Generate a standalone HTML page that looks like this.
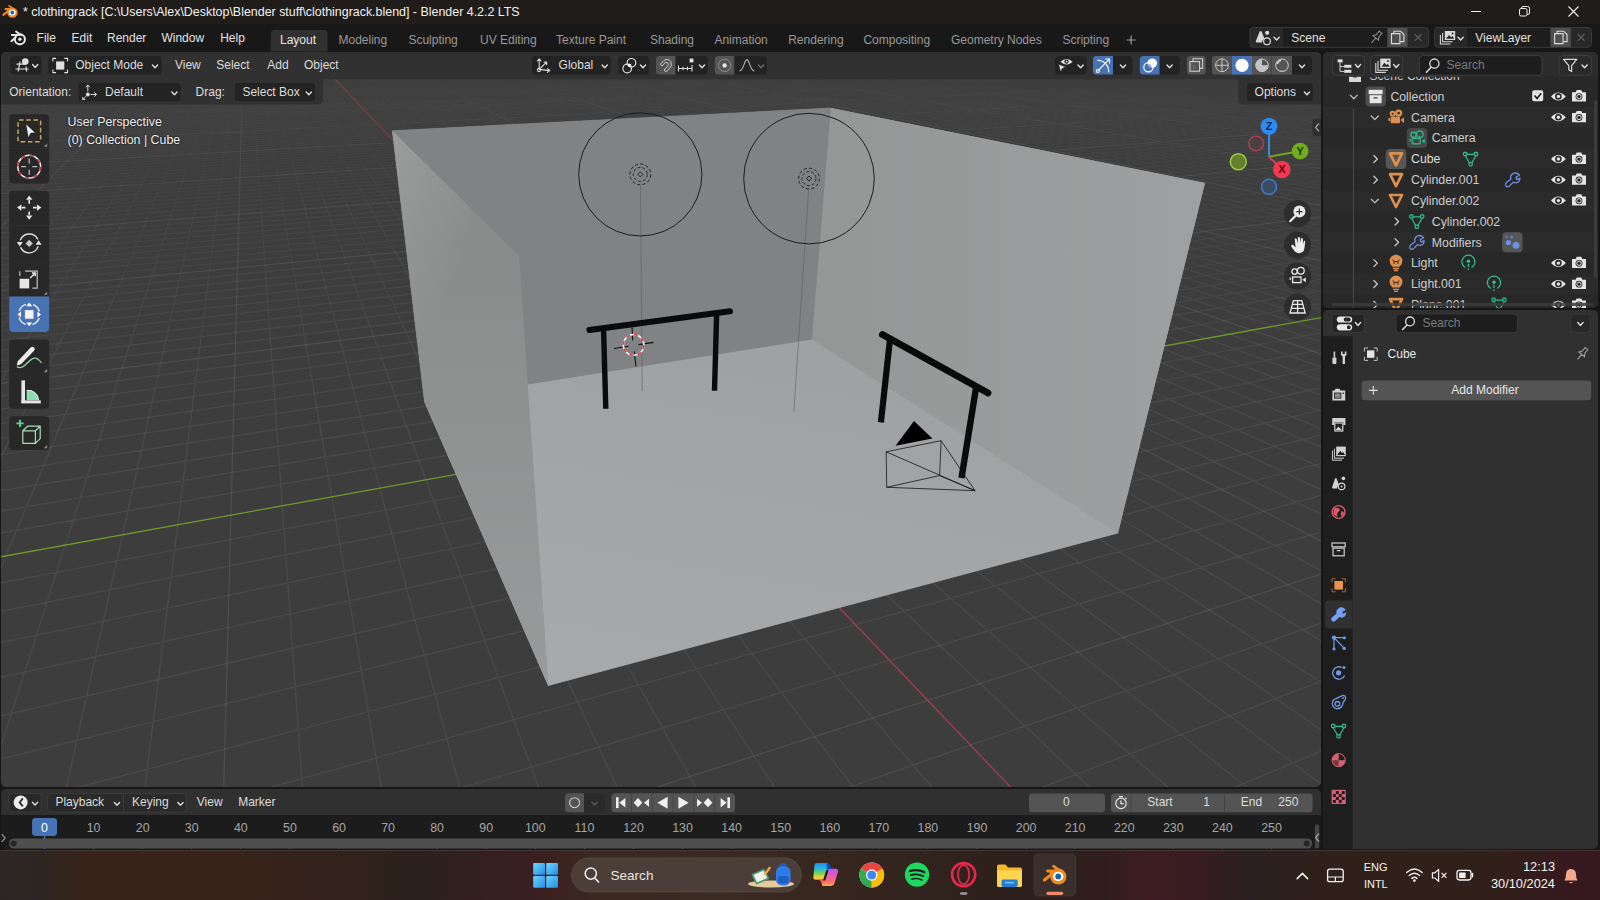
<!DOCTYPE html>
<html><head><meta charset="utf-8"><title>Blender</title>
<style>
html,body{margin:0;padding:0}
body{width:1600px;height:900px;position:relative;overflow:hidden;background:#161616;font-family:'Liberation Sans', sans-serif;}
.reg{position:absolute;overflow:hidden}
svg{position:absolute;left:0;top:0;display:block}
svg text{font-family:'Liberation Sans', sans-serif;white-space:pre}
</style></head><body>
<div class="reg" id="viewport" style="left:1px;top:52px;width:1320px;height:734.6px;border-radius:5px;background:#3d3d3d">
<svg width="1320" height="734.6" viewBox="1 52 1320 734.6">
<defs><linearGradient id="gfade" x1="0" y1="0" x2="0" y2="1" gradientUnits="userSpaceOnUse"><stop offset="0" stop-color="#fff" stop-opacity="0.15"/><stop offset="0.12" stop-color="#fff" stop-opacity="0.35"/><stop offset="0.45" stop-color="#fff" stop-opacity="1"/></linearGradient><mask id="mfade" maskUnits="userSpaceOnUse" x="0" y="0" width="1600" height="900"><rect x="0" y="0" width="1600" height="900" fill="url(#gfade)"/></mask><linearGradient id="lwall" x1="398" y1="0" x2="545" y2="60" gradientUnits="userSpaceOnUse"><stop offset="0" stop-color="#a2a4a4"/><stop offset="1" stop-color="#8a8c8c"/></linearGradient><linearGradient id="lwall2" x1="0" y1="250" x2="0" y2="690" gradientUnits="userSpaceOnUse"><stop offset="0" stop-color="#a3a5a6" stop-opacity="0"/><stop offset="1" stop-color="#a3a5a6" stop-opacity="0.6"/></linearGradient><linearGradient id="rwall" x1="830" y1="0" x2="1200" y2="0" gradientUnits="userSpaceOnUse"><stop offset="0" stop-color="#959797"/><stop offset="1" stop-color="#9ea0a1"/></linearGradient><linearGradient id="floor" x1="700" y1="340" x2="640" y2="690" gradientUnits="userSpaceOnUse"><stop offset="0" stop-color="#a0a1a3"/><stop offset="1" stop-color="#a8a9ab"/></linearGradient></defs>
<path d="M173.1,79.8L229.5,78.0M229.5,78.0L283.8,76.3M283.8,76.3L336.1,74.6M113.4,82.5L172.5,80.6M172.5,80.6L229.4,78.7M229.4,78.7L284.1,77.0M284.1,77.0L336.8,75.3M336.8,75.3L387.6,73.7M50.3,85.3L112.4,83.2M112.4,83.2L172.0,81.3M172.0,81.3L229.3,79.5M229.3,79.5L284.4,77.7M284.4,77.7L337.5,76.0M337.5,76.0L388.7,74.3M388.7,74.3L438.0,72.7M-2.0,87.7L48.7,86.1M48.7,86.1L111.3,84.1M111.3,84.1L171.4,82.1M171.4,82.1L229.1,80.2M229.1,80.2L284.7,78.4M284.7,78.4L338.2,76.7M338.2,76.7L389.7,75.0M389.7,75.0L439.4,73.4M439.4,73.4L487.4,71.8M-2.0,88.5L47.1,86.9M47.1,86.9L110.2,84.9M110.2,84.9L170.8,82.9M170.8,82.9L229.0,81.0M229.0,81.0L285.0,79.1M285.0,79.1L338.9,77.4M338.9,77.4L390.8,75.7M390.8,75.7L440.9,74.0M440.9,74.0L489.1,72.4M489.1,72.4L535.7,70.9M-2.0,89.4L45.4,87.8M45.4,87.8L109.1,85.7M109.1,85.7L170.2,83.7M170.2,83.7L228.9,81.7M228.9,81.7L285.3,79.9M285.3,79.9L339.6,78.1M339.6,78.1L391.9,76.4M391.9,76.4L442.3,74.7M442.3,74.7L490.9,73.1M490.9,73.1L537.8,71.5M537.8,71.5L583.0,70.0M-2.0,90.2L43.7,88.7M43.7,88.7L107.9,86.5M107.9,86.5L169.6,84.5M169.6,84.5L228.7,82.5M228.7,82.5L285.6,80.6M285.6,80.6L340.4,78.8M340.4,78.8L393.0,77.0M393.0,77.0L443.8,75.4M443.8,75.4L492.7,73.7M492.7,73.7L539.9,72.2M539.9,72.2L585.4,70.6M-2.0,91.1L41.9,89.6M41.9,89.6L106.8,87.4M106.8,87.4L168.9,85.3M168.9,85.3L228.6,83.3M228.6,83.3L286.0,81.4M286.0,81.4L341.1,79.5M341.1,79.5L394.2,77.8M394.2,77.8L445.3,76.0M445.3,76.0L494.5,74.4M494.5,74.4L542.0,72.8M542.0,72.8L587.9,71.2M587.9,71.2L632.1,69.8M-2.0,92.8L38.4,91.4M38.4,91.4L104.4,89.2M104.4,89.2L167.6,87.0M167.6,87.0L228.3,84.9M228.3,84.9L286.6,82.9M286.6,82.9L342.6,81.0M342.6,81.0L396.5,79.2M396.5,79.2L448.3,77.4M448.3,77.4L498.3,75.7M498.3,75.7L546.4,74.1M546.4,74.1L592.8,72.5M592.8,72.5L637.6,71.0M-2.0,93.7L36.5,92.4M36.5,92.4L103.2,90.1M103.2,90.1L167.0,87.9M167.0,87.9L228.2,85.8M228.2,85.8L287.0,83.7M287.0,83.7L343.4,81.8M343.4,81.8L397.7,79.9M397.7,79.9L449.9,78.1M449.9,78.1L500.2,76.4M500.2,76.4L548.6,74.7M548.6,74.7L595.3,73.1M595.3,73.1L640.4,71.6M640.4,71.6L683.9,70.1M-2.0,94.6L34.7,93.3M34.7,93.3L101.9,91.0M101.9,91.0L166.3,88.7M166.3,88.7L228.1,86.6M228.1,86.6L287.3,84.6M287.3,84.6L344.2,82.6M344.2,82.6L398.9,80.7M398.9,80.7L451.5,78.9M451.5,78.9L502.1,77.1M502.1,77.1L550.9,75.4M550.9,75.4L597.9,73.8M597.9,73.8L643.2,72.2M643.2,72.2L687.0,70.7M-2.0,95.5L32.8,94.3M32.8,94.3L100.7,91.9M100.7,91.9L165.6,89.6M165.6,89.6L227.9,87.5M227.9,87.5L287.7,85.4M287.7,85.4L345.0,83.4M345.0,83.4L400.1,81.4M400.1,81.4L453.1,79.6M453.1,79.6L504.1,77.8M504.1,77.8L553.2,76.1M553.2,76.1L600.5,74.4M600.5,74.4L646.1,72.8M646.1,72.8L690.2,71.3M690.2,71.3L732.7,69.8M-2.0,96.4L30.9,95.3M30.9,95.3L99.4,92.9M99.4,92.9L165.0,90.6M165.0,90.6L227.8,88.3M227.8,88.3L288.0,86.2M288.0,86.2L345.8,84.2M345.8,84.2L401.4,82.2M401.4,82.2L454.7,80.3M454.7,80.3L506.1,78.5M506.1,78.5L555.5,76.8M555.5,76.8L603.1,75.1M603.1,75.1L649.1,73.5M649.1,73.5L693.4,71.9M693.4,71.9L736.1,70.4M-2.0,97.4L28.9,96.3M28.9,96.3L98.1,93.8M98.1,93.8L164.2,91.5M164.2,91.5L227.6,89.2M227.6,89.2L288.4,87.1M288.4,87.1L346.7,85.0M346.7,85.0L402.6,83.0M402.6,83.0L456.4,81.1M456.4,81.1L508.1,79.2M508.1,79.2L557.9,77.5M557.9,77.5L605.8,75.8M605.8,75.8L652.0,74.1M652.0,74.1L696.6,72.5M696.6,72.5L739.6,71.0M-2.0,98.4L26.9,97.3M26.9,97.3L96.7,94.8M96.7,94.8L163.5,92.4M163.5,92.4L227.5,90.1M227.5,90.1L288.7,87.9M288.7,87.9L347.5,85.8M347.5,85.8L403.9,83.8M403.9,83.8L458.1,81.9M458.1,81.9L510.2,80.0M510.2,80.0L560.3,78.2M560.3,78.2L608.6,76.5M608.6,76.5L655.0,74.8M655.0,74.8L699.9,73.2M699.9,73.2L743.1,71.6M743.1,71.6L784.9,70.1M-2.0,99.4L24.8,98.4M24.8,98.4L95.4,95.8M95.4,95.8L162.8,93.4M348.4,86.7L405.2,84.6M405.2,84.6L459.8,82.6M459.8,82.6L512.3,80.7M512.3,80.7L562.7,78.9M562.7,78.9L611.3,77.2M611.3,77.2L658.1,75.5M658.1,75.5L703.2,73.8M703.2,73.8L746.7,72.3M746.7,72.3L788.7,70.7M-2.0,100.4L22.8,99.5M22.8,99.5L94.0,96.9M461.6,83.4L514.4,81.5M514.4,81.5L565.2,79.6M565.2,79.6L614.1,77.9M614.1,77.9L661.2,76.1M661.2,76.1L706.6,74.5M706.6,74.5L750.4,72.9M750.4,72.9L792.6,71.3M518.8,83.1L570.3,81.1M570.3,81.1L619.9,79.3M619.9,79.3L667.6,77.5M667.6,77.5L713.5,75.8M713.5,75.8L757.8,74.2M757.8,74.2L800.5,72.6M800.5,72.6L841.7,71.1M572.9,81.9L622.8,80.0M622.8,80.0L670.8,78.2M670.8,78.2L717.1,76.5M717.1,76.5L761.6,74.8M761.6,74.8L804.5,73.2M804.5,73.2L846.0,71.7M575.5,82.7L625.8,80.8M625.8,80.8L674.1,79.0M674.1,79.0L720.6,77.2M720.6,77.2L765.4,75.5M765.4,75.5L808.6,73.9M808.6,73.9L850.3,72.3M628.8,81.6L677.5,79.7M677.5,79.7L724.3,77.9M724.3,77.9L769.4,76.2M769.4,76.2L812.8,74.5M812.8,74.5L854.7,72.9M631.9,82.3L680.9,80.4M680.9,80.4L728.0,78.6M728.0,78.6L773.3,76.9M773.3,76.9L817.0,75.2M817.0,75.2L859.1,73.6M859.1,73.6L899.8,72.0M684.3,81.2L731.8,79.4M731.8,79.4L777.4,77.6M777.4,77.6L821.3,75.9M821.3,75.9L863.7,74.2M863.7,74.2L904.5,72.6M687.9,82.0L735.6,80.1M735.6,80.1L781.5,78.3M781.5,78.3L825.7,76.6M825.7,76.6L868.3,74.9M868.3,74.9L909.3,73.3M691.4,82.8L739.5,80.9M739.5,80.9L785.6,79.0M785.6,79.0L830.1,77.3M830.1,77.3L872.9,75.6M872.9,75.6L914.2,73.9M743.4,81.6L789.9,79.8M789.9,79.8L834.6,78.0M834.6,78.0L877.6,76.2M877.6,76.2L919.1,74.6M919.1,74.6L959.1,73.0M751.5,83.2L798.5,81.3M798.5,81.3L843.8,79.4M843.8,79.4L887.3,77.6M887.3,77.6L929.2,75.9M929.2,75.9L969.7,74.3M803.0,82.0L848.5,80.2M848.5,80.2L892.3,78.4M892.3,78.4L934.4,76.6M934.4,76.6L975.0,74.9M807.5,82.8L853.2,80.9M853.2,80.9L897.3,79.1M897.3,79.1L939.7,77.3M939.7,77.3L980.5,75.6M812.0,83.6L858.1,81.7M858.1,81.7L902.4,79.8M902.4,79.8L945.0,78.0M945.0,78.0L986.0,76.3M986.0,76.3L1025.6,74.6M816.7,84.4L863.0,82.5M863.0,82.5L907.6,80.6M907.6,80.6L950.4,78.7M950.4,78.7L991.7,77.0M991.7,77.0L1031.4,75.3M868.0,83.2L912.8,81.3M912.8,81.3L955.9,79.5M955.9,79.5L997.4,77.7M997.4,77.7L1037.3,76.0M873.1,84.0L918.2,82.1M918.2,82.1L961.5,80.2M961.5,80.2L1003.2,78.4M1003.2,78.4L1043.3,76.7M878.3,84.9L923.6,82.9M923.6,82.9L967.2,81.0M967.2,81.0L1009.1,79.1M1009.1,79.1L1049.4,77.4M883.6,85.7L929.1,83.7M929.1,83.7L972.9,81.7M972.9,81.7L1015.0,79.9M1015.0,79.9L1055.5,78.1M940.5,85.3L984.7,83.3M984.7,83.3L1027.3,81.4M1027.3,81.4L1068.2,79.5M1068.2,79.5L1107.6,77.7M946.3,86.1L990.8,84.1M990.8,84.1L1033.6,82.1M1033.6,82.1L1074.7,80.3M1074.7,80.3L1114.2,78.5M952.2,87.0L996.9,84.9M996.9,84.9L1039.9,82.9M1039.9,82.9L1081.2,81.0M1081.2,81.0L1121.0,79.2M1003.2,85.8L1046.4,83.7M1046.4,83.7L1087.9,81.8M1087.9,81.8L1127.8,79.9M1009.5,86.6L1053.0,84.5M1053.0,84.5L1094.7,82.6M1094.7,82.6L1134.8,80.7M1016.0,87.5L1059.7,85.4M1059.7,85.4L1101.6,83.4M1101.6,83.4L1141.9,81.4M1141.9,81.4L1180.6,79.6M1022.6,88.3L1066.5,86.2M1066.5,86.2L1108.6,84.2M1108.6,84.2L1149.1,82.2M1149.1,82.2L1188.0,80.3M1029.3,89.2L1073.4,87.1M1073.4,87.1L1115.7,85.0M1115.7,85.0L1156.4,83.0M1156.4,83.0L1195.4,81.1M1036.1,90.1L1080.4,87.9M1080.4,87.9L1123.0,85.8M1123.0,85.8L1163.8,83.8M1163.8,83.8L1203.0,81.8M1094.9,89.7L1137.8,87.5M1137.8,87.5L1179.0,85.4M1179.0,85.4L1218.6,83.4M1102.3,90.6L1145.4,88.4M1145.4,88.4L1186.8,86.3M1186.8,86.3L1226.6,84.2M1109.8,91.5L1153.2,89.3M1153.2,89.3L1194.8,87.1M1194.8,87.1L1234.7,85.0M1117.5,92.5L1161.1,90.2M1161.1,90.2L1202.8,88.0M1202.8,88.0L1242.9,85.9M1242.9,85.9L1281.3,83.9M1125.3,93.4L1169.1,91.1M1169.1,91.1L1211.1,88.9M1211.1,88.9L1251.3,86.7M1251.3,86.7L1289.9,84.7M1177.3,92.0L1219.4,89.8M1219.4,89.8L1259.8,87.6M1259.8,87.6L1298.5,85.5M1185.6,93.0L1227.9,90.7M1227.9,90.7L1268.5,88.5M1268.5,88.5L1307.3,86.3M1194.0,94.0L1236.5,91.6M1236.5,91.6L1277.3,89.4M1277.3,89.4L1316.3,87.2M1202.6,95.0L1245.3,92.6M1245.3,92.6L1286.2,90.3M1286.2,90.3L1324.0,88.1M1220.3,97.0L1263.4,94.5M1263.4,94.5L1304.6,92.1M1304.6,92.1L1324.0,91.0M1229.4,98.0L1272.7,95.5M1272.7,95.5L1314.1,93.1M1314.1,93.1L1324.0,92.5M1238.7,99.1L1282.2,96.5M1282.2,96.5L1323.7,94.0M1323.7,94.0L1324.0,94.0M1291.8,97.6L1324.0,95.6M1301.6,98.6L1324.0,97.2M1311.6,99.7L1324.0,98.9M1321.8,100.8L1324.0,100.6M7.4,89.1L-2.0,93.2M29.3,83.7L18.0,88.9M18.0,88.9L5.6,94.6M5.6,94.6L-2.0,98.1M39.3,83.6L28.6,88.7M28.6,88.7L16.7,94.4M16.7,94.4L3.5,100.8M59.4,83.2L49.7,88.3M49.7,88.3L39.0,94.0M39.0,94.0L27.0,100.3M69.4,83.0L60.2,88.1M60.2,88.1L50.0,93.8M50.0,93.8L38.7,100.1M79.3,82.8L70.6,87.9M70.6,87.9L61.1,93.6M61.1,93.6L50.4,99.9M89.2,82.6L81.0,87.7M81.0,87.7L72.0,93.4M72.0,93.4L62.0,99.7M99.0,82.5L91.4,87.5M91.4,87.5L83.0,93.2M83.0,93.2L73.5,99.5M108.8,82.3L101.7,87.3M101.7,87.3L93.9,93.0M93.9,93.0L85.1,99.2M121.2,80.1L115.0,84.8M115.0,84.8L108.3,90.0M108.3,90.0L100.8,95.8M130.7,79.9L125.1,84.6M125.1,84.6L118.8,89.8M118.8,89.8L111.9,95.6M140.2,79.8L135.0,84.5M135.0,84.5L129.3,89.6M129.3,89.6L122.9,95.4M159.3,79.3L155.0,83.9M155.0,83.9L150.4,89.0M150.4,89.0L145.2,94.7M168.8,79.0L165.0,83.6M165.0,83.6L160.9,88.7M160.9,88.7L156.3,94.3M178.2,78.7L174.9,83.3M174.9,83.3L171.3,88.3M171.3,88.3L167.3,93.9M187.6,78.4L184.8,82.9M184.8,82.9L181.7,88.0M181.7,88.0L178.2,93.5M196.9,78.1L194.5,82.6M194.5,82.6L191.9,87.6M191.9,87.6L189.1,93.1M206.1,77.8L204.2,82.3M204.2,82.3L202.2,87.3M202.2,87.3L199.9,92.7M215.3,77.5L213.9,82.0M213.9,82.0L212.3,86.9M212.3,86.9L210.6,92.4M224.5,77.2L223.5,81.7M223.5,81.7L222.4,86.6M222.4,86.6L221.2,92.0M233.5,76.9L233.0,81.3M233.0,81.3L232.4,86.2M232.4,86.2L231.7,91.6M251.5,76.4L251.9,80.7M251.9,80.7L252.2,85.5M252.2,85.5L252.6,90.8M260.5,76.1L261.2,80.4M261.2,80.4L262.0,85.2M262.0,85.2L262.9,90.5M269.3,75.8L270.5,80.1M270.5,80.1L271.7,84.8M271.7,84.8L273.1,90.1M278.1,75.5L279.7,79.8M279.7,79.8L281.4,84.5M281.4,84.5L283.3,89.7M286.9,75.3L288.8,79.5M288.8,79.5L291.0,84.2M291.0,84.2L293.4,89.3M295.6,75.0L297.9,79.2M297.9,79.2L300.6,83.9M300.6,83.9L303.4,89.0M304.2,74.7L307.0,78.9M307.0,78.9L310.0,83.5M310.0,83.5L313.4,88.6M312.8,74.4L316.0,78.6M316.0,78.6L319.5,83.2M319.5,83.2L323.3,88.3M321.4,74.2L324.9,78.3M324.9,78.3L328.8,82.9M328.8,82.9L333.1,87.9M338.3,73.6L342.6,77.7M342.6,77.7L347.3,82.2M347.3,82.2L352.6,87.2M346.7,73.4L351.4,77.4M351.4,77.4L356.5,81.9M356.5,81.9L362.2,86.8M355.0,73.1L360.1,77.2M360.1,77.2L365.6,81.6M365.6,81.6L371.7,86.5M363.3,72.9L368.7,76.9M368.7,76.9L374.7,81.3M374.7,81.3L381.2,86.1M371.6,72.6L377.3,76.6M377.3,76.6L383.7,81.0M383.7,81.0L390.6,85.8M379.8,72.3L385.9,76.3M385.9,76.3L392.6,80.7M392.6,80.7L400.0,85.5M387.9,72.1L394.4,76.0M394.4,76.0L401.5,80.4M401.5,80.4L409.3,85.1M396.0,71.8L402.8,75.8M402.8,75.8L410.3,80.1M410.3,80.1L418.5,84.8M404.1,71.6L411.2,75.5M411.2,75.5L419.1,79.7M419.1,79.7L427.7,84.4M420.0,71.1L427.9,74.9M427.9,74.9L436.4,79.1M436.4,79.1L445.9,83.8M427.9,70.8L436.1,74.7M436.1,74.7L445.1,78.9M445.1,78.9L454.9,83.5M435.8,70.6L444.3,74.4M444.3,74.4L453.6,78.6M453.6,78.6L463.8,83.1M452.4,74.1L462.1,78.3M462.1,78.3L472.7,82.8M460.5,73.9L470.5,78.0M470.5,78.0L481.5,82.5M468.6,73.6L478.9,77.7M478.9,77.7L490.2,82.2M476.6,73.3L487.3,77.4M487.3,77.4L498.9,81.9M484.5,73.1L495.5,77.1M495.5,77.1L507.6,81.5M492.4,72.8L503.8,76.8M503.8,76.8L516.2,81.2M508.1,72.3L520.1,76.3M520.1,76.3L533.2,80.6M515.9,72.0L528.2,76.0M528.2,76.0L541.6,80.3M523.6,71.8L536.2,75.7M536.2,75.7L550.0,80.0M550.0,80.0L565.1,84.7M531.3,71.5L544.2,75.4M544.2,75.4L558.3,79.7M558.3,79.7L573.8,84.4M538.9,71.3L552.1,75.1M552.1,75.1L566.6,79.4M566.6,79.4L582.4,84.0M546.5,71.0L560.0,74.9M560.0,74.9L574.8,79.1M574.8,79.1L591.0,83.7M554.0,70.8L567.8,74.6M567.8,74.6L582.9,78.8M582.9,78.8L599.5,83.4M561.5,70.5L575.6,74.3M575.6,74.3L591.0,78.5M591.0,78.5L608.0,83.1M569.0,70.3L583.4,74.1M583.4,74.1L599.1,78.2M599.1,78.2L616.4,82.7M583.8,69.8L598.7,73.5M598.7,73.5L615.1,77.6M615.1,77.6L633.0,82.1M591.1,69.5L606.3,73.3M606.3,73.3L623.0,77.3M623.0,77.3L641.2,81.8M598.4,69.3L613.9,73.0M613.9,73.0L630.8,77.0M630.8,77.0L649.4,81.5M605.6,69.1L621.4,72.7M621.4,72.7L638.6,76.8M638.6,76.8L657.5,81.2M612.8,68.8L628.9,72.5M628.9,72.5L646.4,76.5M646.4,76.5L665.6,80.9M636.3,72.2L654.1,76.2M654.1,76.2L673.6,80.5M643.7,72.0L661.8,75.9M661.8,75.9L681.6,80.2M651.0,71.7L669.4,75.6M669.4,75.6L689.5,79.9M658.3,71.5L677.0,75.4M677.0,75.4L697.3,79.6M697.3,79.6L719.7,84.3M672.8,71.0L692.0,74.8M692.0,74.8L712.9,79.0M712.9,79.0L735.9,83.7M680.0,70.7L699.4,74.5M699.4,74.5L720.6,78.7M720.6,78.7L744.0,83.3M687.1,70.5L706.8,74.3M706.8,74.3L728.3,78.4M728.3,78.4L751.9,83.0M694.2,70.2L714.1,74.0M714.1,74.0L735.9,78.1M735.9,78.1L759.8,82.7M701.3,70.0L721.4,73.7M721.4,73.7L743.5,77.9M743.5,77.9L767.7,82.4M708.3,69.7L728.7,73.5M728.7,73.5L751.0,77.6M751.0,77.6L775.5,82.0M715.2,69.5L735.9,73.2M735.9,73.2L758.5,77.3M758.5,77.3L783.3,81.7M722.2,69.3L743.1,73.0M743.1,73.0L765.9,77.0M765.9,77.0L791.0,81.4M729.1,69.0L750.2,72.7M750.2,72.7L773.3,76.7M773.3,76.7L798.6,81.1M764.4,72.2L788.0,76.1M788.0,76.1L813.8,80.5M813.8,80.5L842.2,85.3M771.4,71.9L795.2,75.9M795.2,75.9L821.3,80.2M821.3,80.2L850.0,84.9M778.3,71.7L802.4,75.6M802.4,75.6L828.8,79.9M828.8,79.9L857.8,84.6M785.3,71.4L809.6,75.3M809.6,75.3L836.2,79.6M836.2,79.6L865.5,84.2M792.1,71.2L816.7,75.0M816.7,75.0L843.6,79.3M843.6,79.3L873.1,83.9M799.0,70.9L823.8,74.8M823.8,74.8L850.9,79.0M850.9,79.0L880.7,83.6M805.8,70.7L830.8,74.5M830.8,74.5L858.2,78.7M858.2,78.7L888.2,83.3M812.6,70.4L837.8,74.2M837.8,74.2L865.4,78.4M865.4,78.4L895.7,82.9M819.3,70.2L844.8,74.0M844.8,74.0L872.6,78.1M872.6,78.1L903.1,82.6M903.1,82.6L936.8,87.6M858.5,73.4L886.8,77.5M886.8,77.5L917.9,82.0M917.9,82.0L952.0,86.9M865.4,73.2L893.9,77.2M893.9,77.2L925.1,81.7M925.1,81.7L959.6,86.6M872.1,72.9L900.9,76.9M900.9,76.9L932.4,81.3M932.4,81.3L967.1,86.2M878.9,72.6L907.9,76.6M907.9,76.6L939.6,81.0M939.6,81.0L974.5,85.9M885.6,72.4L914.8,76.4M914.8,76.4L946.7,80.7M946.7,80.7L981.9,85.5M892.3,72.1L921.7,76.1M921.7,76.1L953.8,80.4M953.8,80.4L989.2,85.2M898.9,71.9L928.5,75.8M928.5,75.8L960.9,80.1M960.9,80.1L996.5,84.8M996.5,84.8L1035.9,90.1M905.5,71.6L935.3,75.5M935.3,75.5L967.9,79.8M967.9,79.8L1003.8,84.5M1003.8,84.5L1043.4,89.7M942.0,75.3L974.9,79.5M974.9,79.5L1011.0,84.2M1011.0,84.2L1050.8,89.3M955.4,74.7L988.7,78.9M988.7,78.9L1025.2,83.5M1025.2,83.5L1065.5,88.6M962.1,74.4L995.5,78.6M995.5,78.6L1032.3,83.2M1032.3,83.2L1072.8,88.3M968.7,74.2L1002.3,78.3M1002.3,78.3L1039.3,82.9M1039.3,82.9L1080.0,87.9M1080.0,87.9L1125.2,93.5M975.2,73.9L1009.1,78.0M1009.1,78.0L1046.2,82.6M1046.2,82.6L1087.2,87.5M1087.2,87.5L1132.6,93.1M981.7,73.6L1015.8,77.7M1015.8,77.7L1053.2,82.2M1053.2,82.2L1094.3,87.2M1094.3,87.2L1139.9,92.7M988.2,73.4L1022.5,77.4M1022.5,77.4L1060.0,81.9M1060.0,81.9L1101.4,86.8M1101.4,86.8L1147.2,92.3M1029.1,77.2L1066.8,81.6M1066.8,81.6L1108.4,86.5M1108.4,86.5L1154.4,91.9M1035.7,76.9L1073.6,81.3M1073.6,81.3L1115.4,86.1M1115.4,86.1L1161.6,91.5M1161.6,91.5L1213.0,97.5M1042.2,76.6L1080.4,81.0M1080.4,81.0L1122.3,85.8M1122.3,85.8L1168.8,91.1M1168.8,91.1L1220.4,97.1M1055.2,76.0L1093.7,80.4M1093.7,80.4L1136.1,85.1M1136.1,85.1L1182.9,90.4M1182.9,90.4L1234.9,96.2M1061.6,75.8L1100.3,80.1M1100.3,80.1L1142.9,84.8M1142.9,84.8L1189.9,90.0M1189.9,90.0L1242.0,95.8M1106.9,79.7L1149.6,84.4M1149.6,84.4L1196.8,89.6M1196.8,89.6L1249.2,95.4M1249.2,95.4L1307.6,101.8M1113.4,79.4L1156.3,84.1M1156.3,84.1L1203.7,89.3M1203.7,89.3L1256.2,95.0M1256.2,95.0L1314.9,101.4M1119.9,79.1L1163.0,83.8M1163.0,83.8L1210.5,88.9M1210.5,88.9L1263.3,94.6M1263.3,94.6L1322.1,100.9M1126.3,78.9L1169.6,83.5M1169.6,83.5L1217.3,88.5M1217.3,88.5L1270.2,94.2M1270.2,94.2L1324.0,99.9M1132.7,78.6L1176.1,83.1M1176.1,83.1L1224.0,88.2M1224.0,88.2L1277.1,93.8M1277.1,93.8L1324.0,98.7M1139.1,78.3L1182.7,82.8M1182.7,82.8L1230.7,87.8M1230.7,87.8L1284.0,93.4M1284.0,93.4L1324.0,97.5M1189.2,82.5L1237.4,87.5M1237.4,87.5L1290.8,93.0M1290.8,93.0L1324.0,96.4M1202.0,81.9L1250.5,86.8M1250.5,86.8L1304.3,92.2M1304.3,92.2L1324.0,94.2M1208.4,81.5L1257.1,86.4M1257.1,86.4L1311.0,91.8M1311.0,91.8L1324.0,93.1M1214.7,81.2L1263.5,86.1M1263.5,86.1L1317.6,91.4M1317.6,91.4L1324.0,92.1M1270.0,85.7L1324.0,91.0M1276.3,85.4L1324.0,90.0M1282.7,85.0L1324.0,89.0M1289.0,84.7L1324.0,88.1" stroke="#fff" stroke-opacity="0.009" stroke-width="1.25" fill="none"/>
<path d="M162.8,93.4L227.3,91.1M227.3,91.1L289.1,88.8M289.1,88.8L348.4,86.7M94.0,96.9L162.1,94.4M162.1,94.4L227.2,92.0M227.2,92.0L289.5,89.7M289.5,89.7L349.2,87.5M349.2,87.5L406.5,85.4M406.5,85.4L461.6,83.4M-2.0,102.4L18.5,101.7M18.5,101.7L91.2,99.0M91.2,99.0L160.5,96.4M160.5,96.4L226.8,93.9M226.8,93.9L290.3,91.6M290.3,91.6L351.0,89.3M351.0,89.3L409.3,87.1M409.3,87.1L465.1,85.1M465.1,85.1L518.8,83.1M-2.0,103.5L16.3,102.8M16.3,102.8L89.7,100.0M89.7,100.0L159.8,97.4M159.8,97.4L226.7,94.9M226.7,94.9L290.7,92.5M290.7,92.5L352.0,90.2M352.0,90.2L410.7,88.0M410.7,88.0L467.0,85.9M467.0,85.9L521.0,83.9M521.0,83.9L572.9,81.9M-2.0,104.6L14.0,103.9M14.0,103.9L88.2,101.1M88.2,101.1L159.0,98.5M159.0,98.5L226.5,95.9M226.5,95.9L291.1,93.5M291.1,93.5L352.9,91.1M352.9,91.1L412.1,88.9M412.1,88.9L468.8,86.7M468.8,86.7L523.3,84.7M523.3,84.7L575.5,82.7M-2.0,105.6L11.8,105.1M11.8,105.1L86.7,102.3M86.7,102.3L158.1,99.5M158.1,99.5L226.3,96.9M226.3,96.9L291.5,94.4M291.5,94.4L353.8,92.1M353.8,92.1L413.5,89.8M413.5,89.8L470.7,87.6M470.7,87.6L525.6,85.5M525.6,85.5L578.2,83.5M578.2,83.5L628.8,81.6M-2.0,106.8L9.4,106.3M9.4,106.3L85.1,103.4M85.1,103.4L157.3,100.6M157.3,100.6L226.2,98.0M226.2,98.0L291.9,95.4M291.9,95.4L354.8,93.0M354.8,93.0L415.0,90.7M415.0,90.7L472.6,88.5M472.6,88.5L527.9,86.3M527.9,86.3L581.0,84.3M581.0,84.3L631.9,82.3M-2.0,107.9L7.0,107.6M7.0,107.6L83.6,104.6M83.6,104.6L156.5,101.7M156.5,101.7L226.0,99.0M226.0,99.0L292.4,96.5M292.4,96.5L355.8,94.0M355.8,94.0L416.5,91.6M416.5,91.6L474.6,89.4M474.6,89.4L530.3,87.2M530.3,87.2L583.7,85.1M583.7,85.1L635.0,83.1M635.0,83.1L684.3,81.2M-2.0,109.1L4.6,108.8M4.6,108.8L82.0,105.8M82.0,105.8L155.6,102.9M155.6,102.9L225.8,100.1M225.8,100.1L292.8,97.5M292.8,97.5L356.8,95.0M356.8,95.0L418.0,92.6M418.0,92.6L476.6,90.3M476.6,90.3L532.7,88.1M532.7,88.1L586.6,86.0M586.6,86.0L638.2,83.9M638.2,83.9L687.9,82.0M-2.0,110.2L2.1,110.1M2.1,110.1L80.3,107.0M80.3,107.0L154.7,104.0M154.7,104.0L225.6,101.2M225.6,101.2L293.3,98.5M293.3,98.5L357.8,96.0M357.8,96.0L419.6,93.5M419.6,93.5L478.6,91.2M478.6,91.2L535.2,88.9M535.2,88.9L589.4,86.8M589.4,86.8L641.5,84.7M641.5,84.7L691.4,82.8M-2.0,111.5L-0.4,111.4M-0.4,111.4L78.6,108.2M78.6,108.2L153.8,105.2M153.8,105.2L225.4,102.3M225.4,102.3L293.7,99.6M293.7,99.6L358.9,97.0M358.9,97.0L421.1,94.5M421.1,94.5L480.7,92.1M480.7,92.1L537.7,89.8M537.7,89.8L592.3,87.7M592.3,87.7L644.8,85.6M644.8,85.6L695.1,83.6M695.1,83.6L743.4,81.6M-2.0,113.9L75.2,110.8M75.2,110.8L152.0,107.6M152.0,107.6L225.1,104.7M225.1,104.7L294.7,101.8M294.7,101.8L361.0,99.1M361.0,99.1L424.4,96.5M424.4,96.5L484.9,94.1M484.9,94.1L542.9,91.7M542.9,91.7L598.3,89.4M598.3,89.4L651.5,87.3M651.5,87.3L702.5,85.2M702.5,85.2L751.5,83.2M-2.0,115.2L73.4,112.1M73.4,112.1L151.0,108.9M151.0,108.9L224.9,105.9M224.9,105.9L295.1,103.0M295.1,103.0L362.1,100.2M362.1,100.2L426.0,97.6M426.0,97.6L487.1,95.0M487.1,95.0L545.5,92.6M545.5,92.6L601.4,90.3M601.4,90.3L655.0,88.1M655.0,88.1L706.3,86.0M706.3,86.0L755.6,84.0M755.6,84.0L803.0,82.0M-2.0,116.5L71.6,113.4M71.6,113.4L150.1,110.2M150.1,110.2L224.7,107.1M224.7,107.1L295.6,104.1M295.6,104.1L363.2,101.3M363.2,101.3L427.7,98.6M427.7,98.6L489.3,96.1M489.3,96.1L548.2,93.6M548.2,93.6L604.5,91.3M604.5,91.3L658.5,89.0M658.5,89.0L710.2,86.9M710.2,86.9L759.8,84.8M759.8,84.8L807.5,82.8M-2.0,117.8L69.7,114.8M69.7,114.8L149.1,111.5M429.5,99.7L491.6,97.1M491.6,97.1L550.9,94.6M550.9,94.6L607.7,92.2M607.7,92.2L662.1,89.9M662.1,89.9L714.1,87.7M714.1,87.7L764.1,85.6M764.1,85.6L812.0,83.6M-2.0,119.2L67.8,116.2M493.9,98.1L553.7,95.6M553.7,95.6L610.9,93.2M610.9,93.2L665.7,90.8M665.7,90.8L718.1,88.6M718.1,88.6L768.4,86.5M768.4,86.5L816.7,84.4M496.2,99.2L556.6,96.6M556.6,96.6L614.2,94.1M614.2,94.1L669.4,91.8M669.4,91.8L722.2,89.5M722.2,89.5L772.8,87.3M772.8,87.3L821.4,85.2M821.4,85.2L868.0,83.2M559.5,97.6L617.6,95.1M617.6,95.1L673.2,92.7M673.2,92.7L726.4,90.4M726.4,90.4L777.3,88.2M777.3,88.2L826.2,86.1M826.2,86.1L873.1,84.0M621.0,96.1L677.0,93.7M677.0,93.7L730.6,91.3M730.6,91.3L781.9,89.1M781.9,89.1L831.1,86.9M831.1,86.9L878.3,84.9M624.5,97.2L680.9,94.7M680.9,94.7L734.9,92.3M734.9,92.3L786.6,90.0M786.6,90.0L836.1,87.8M836.1,87.8L883.6,85.7M689.0,96.7L743.7,94.2M743.7,94.2L796.1,91.8M796.1,91.8L846.3,89.6M846.3,89.6L894.4,87.4M894.4,87.4L940.5,85.3M693.1,97.7L748.3,95.2M748.3,95.2L801.0,92.8M801.0,92.8L851.5,90.5M851.5,90.5L899.9,88.3M899.9,88.3L946.3,86.1M752.9,96.2L806.0,93.8M806.0,93.8L856.8,91.4M856.8,91.4L905.5,89.2M905.5,89.2L952.2,87.0M757.6,97.2L811.1,94.7M811.1,94.7L862.3,92.3M862.3,92.3L911.2,90.1M911.2,90.1L958.2,87.9M958.2,87.9L1003.2,85.8M762.4,98.3L816.3,95.7M816.3,95.7L867.8,93.3M867.8,93.3L917.1,91.0M917.1,91.0L964.3,88.7M964.3,88.7L1009.5,86.6M767.3,99.4L821.5,96.8M821.5,96.8L873.4,94.3M873.4,94.3L923.0,91.9M923.0,91.9L970.5,89.6M970.5,89.6L1016.0,87.5M826.9,97.8L879.1,95.3M879.1,95.3L929.0,92.9M929.0,92.9L976.8,90.5M976.8,90.5L1022.6,88.3M832.4,98.9L884.9,96.3M884.9,96.3L935.2,93.8M935.2,93.8L983.2,91.5M983.2,91.5L1029.3,89.2M837.9,99.9L890.9,97.3M890.9,97.3L941.4,94.8M941.4,94.8L989.8,92.4M989.8,92.4L1036.1,90.1M903.1,99.4L954.3,96.8M954.3,96.8L1003.2,94.4M1003.2,94.4L1050.0,92.0M1050.0,92.0L1094.9,89.7M909.3,100.5L960.9,97.9M960.9,97.9L1010.1,95.4M1010.1,95.4L1057.2,92.9M1057.2,92.9L1102.3,90.6M915.7,101.6L967.6,98.9M967.6,98.9L1017.2,96.4M1017.2,96.4L1064.5,93.9M1064.5,93.9L1109.8,91.5M922.2,102.8L974.5,100.0M974.5,100.0L1024.3,97.4M1024.3,97.4L1071.9,94.9M1071.9,94.9L1117.5,92.5M981.5,101.1L1031.6,98.4M1031.6,98.4L1079.5,95.9M1079.5,95.9L1125.3,93.4M988.6,102.2L1039.0,99.5M1039.0,99.5L1087.2,96.9M1087.2,96.9L1133.2,94.4M1133.2,94.4L1177.3,92.0M995.8,103.4L1046.6,100.6M1046.6,100.6L1095.1,98.0M1095.1,98.0L1141.3,95.4M1141.3,95.4L1185.6,93.0M1003.3,104.6L1054.3,101.7M1054.3,101.7L1103.1,99.0M1103.1,99.0L1149.6,96.4M1149.6,96.4L1194.0,94.0M1010.8,105.8L1062.2,102.9M1062.2,102.9L1111.2,100.1M1111.2,100.1L1158.0,97.5M1158.0,97.5L1202.6,95.0M1078.4,105.2L1128.0,102.3M1128.0,102.3L1175.2,99.6M1175.2,99.6L1220.3,97.0M1086.8,106.4L1136.6,103.5M1136.6,103.5L1184.1,100.7M1184.1,100.7L1229.4,98.0M1095.3,107.6L1145.4,104.7M1145.4,104.7L1193.2,101.8M1193.2,101.8L1238.7,99.1M1104.0,108.9L1154.4,105.8M1154.4,105.8L1202.4,102.9M1202.4,102.9L1248.1,100.2M1248.1,100.2L1291.8,97.6M1112.9,110.2L1163.6,107.1M1163.6,107.1L1211.8,104.1M1211.8,104.1L1257.8,101.3M1257.8,101.3L1301.6,98.6M1172.9,108.3L1221.4,105.3M1221.4,105.3L1267.6,102.4M1267.6,102.4L1311.6,99.7M1182.4,109.6L1231.2,106.5M1231.2,106.5L1277.6,103.6M1277.6,103.6L1321.8,100.8M1192.2,110.9L1241.2,107.7M1241.2,107.7L1287.8,104.7M1287.8,104.7L1324.0,102.4M1202.1,112.2L1251.4,109.0M1251.4,109.0L1298.2,105.9M1298.2,105.9L1324.0,104.3M1222.6,114.9L1272.4,111.6M1272.4,111.6L1319.6,108.4M1319.6,108.4L1324.0,108.1M1233.2,116.3L1283.2,112.9M1283.2,112.9L1324.0,110.1M1244.0,117.8L1294.3,114.3M1294.3,114.3L1324.0,112.2M1305.6,115.7L1324.0,114.4M1317.2,117.1L1324.0,116.6M3.5,100.8L-2.0,103.4M27.0,100.3L13.5,107.4M13.5,107.4L-1.7,115.5M-1.7,115.5L-2.0,115.7M38.7,100.1L26.0,107.2M26.0,107.2L11.6,115.3M50.4,99.9L38.3,107.0M38.3,107.0L24.7,115.0M62.0,99.7L50.7,106.8M50.7,106.8L37.9,114.8M73.5,99.5L63.0,106.5M63.0,106.5L51.0,114.5M85.1,99.2L75.2,106.3M75.2,106.3L64.0,114.3M100.8,95.8L92.4,102.2M92.4,102.2L82.9,109.5M82.9,109.5L72.3,117.7M111.9,95.6L104.1,102.0M104.1,102.0L95.4,109.3M95.4,109.3L85.6,117.4M122.9,95.4L115.9,101.8M115.9,101.8L107.9,109.0M107.9,109.0L98.9,117.2M145.2,94.7L139.4,101.1M139.4,101.1L132.9,108.2M156.3,94.3L151.2,100.6M151.2,100.6L145.4,107.7M167.3,93.9L162.8,100.2M162.8,100.2L157.8,107.2M178.2,93.5L174.4,99.7M174.4,99.7L170.1,106.7M189.1,93.1L185.9,99.3M185.9,99.3L182.3,106.2M199.9,92.7L197.3,98.9M197.3,98.9L194.4,105.7M210.6,92.4L208.6,98.4M208.6,98.4L206.4,105.2M221.2,92.0L219.8,98.0M219.8,98.0L218.3,104.7M231.7,91.6L231.0,97.6M231.0,97.6L230.1,104.3M252.6,90.8L253.0,96.7M253.0,96.7L253.5,103.3M262.9,90.5L263.9,96.3M263.9,96.3L265.0,102.8M273.1,90.1L274.7,95.9M274.7,95.9L276.4,102.4M283.3,89.7L285.4,95.5M285.4,95.5L287.8,101.9M293.4,89.3L296.1,95.1M296.1,95.1L299.0,101.5M303.4,89.0L306.6,94.7M306.6,94.7L310.2,101.0M313.4,88.6L317.1,94.3M317.1,94.3L321.3,100.5M323.3,88.3L327.5,93.9M327.5,93.9L332.3,100.1M333.1,87.9L337.9,93.5M337.9,93.5L343.2,99.7M352.6,87.2L358.3,92.7M358.3,92.7L364.8,98.8M362.2,86.8L368.4,92.3M368.4,92.3L375.4,98.3M371.7,86.5L378.5,91.9M378.5,91.9L386.0,97.9M381.2,86.1L388.5,91.5M388.5,91.5L396.5,97.5M396.5,97.5L405.5,104.2M390.6,85.8L398.3,91.1M398.3,91.1L406.9,97.1M406.9,97.1L416.5,103.7M400.0,85.5L408.2,90.8M408.2,90.8L417.3,96.6M417.3,96.6L427.4,103.2M409.3,85.1L417.9,90.4M417.9,90.4L427.5,96.2M427.5,96.2L438.2,102.7M418.5,84.8L427.6,90.0M427.6,90.0L437.7,95.8M437.7,95.8L449.0,102.3M427.7,84.4L437.2,89.6M437.2,89.6L447.8,95.4M447.8,95.4L459.6,101.8M445.9,83.8L456.3,88.9M456.3,88.9L467.8,94.6M467.8,94.6L480.7,100.9M454.9,83.5L465.7,88.5M465.7,88.5L477.7,94.2M477.7,94.2L491.1,100.5M463.8,83.1L475.1,88.2M475.1,88.2L487.5,93.8M487.5,93.8L501.4,100.0M472.7,82.8L484.3,87.8M484.3,87.8L497.3,93.4M497.3,93.4L511.7,99.6M481.5,82.5L493.6,87.5M493.6,87.5L507.0,93.0M507.0,93.0L521.9,99.1M490.2,82.2L502.7,87.1M502.7,87.1L516.6,92.6M516.6,92.6L531.9,98.7M498.9,81.9L511.8,86.8M511.8,86.8L526.1,92.2M526.1,92.2L542.0,98.3M507.6,81.5L520.9,86.4M520.9,86.4L535.6,91.8M535.6,91.8L551.9,97.8M516.2,81.2L529.8,86.1M529.8,86.1L545.0,91.4M545.0,91.4L561.8,97.4M533.2,80.6L547.6,85.4M547.6,85.4L563.6,90.7M563.6,90.7L581.3,96.6M541.6,80.3L556.4,85.1M556.4,85.1L572.8,90.3M572.8,90.3L590.9,96.1M565.1,84.7L581.9,89.9M581.9,89.9L600.5,95.7M573.8,84.4L591.0,89.6M591.0,89.6L610.0,95.3M582.4,84.0L600.0,89.2M600.0,89.2L619.4,94.9M591.0,83.7L608.9,88.8M608.9,88.8L628.8,94.5M599.5,83.4L617.8,88.5M617.8,88.5L638.1,94.1M608.0,83.1L626.6,88.1M626.6,88.1L647.3,93.7M647.3,93.7L670.3,99.9M616.4,82.7L635.4,87.8M635.4,87.8L656.4,93.3M656.4,93.3L679.9,99.5M633.0,82.1L652.7,87.0M652.7,87.0L674.6,92.5M674.6,92.5L698.9,98.6M641.2,81.8L661.3,86.7M661.3,86.7L683.5,92.1M683.5,92.1L708.3,98.2M649.4,81.5L669.8,86.3M669.8,86.3L692.4,91.7M692.4,91.7L717.6,97.7M657.5,81.2L678.3,86.0M678.3,86.0L701.2,91.4M701.2,91.4L726.8,97.3M665.6,80.9L686.7,85.7M686.7,85.7L710.0,91.0M710.0,91.0L735.9,96.9M673.6,80.5L695.0,85.3M695.0,85.3L718.7,90.6M718.7,90.6L745.0,96.5M681.6,80.2L703.3,85.0M703.3,85.0L727.4,90.2M727.4,90.2L754.1,96.1M689.5,79.9L711.6,84.6M711.6,84.6L735.9,89.9M735.9,89.9L763.0,95.6M719.7,84.3L744.5,89.5M744.5,89.5L771.9,95.2M735.9,83.7L761.3,88.8M761.3,88.8L789.5,94.4M789.5,94.4L820.9,100.7M744.0,83.3L769.7,88.4M769.7,88.4L798.2,94.0M798.2,94.0L830.0,100.3M751.9,83.0L778.0,88.0M778.0,88.0L806.8,93.6M806.8,93.6L839.0,99.8M759.8,82.7L786.2,87.7M786.2,87.7L815.4,93.2M815.4,93.2L847.9,99.4M767.7,82.4L794.4,87.3M794.4,87.3L823.9,92.8M823.9,92.8L856.8,99.0M775.5,82.0L802.5,87.0M802.5,87.0L832.3,92.4M832.3,92.4L865.6,98.5M783.3,81.7L810.5,86.6M810.5,86.6L840.7,92.0M840.7,92.0L874.3,98.1M791.0,81.4L818.5,86.3M818.5,86.3L849.0,91.7M849.0,91.7L883.0,97.7M798.6,81.1L826.5,85.9M826.5,85.9L857.3,91.3M857.3,91.3L891.6,97.2M891.6,97.2L929.9,103.9M842.2,85.3L873.7,90.5M873.7,90.5L908.6,96.4M908.6,96.4L947.6,102.9M850.0,84.9L881.7,90.2M881.7,90.2L917.0,96.0M917.0,96.0L956.3,102.5M857.8,84.6L889.8,89.8M889.8,89.8L925.3,95.6M925.3,95.6L965.0,102.0M865.5,84.2L897.7,89.4M897.7,89.4L933.6,95.1M933.6,95.1L973.6,101.5M873.1,83.9L905.7,89.0M905.7,89.0L941.8,94.7M941.8,94.7L982.1,101.1M880.7,83.6L913.5,88.7M913.5,88.7L950.0,94.3M950.0,94.3L990.6,100.6M888.2,83.3L921.3,88.3M921.3,88.3L958.1,93.9M958.1,93.9L999.0,100.2M999.0,100.2L1045.0,107.2M895.7,82.9L929.1,88.0M929.1,88.0L966.1,93.5M966.1,93.5L1007.4,99.7M1007.4,99.7L1053.6,106.7M936.8,87.6L974.1,93.1M974.1,93.1L1015.6,99.3M1015.6,99.3L1062.2,106.2M952.0,86.9L989.9,92.4M989.9,92.4L1032.0,98.4M1032.0,98.4L1079.2,105.2M959.6,86.6L997.7,92.0M997.7,92.0L1040.1,98.0M1040.1,98.0L1087.5,104.7M967.1,86.2L1005.4,91.6M1005.4,91.6L1048.1,97.6M1048.1,97.6L1095.9,104.3M1095.9,104.3L1149.6,111.8M974.5,85.9L1013.1,91.2M1013.1,91.2L1056.1,97.1M1056.1,97.1L1104.1,103.8M1104.1,103.8L1158.2,111.3M981.9,85.5L1020.8,90.8M1020.8,90.8L1064.0,96.7M1064.0,96.7L1112.3,103.3M1112.3,103.3L1166.7,110.7M989.2,85.2L1028.4,90.5M1028.4,90.5L1071.8,96.3M1071.8,96.3L1120.4,102.8M1120.4,102.8L1175.0,110.2M1035.9,90.1L1079.6,95.9M1079.6,95.9L1128.5,102.4M1128.5,102.4L1183.4,109.7M1043.4,89.7L1087.4,95.5M1087.4,95.5L1136.5,101.9M1136.5,101.9L1191.6,109.1M1191.6,109.1L1254.1,117.3M1050.8,89.3L1095.0,95.1M1095.0,95.1L1144.4,101.5M1144.4,101.5L1199.8,108.6M1199.8,108.6L1262.5,116.8M1065.5,88.6L1110.2,94.3M1110.2,94.3L1160.0,100.5M1160.0,100.5L1216.0,107.6M1216.0,107.6L1279.2,115.6M1072.8,88.3L1117.7,93.9M1117.7,93.9L1167.8,100.1M1167.8,100.1L1224.0,107.1M1224.0,107.1L1287.4,115.0M1287.4,115.0L1324.0,119.6M1125.2,93.5L1175.5,99.7M1175.5,99.7L1231.9,106.6M1231.9,106.6L1295.6,114.5M1295.6,114.5L1324.0,118.0M1132.6,93.1L1183.1,99.2M1183.1,99.2L1239.7,106.1M1239.7,106.1L1303.7,113.9M1303.7,113.9L1324.0,116.4M1139.9,92.7L1190.7,98.8M1190.7,98.8L1247.5,105.6M1247.5,105.6L1311.7,113.3M1311.7,113.3L1324.0,114.8M1147.2,92.3L1198.2,98.3M1198.2,98.3L1255.3,105.1M1255.3,105.1L1319.6,112.8M1319.6,112.8L1324.0,113.3M1154.4,91.9L1205.6,97.9M1205.6,97.9L1262.9,104.6M1262.9,104.6L1324.0,111.8M1213.0,97.5L1270.5,104.2M1270.5,104.2L1324.0,110.4M1220.4,97.1L1278.1,103.7M1278.1,103.7L1324.0,109.0M1234.9,96.2L1293.0,102.7M1293.0,102.7L1324.0,106.2M1242.0,95.8L1300.3,102.3M1300.3,102.3L1324.0,104.9M1307.6,101.8L1324.0,103.6M1314.9,101.4L1324.0,102.4M1322.1,100.9L1324.0,101.1" stroke="#fff" stroke-opacity="0.018" stroke-width="1.25" fill="none"/>
<path d="M149.1,111.5L224.4,108.3M224.4,108.3L296.1,105.3M296.1,105.3L364.4,102.4M364.4,102.4L429.5,99.7M67.8,116.2L148.1,112.8M148.1,112.8L224.2,109.6M224.2,109.6L296.6,106.5M296.6,106.5L365.6,103.6M365.6,103.6L431.2,100.8M431.2,100.8L493.9,98.1M-2.0,120.6L65.9,117.7M65.9,117.7L147.0,114.2M147.0,114.2L224.0,110.9M224.0,110.9L297.2,107.7M297.2,107.7L366.8,104.8M366.8,104.8L433.0,101.9M433.0,101.9L496.2,99.2M-2.0,122.0L63.9,119.1M63.9,119.1L146.0,115.6M146.0,115.6L223.8,112.2M223.8,112.2L297.7,109.0M297.7,109.0L368.0,105.9M368.0,105.9L434.9,103.0M434.9,103.0L498.6,100.3M498.6,100.3L559.5,97.6M-2.0,123.4L61.9,120.6M61.9,120.6L144.9,117.0M144.9,117.0L223.6,113.5M223.6,113.5L298.2,110.3M298.2,110.3L369.2,107.2M369.2,107.2L436.7,104.2M436.7,104.2L501.1,101.4M501.1,101.4L562.4,98.7M562.4,98.7L621.0,96.1M-2.0,124.9L59.8,122.2M59.8,122.2L143.8,118.4M143.8,118.4L223.3,114.9M223.3,114.9L298.8,111.6M298.8,111.6L370.5,108.4M370.5,108.4L438.6,105.4M438.6,105.4L503.6,102.5M503.6,102.5L565.4,99.8M565.4,99.8L624.5,97.2M-2.0,127.9L55.5,125.3M55.5,125.3L141.5,121.5M141.5,121.5L222.9,117.8M222.9,117.8L299.9,114.3M299.9,114.3L373.1,111.0M373.1,111.0L442.6,107.8M442.6,107.8L508.7,104.8M508.7,104.8L571.6,102.0M571.6,102.0L631.7,99.3M631.7,99.3L689.0,96.7M-2.0,129.5L53.3,127.0M53.3,127.0L140.3,123.0M140.3,123.0L222.6,119.2M222.6,119.2L300.5,115.7M300.5,115.7L374.4,112.3M374.4,112.3L444.6,109.1M444.6,109.1L511.3,106.0M511.3,106.0L574.8,103.1M574.8,103.1L635.3,100.4M635.3,100.4L693.1,97.7M-2.0,131.1L51.0,128.7M51.0,128.7L139.1,124.6M139.1,124.6L222.4,120.7M222.4,120.7L301.1,117.1M301.1,117.1L375.8,113.7M375.8,113.7L446.7,110.4M446.7,110.4L514.0,107.3M514.0,107.3L578.1,104.3M578.1,104.3L639.1,101.5M639.1,101.5L697.3,98.8M697.3,98.8L752.9,96.2M-2.0,132.8L48.7,130.4M48.7,130.4L137.9,126.2M137.9,126.2L222.1,122.3M222.1,122.3L301.8,118.6M301.8,118.6L377.2,115.0M377.2,115.0L448.8,111.7M448.8,111.7L516.7,108.5M516.7,108.5L581.4,105.5M581.4,105.5L642.9,102.6M642.9,102.6L701.6,99.9M701.6,99.9L757.6,97.2M-2.0,134.4L46.3,132.2M46.3,132.2L136.6,127.9M136.6,127.9L221.9,123.9M221.9,123.9L302.4,120.0M302.4,120.0L378.6,116.4M378.6,116.4L450.9,113.0M450.9,113.0L519.5,109.8M519.5,109.8L584.7,106.7M584.7,106.7L646.8,103.8M646.8,103.8L706.0,101.0M706.0,101.0L762.4,98.3M-2.0,136.2L43.9,134.0M43.9,134.0L135.3,129.6M135.3,129.6L221.6,125.5M221.6,125.5L303.0,121.6M303.0,121.6L380.1,117.9M380.1,117.9L453.1,114.4M453.1,114.4L522.4,111.1M522.4,111.1L588.2,107.9M588.2,107.9L650.8,104.9M650.8,104.9L710.4,102.1M710.4,102.1L767.3,99.4M-2.0,137.9L41.4,135.8M41.4,135.8L134.0,131.3M134.0,131.3L221.3,127.1M221.3,127.1L303.7,123.1M303.7,123.1L381.6,119.4M381.6,119.4L455.4,115.8M455.4,115.8L525.3,112.4M525.3,112.4L591.7,109.2M591.7,109.2L654.8,106.1M654.8,106.1L714.9,103.2M714.9,103.2L772.2,100.4M772.2,100.4L826.9,97.8M-2.0,139.7L38.8,137.7M38.8,137.7L132.7,133.1M132.7,133.1L221.0,128.8M221.0,128.8L304.4,124.7M304.4,124.7L383.1,120.9M383.1,120.9L457.7,117.2M457.7,117.2L528.3,113.8M528.3,113.8L595.3,110.5M595.3,110.5L659.0,107.4M659.0,107.4L719.6,104.4M719.6,104.4L777.3,101.6M777.3,101.6L832.4,98.9M-2.0,141.6L36.2,139.7M36.2,139.7L131.3,135.0M131.3,135.0L220.7,130.5M220.7,130.5L305.1,126.3M305.1,126.3L384.7,122.4M384.7,122.4L460.0,118.7M460.0,118.7L531.3,115.1M531.3,115.1L599.0,111.8M599.0,111.8L663.2,108.6M663.2,108.6L724.3,105.6M724.3,105.6L782.5,102.7M782.5,102.7L837.9,99.9M-2.0,145.4L30.7,143.7M30.7,143.7L128.4,138.8M128.4,138.8L220.1,134.1M220.1,134.1L306.5,129.7M306.5,129.7L387.9,125.6M387.9,125.6L464.8,121.7M464.8,121.7L537.6,118.0M537.6,118.0L606.5,114.5M606.5,114.5L671.9,111.2M671.9,111.2L734.0,108.0M734.0,108.0L793.1,105.0M793.1,105.0L849.4,102.2M849.4,102.2L903.1,99.4M-2.0,147.4L27.9,145.8M27.9,145.8L126.9,140.7M126.9,140.7L219.8,136.0M219.8,136.0L307.3,131.5M307.3,131.5L389.6,127.2M389.6,127.2L467.4,123.2M467.4,123.2L540.8,119.5M540.8,119.5L610.4,115.9M610.4,115.9L676.4,112.5M676.4,112.5L739.0,109.3M739.0,109.3L798.6,106.2M798.6,106.2L855.3,103.3M855.3,103.3L909.3,100.5M-2.0,149.4L24.9,148.0M24.9,148.0L125.4,142.8M125.4,142.8L219.5,137.9M219.5,137.9L308.0,133.3M308.0,133.3L391.3,128.9M391.3,128.9L469.9,124.8M469.9,124.8L544.2,121.0M544.2,121.0L614.4,117.3M614.4,117.3L681.0,113.9M681.0,113.9L744.2,110.6M744.2,110.6L804.2,107.4M804.2,107.4L861.3,104.5M861.3,104.5L915.7,101.6M-2.0,151.5L21.9,150.2M21.9,150.2L123.8,144.9M123.8,144.9L219.2,139.8M219.2,139.8L308.8,135.1M308.8,135.1L393.1,130.7M393.1,130.7L472.5,126.5M472.5,126.5L547.6,122.5M547.6,122.5L618.5,118.8M618.5,118.8L685.7,115.2M685.7,115.2L749.4,111.9M749.4,111.9L809.9,108.7M809.9,108.7L867.4,105.7M867.4,105.7L922.2,102.8M-2.0,153.6L18.9,152.5M18.9,152.5L122.2,147.0M122.2,147.0L218.9,141.8M218.9,141.8L309.6,137.0M309.6,137.0L394.9,132.4M394.9,132.4L475.2,128.1M475.2,128.1L551.0,124.1M551.0,124.1L622.7,120.3M622.7,120.3L690.5,116.7M690.5,116.7L754.7,113.2M754.7,113.2L815.7,110.0M815.7,110.0L873.7,106.9M873.7,106.9L928.9,103.9M928.9,103.9L981.5,101.1M-2.0,155.8L15.7,154.8M15.7,154.8L120.5,149.2M120.5,149.2L218.5,143.9M218.5,143.9L310.4,138.9M310.4,138.9L396.7,134.2M396.7,134.2L478.0,129.9M478.0,129.9L554.6,125.7M554.6,125.7L626.9,121.8M626.9,121.8L695.4,118.1M695.4,118.1L760.2,114.6M760.2,114.6L821.7,111.3M821.7,111.3L880.1,108.1M880.1,108.1L935.7,105.1M935.7,105.1L988.6,102.2M-2.0,158.1L12.4,157.3M12.4,157.3L118.8,151.4M118.8,151.4L218.2,146.0M218.2,146.0L311.3,140.9M311.3,140.9L398.6,136.1M398.6,136.1L480.8,131.6M480.8,131.6L558.2,127.4M558.2,127.4L631.3,123.4M631.3,123.4L700.4,119.6M700.4,119.6L765.7,116.0M765.7,116.0L827.7,112.6M827.7,112.6L886.6,109.4M886.6,109.4L942.6,106.3M942.6,106.3L995.8,103.4M-2.0,160.4L9.1,159.7M9.1,159.7L117.0,153.8M117.0,153.8L217.8,148.2M217.8,148.2L312.1,142.9M312.1,142.9L400.6,138.0M400.6,138.0L483.7,133.4M483.7,133.4L561.9,129.1M561.9,129.1L635.7,125.0M635.7,125.0L705.5,121.1M705.5,121.1L771.4,117.4M771.4,117.4L833.9,114.0M833.9,114.0L893.3,110.7M893.3,110.7L949.6,107.5M949.6,107.5L1003.3,104.6M-2.0,162.7L5.6,162.3M5.6,162.3L115.2,156.1M115.2,156.1L217.4,150.4M217.4,150.4L313.0,145.0M313.0,145.0L402.6,140.0M402.6,140.0L486.6,135.2M486.6,135.2L565.8,130.8M565.8,130.8L640.3,126.6M640.3,126.6L710.7,122.6M710.7,122.6L777.2,118.9M777.2,118.9L840.3,115.3M840.3,115.3L900.1,112.0M900.1,112.0L956.8,108.8M956.8,108.8L1010.8,105.8M-2.0,167.7L-1.6,167.6M-1.6,167.6L111.4,161.1M111.4,161.1L216.7,155.0M216.7,155.0L314.9,149.4M314.9,149.4L406.7,144.0M406.7,144.0L492.8,139.1M492.8,139.1L573.7,134.4M573.7,134.4L649.8,130.0M649.8,130.0L721.5,125.8M721.5,125.8L789.3,121.9M789.3,121.9L853.4,118.2M853.4,118.2L914.1,114.7M914.1,114.7L971.7,111.4M971.7,111.4L1026.4,108.2M1026.4,108.2L1078.4,105.2M-2.0,170.2L109.5,163.7M109.5,163.7L216.3,157.4M216.3,157.4L315.8,151.6M315.8,151.6L408.8,146.2M408.8,146.2L496.0,141.0M496.0,141.0L577.8,136.3M577.8,136.3L654.7,131.7M654.7,131.7L727.1,127.5M727.1,127.5L795.5,123.5M795.5,123.5L860.1,119.7M860.1,119.7L921.3,116.1M921.3,116.1L979.3,112.7M979.3,112.7L1034.4,109.5M1034.4,109.5L1086.8,106.4M-2.0,172.9L107.4,166.4M107.4,166.4L215.8,159.9M215.8,159.9L316.8,153.9M316.8,153.9L411.1,148.3M411.1,148.3L499.3,143.1M499.3,143.1L582.0,138.2M582.0,138.2L659.7,133.5M659.7,133.5L732.9,129.2M732.9,129.2L801.9,125.1M801.9,125.1L867.0,121.2M867.0,121.2L928.7,117.5M928.7,117.5L987.1,114.1M987.1,114.1L1042.6,110.8M1042.6,110.8L1095.3,107.6M-2.0,175.6L105.4,169.1M105.4,169.1L215.4,162.5M215.4,162.5L317.8,156.3M317.8,156.3L413.3,150.6M413.3,150.6L502.6,145.2M502.6,145.2L586.3,140.1M586.3,140.1L664.8,135.4M664.8,135.4L738.7,130.9M738.7,130.9L808.4,126.7M808.4,126.7L874.1,122.8M874.1,122.8L936.3,119.0M936.3,119.0L995.1,115.5M995.1,115.5L1051.0,112.1M1051.0,112.1L1104.0,108.9M-2.0,178.4L103.2,172.0M103.2,172.0L215.0,165.1M215.0,165.1L318.9,158.8M318.9,158.8L415.7,152.9M415.7,152.9L506.1,147.3M506.1,147.3L590.7,142.1M590.7,142.1L670.1,137.3M670.1,137.3L744.7,132.7M744.7,132.7L815.0,128.4M815.0,128.4L881.3,124.3M881.3,124.3L944.0,120.5M944.0,120.5L1003.3,116.9M1003.3,116.9L1059.5,113.4M1059.5,113.4L1112.9,110.2M-2.0,181.3L101.0,174.9M101.0,174.9L214.5,167.9M214.5,167.9L319.9,161.3M319.9,161.3L418.1,155.2M418.1,155.2L509.6,149.5M509.6,149.5L595.2,144.2M595.2,144.2L675.5,139.2M675.5,139.2L750.9,134.5M750.9,134.5L821.9,130.1M821.9,130.1L888.7,126.0M888.7,126.0L951.9,122.0M951.9,122.0L1011.6,118.3M1011.6,118.3L1068.2,114.8M1068.2,114.8L1121.9,111.5M1121.9,111.5L1172.9,108.3M-2.0,184.3L98.7,177.9M98.7,177.9L214.1,170.7M214.1,170.7L321.0,163.9M321.0,163.9L420.5,157.6M420.5,157.6L513.3,151.8M513.3,151.8L599.9,146.3M599.9,146.3L681.1,141.2M681.1,141.2L757.2,136.4M757.2,136.4L828.9,131.9M828.9,131.9L896.3,127.6M896.3,127.6L960.0,123.6M960.0,123.6L1020.2,119.8M1020.2,119.8L1077.1,116.2M1077.1,116.2L1131.2,112.8M1131.2,112.8L1182.4,109.6M-2.0,187.4L96.3,181.1M96.3,181.1L213.6,173.5M213.6,173.5L322.2,166.6M322.2,166.6L423.1,160.1M423.1,160.1L517.0,154.1M517.0,154.1L604.7,148.5M604.7,148.5L686.8,143.2M686.8,143.2L763.7,138.3M763.7,138.3L836.0,133.7M836.0,133.7L904.1,129.3M904.1,129.3L968.3,125.2M968.3,125.2L1028.9,121.3M1028.9,121.3L1086.3,117.6M1086.3,117.6L1140.6,114.2M1140.6,114.2L1192.2,110.9M-2.0,190.5L93.9,184.3M93.9,184.3L213.1,176.5M213.1,176.5L323.4,169.4M323.4,169.4L425.7,162.7M425.7,162.7L520.8,156.5M520.8,156.5L609.6,150.7M609.6,150.7L692.6,145.3M692.6,145.3L770.4,140.3M770.4,140.3L843.4,135.5M843.4,135.5L912.0,131.1M912.0,131.1L976.7,126.8M976.7,126.8L1037.8,122.9M1037.8,122.9L1095.6,119.1M1095.6,119.1L1150.2,115.6M1150.2,115.6L1202.1,112.2M-2.0,197.1L88.7,191.1M88.7,191.1L212.0,182.8M212.0,182.8L325.8,175.1M325.8,175.1L431.1,168.1M431.1,168.1L528.9,161.5M528.9,161.5L619.9,155.4M619.9,155.4L704.8,149.7M704.8,149.7L784.2,144.4M784.2,144.4L858.6,139.4M858.6,139.4L928.5,134.7M928.5,134.7L994.3,130.2M994.3,130.2L1056.3,126.1M1056.3,126.1L1114.8,122.2M1114.8,122.2L1170.2,118.4M1170.2,118.4L1222.6,114.9M-2.0,200.6L86.0,194.6M86.0,194.6L211.5,186.1M327.1,178.2L434.0,170.9M434.0,170.9L533.1,164.1M533.1,164.1L625.2,157.8M625.2,157.8L711.1,152.0M711.1,152.0L791.4,146.5M791.4,146.5L866.5,141.3M866.5,141.3L937.0,136.5M937.0,136.5L1003.4,132.0M1003.4,132.0L1065.8,127.7M1065.8,127.7L1124.8,123.7M1124.8,123.7L1180.5,119.9M1180.5,119.9L1233.2,116.3M-2.0,204.2L83.2,198.3M436.9,173.8L537.4,166.8M537.4,166.8L630.7,160.3M630.7,160.3L717.6,154.3M717.6,154.3L798.7,148.7M798.7,148.7L874.6,143.4M874.6,143.4L945.8,138.5M945.8,138.5L1012.7,133.8M1012.7,133.8L1075.6,129.4M1075.6,129.4L1135.0,125.3M1135.0,125.3L1191.0,121.4M1191.0,121.4L1244.0,117.8M541.8,169.6L636.4,162.9M636.4,162.9L724.3,156.7M724.3,156.7L806.3,150.9M806.3,150.9L883.0,145.5M883.0,145.5L954.8,140.4M954.8,140.4L1022.2,135.7M1022.2,135.7L1085.6,131.2M1085.6,131.2L1145.4,127.0M1145.4,127.0L1201.8,123.0M1201.8,123.0L1255.1,119.2M1255.1,119.2L1305.6,115.7M642.2,165.5L731.2,159.2M731.2,159.2L814.1,153.2M814.1,153.2L891.5,147.6M891.5,147.6L964.0,142.4M964.0,142.4L1032.0,137.6M1032.0,137.6L1095.9,133.0M1095.9,133.0L1156.1,128.7M1156.1,128.7L1212.8,124.6M1212.8,124.6L1266.4,120.7M1266.4,120.7L1317.2,117.1M648.2,168.3L738.3,161.7M738.3,161.7L822.1,155.6M822.1,155.6L900.3,149.9M900.3,149.9L973.5,144.5M973.5,144.5L1042.0,139.5M1042.0,139.5L1106.4,134.8M1106.4,134.8L1167.0,130.4M1167.0,130.4L1224.1,126.2M1224.1,126.2L1278.0,122.3M1278.0,122.3L1324.0,118.9M745.6,164.3L830.4,158.0M830.4,158.0L909.4,152.1M909.4,152.1L983.2,146.6M983.2,146.6L1052.3,141.5M1052.3,141.5L1117.2,136.7M1117.2,136.7L1178.2,132.1M1178.2,132.1L1235.6,127.9M1235.6,127.9L1289.8,123.8M1289.8,123.8L1324.0,121.3M753.1,167.0L838.8,160.5M838.8,160.5L918.7,154.5M918.7,154.5L993.2,148.8M993.2,148.8L1062.9,143.5M1062.9,143.5L1128.2,138.6M1128.2,138.6L1189.6,134.0M1189.6,134.0L1247.4,129.6M1247.4,129.6L1301.9,125.5M1301.9,125.5L1324.0,123.8M760.8,169.8L847.6,163.1M847.6,163.1L928.2,156.9M928.2,156.9L1003.4,151.1M1003.4,151.1L1073.7,145.7M1073.7,145.7L1139.6,140.6M1139.6,140.6L1201.4,135.8M1201.4,135.8L1259.5,131.3M1259.5,131.3L1314.3,127.1M1314.3,127.1L1324.0,126.4M865.8,168.5L948.2,161.9M948.2,161.9L1024.8,155.8M1024.8,155.8L1096.3,150.0M1096.3,150.0L1163.1,144.7M1163.1,144.7L1225.8,139.7M1225.8,139.7L1284.6,134.9M1284.6,134.9L1324.0,131.8M875.3,171.3L958.6,164.5M958.6,164.5L1035.9,158.2M1035.9,158.2L1108.0,152.3M1108.0,152.3L1175.4,146.8M1175.4,146.8L1238.5,141.7M1238.5,141.7L1297.7,136.8M1297.7,136.8L1324.0,134.7M885.2,174.2L969.3,167.2M969.3,167.2L1047.4,160.7M1047.4,160.7L1120.1,154.6M1120.1,154.6L1188.0,149.0M1188.0,149.0L1251.5,143.7M1251.5,143.7L1311.0,138.7M1311.0,138.7L1324.0,137.7M895.3,177.2L980.4,170.0M980.4,170.0L1059.2,163.3M1059.2,163.3L1132.5,157.1M1132.5,157.1L1200.9,151.2M1200.9,151.2L1264.8,145.8M1264.8,145.8L1324.0,140.8M991.8,172.9L1071.4,165.9M1071.4,165.9L1145.3,159.5M1145.3,159.5L1214.2,153.6M1214.2,153.6L1278.6,148.0M1278.6,148.0L1324.0,144.0M1003.5,175.8L1083.9,168.7M1083.9,168.7L1158.5,162.1M1158.5,162.1L1227.9,155.9M1227.9,155.9L1292.7,150.2M1292.7,150.2L1324.0,147.4M1020.5,178.4L1101.2,171.1M1101.2,171.1L1176.0,164.3M1176.0,164.3L1245.6,158.1M1245.6,158.1L1310.4,152.2M1310.4,152.2L1324.0,151.0M1001.9,184.5L1086.4,176.6M1086.4,176.6L1164.6,169.4M1164.6,169.4L1237.2,162.7M1237.2,162.7L1304.6,156.4M1304.6,156.4L1324.0,154.6M1036.3,185.7L1119.5,177.9M1119.5,177.9L1196.4,170.6M1196.4,170.6L1267.8,163.8M1267.8,163.8L1324.0,158.5M1138.9,185.1L1218.1,177.3M1218.1,177.3L1291.3,170.0M1291.3,170.0L1324.0,166.8M1174.1,186.4L1251.9,178.5M1251.9,178.5L1323.8,171.2M1323.8,171.2L1324.0,171.2M1159.4,193.0L1241.0,184.5M1241.0,184.5L1316.2,176.7M1316.2,176.7L1324.0,175.9M1196.5,194.4L1276.6,185.8M1276.6,185.8L1324.0,180.8M1265.5,192.3L1324.0,185.9M1220.5,203.0L1302.9,193.7M1302.9,193.7L1324.0,191.3M1260.1,204.5L1324.0,197.1M11.6,115.3L-2.0,122.8M24.7,115.0L9.2,124.2M9.2,124.2L-2.0,130.8M37.9,114.8L23.3,123.9M23.3,123.9L6.5,134.4M6.5,134.4L-2.0,139.8M51.0,114.5L37.3,123.6M37.3,123.6L21.6,134.2M21.6,134.2L3.2,146.4M3.2,146.4L-2.0,149.9M64.0,114.3L51.3,123.4M51.3,123.4L36.6,133.9M36.6,133.9L19.5,146.1M19.5,146.1L-0.6,160.5M-0.6,160.5L-2.0,161.4M72.3,117.7L60.1,127.0M60.1,127.0L46.1,137.8M46.1,137.8L29.8,150.3M29.8,150.3L10.6,165.1M10.6,165.1L-2.0,174.7M85.6,117.4L74.4,126.8M74.4,126.8L61.4,137.5M61.4,137.5L46.4,150.0M46.4,150.0L28.7,164.7M28.7,164.7L7.4,182.4M7.4,182.4L-2.0,190.2M98.9,117.2L88.6,126.5M88.6,126.5L76.7,137.2M76.7,137.2L62.9,149.7M62.9,149.7L46.7,164.4M46.7,164.4L27.2,182.0M27.2,182.0L3.5,203.4M132.9,108.2L125.6,116.3M125.6,116.3L117.2,125.5M117.2,125.5L107.6,136.1M107.6,136.1L96.4,148.4M96.4,148.4L83.3,162.8M83.3,162.8L67.5,180.1M67.5,180.1L48.4,201.2M145.4,107.7L139.0,115.7M139.0,115.7L131.6,124.8M131.6,124.8L123.1,135.3M123.1,135.3L113.2,147.5M113.2,147.5L101.6,161.8M101.6,161.8L87.7,178.9M87.7,178.9L70.9,199.6M157.8,107.2L152.2,115.1M152.2,115.1L145.7,124.2M145.7,124.2L138.3,134.5M138.3,134.5L129.8,146.6M129.8,146.6L119.7,160.7M119.7,160.7L107.6,177.6M107.6,177.6L93.0,198.1M170.1,106.7L165.3,114.6M165.3,114.6L159.8,123.5M159.8,123.5L153.5,133.8M153.5,133.8L146.1,145.7M146.1,145.7L137.5,159.7M137.5,159.7L127.3,176.4M127.3,176.4L114.9,196.6M182.3,106.2L178.3,114.0M178.3,114.0L173.7,122.9M173.7,122.9L168.5,133.0M168.5,133.0L162.4,144.8M162.4,144.8L155.2,158.7M155.2,158.7L146.7,175.1M146.7,175.1L136.4,195.1M194.4,105.7L191.2,113.4M191.2,113.4L187.5,122.2M187.5,122.2L183.3,132.3M183.3,132.3L178.4,144.0M178.4,144.0L172.7,157.7M172.7,157.7L165.9,173.9M165.9,173.9L157.6,193.6M206.4,105.2L204.0,112.9M204.0,112.9L201.2,121.6M201.2,121.6L198.0,131.6M198.0,131.6L194.3,143.1M194.3,143.1L189.9,156.7M189.9,156.7L184.8,172.7M184.8,172.7L178.5,192.1M218.3,104.7L216.6,112.3M216.6,112.3L214.7,121.0M214.7,121.0L212.5,130.9M212.5,130.9L210.0,142.3M210.0,142.3L207.0,155.7M207.0,155.7L203.4,171.6M203.4,171.6L199.2,190.7M230.1,104.3L229.2,111.8M229.2,111.8L228.1,120.4M228.1,120.4L226.9,130.2M226.9,130.2L225.5,141.5M225.5,141.5L223.8,154.7M223.8,154.7L221.9,170.4M221.9,170.4L219.5,189.3M253.5,103.3L254.0,110.7M254.0,110.7L254.6,119.1M254.6,119.1L255.3,128.7M255.3,128.7L256.1,139.8M256.1,139.8L257.0,152.8M257.0,152.8L258.1,168.1M258.1,168.1L259.4,186.5M265.0,102.8L266.2,110.2M266.2,110.2L267.7,118.5M267.7,118.5L269.3,128.1M269.3,128.1L271.1,139.0M271.1,139.0L273.3,151.9M273.3,151.9L275.9,167.0M275.9,167.0L279.0,185.1M276.4,102.4L278.4,109.7M278.4,109.7L280.6,117.9M280.6,117.9L283.1,127.4M283.1,127.4L286.0,138.2M286.0,138.2L289.4,150.9M289.4,150.9L293.4,165.9M293.4,165.9L298.2,183.8M287.8,101.9L290.4,109.1M290.4,109.1L293.4,117.3M293.4,117.3L296.8,126.7M296.8,126.7L300.8,137.5M300.8,137.5L305.4,150.0M305.4,150.0L310.8,164.8M310.8,164.8L317.2,182.5M299.0,101.5L302.4,108.6M302.4,108.6L306.1,116.8M306.1,116.8L310.4,126.0M310.4,126.0L315.4,136.7M315.4,136.7L321.1,149.1M321.1,149.1L327.9,163.7M327.9,163.7L336.0,181.2M310.2,101.0L314.2,108.1M314.2,108.1L318.7,116.2M318.7,116.2L323.9,125.3M323.9,125.3L329.8,135.9M329.8,135.9L336.7,148.2M336.7,148.2L344.8,162.6M344.8,162.6L354.5,179.9M321.3,100.5L325.9,107.6M325.9,107.6L331.2,115.6M331.2,115.6L337.2,124.7M337.2,124.7L344.1,135.1M344.1,135.1L352.1,147.3M352.1,147.3L361.6,161.6M361.6,161.6L372.8,178.6M332.3,100.1L337.6,107.1M337.6,107.1L343.6,115.0M343.6,115.0L350.4,124.0M350.4,124.0L358.3,134.4M358.3,134.4L367.4,146.4M367.4,146.4L378.1,160.5M378.1,160.5L390.9,177.4M343.2,99.7L349.1,106.6M349.1,106.6L355.9,114.5M355.9,114.5L363.5,123.4M363.5,123.4L372.3,133.6M372.3,133.6L382.5,145.5M382.5,145.5L394.4,159.5M394.4,159.5L408.7,176.1M364.8,98.8L372.0,105.6M372.0,105.6L380.1,113.3M380.1,113.3L389.3,122.1M389.3,122.1L399.9,132.2M399.9,132.2L412.2,143.8M412.2,143.8L426.5,157.5M426.5,157.5L443.6,173.7M375.4,98.3L383.2,105.1M383.2,105.1L392.0,112.8M392.0,112.8L402.0,121.5M402.0,121.5L413.5,131.4M413.5,131.4L426.8,143.0M426.8,143.0L442.3,156.5M442.3,156.5L460.7,172.5M386.0,97.9L394.4,104.6M394.4,104.6L403.9,112.2M403.9,112.2L414.6,120.9M414.6,120.9L427.0,130.7M427.0,130.7L441.2,142.1M441.2,142.1L457.9,155.5M457.9,155.5L477.7,171.3M405.5,104.2L415.6,111.7M415.6,111.7L427.1,120.2M427.1,120.2L440.3,130.0M440.3,130.0L455.5,141.3M455.5,141.3L473.3,154.5M473.3,154.5L494.4,170.2M416.5,103.7L427.3,111.2M427.3,111.2L439.5,119.6M439.5,119.6L453.5,129.3M453.5,129.3L469.7,140.5M469.7,140.5L488.5,153.6M488.5,153.6L510.9,169.0M427.4,103.2L438.8,110.6M438.8,110.6L451.8,119.0M451.8,119.0L466.6,128.6M466.6,128.6L483.7,139.7M483.7,139.7L503.6,152.6M503.6,152.6L527.2,167.9M438.2,102.7L450.3,110.1M450.3,110.1L463.9,118.4M463.9,118.4L479.5,127.9M479.5,127.9L497.5,138.9M497.5,138.9L518.5,151.7M518.5,151.7L543.3,166.8M449.0,102.3L461.6,109.6M461.6,109.6L476.0,117.8M476.0,117.8L492.4,127.2M492.4,127.2L511.2,138.1M511.2,138.1L533.2,150.7M533.2,150.7L559.2,165.7M459.6,101.8L472.9,109.0M472.9,109.0L487.9,117.2M487.9,117.2L505.1,126.6M505.1,126.6L524.8,137.3M524.8,137.3L547.8,149.8M547.8,149.8L574.9,164.6M480.7,100.9L495.2,108.0M495.2,108.0L511.5,116.1M511.5,116.1L530.1,125.2M530.1,125.2L551.6,135.8M551.6,135.8L576.5,148.0M576.5,148.0L605.8,162.4M491.1,100.5L506.1,107.5M506.1,107.5L523.1,115.5M523.1,115.5L542.5,124.6M542.5,124.6L564.7,135.0M564.7,135.0L590.6,147.1M590.6,147.1L620.9,161.4M501.4,100.0L517.0,107.0M517.0,107.0L534.7,114.9M534.7,114.9L554.7,123.9M554.7,123.9L577.7,134.2M577.7,134.2L604.5,146.2M604.5,146.2L635.9,160.3M511.7,99.6L527.8,106.5M527.8,106.5L546.1,114.3M546.1,114.3L566.8,123.3M566.8,123.3L590.7,133.5M590.7,133.5L618.3,145.4M618.3,145.4L650.7,159.3M650.7,159.3L689.3,175.9M521.9,99.1L538.6,106.0M538.6,106.0L557.4,113.8M557.4,113.8L578.8,122.6M578.8,122.6L603.4,132.8M603.4,132.8L631.9,144.5M631.9,144.5L665.3,158.3M665.3,158.3L705.1,174.7M531.9,98.7L549.2,105.5M549.2,105.5L568.6,113.2M568.6,113.2L590.7,122.0M590.7,122.0L616.1,132.0M616.1,132.0L645.4,143.6M645.4,143.6L679.8,157.3M679.8,157.3L720.7,173.5M542.0,98.3L559.7,105.0M559.7,105.0L579.8,112.7M579.8,112.7L602.5,121.4M602.5,121.4L628.6,131.3M628.6,131.3L658.8,142.8M658.8,142.8L694.1,156.3M694.1,156.3L736.0,172.3M551.9,97.8L570.2,104.5M570.2,104.5L590.8,112.1M590.8,112.1L614.2,120.7M614.2,120.7L641.0,130.6M641.0,130.6L672.0,142.0M672.0,142.0L708.2,155.3M708.2,155.3L751.2,171.1M561.8,97.4L580.6,104.1M580.6,104.1L601.7,111.6M601.7,111.6L625.8,120.1M625.8,120.1L653.3,129.9M653.3,129.9L685.1,141.1M685.1,141.1L722.2,154.3M722.2,154.3L766.2,169.9M581.3,96.6L601.1,103.1M601.1,103.1L623.4,110.5M623.4,110.5L648.6,118.9M648.6,118.9L677.5,128.5M677.5,128.5L710.8,139.5M710.8,139.5L749.7,152.4M749.7,152.4L795.6,167.7M590.9,96.1L611.2,102.7M611.2,102.7L634.0,110.0M634.0,110.0L659.9,118.3M659.9,118.3L689.4,127.8M689.4,127.8L723.5,138.7M723.5,138.7L763.2,151.5M763.2,151.5L810.1,166.5M600.5,95.7L621.3,102.2M621.3,102.2L644.6,109.5M644.6,109.5L671.0,117.7M671.0,117.7L701.2,127.1M701.2,127.1L736.0,137.9M736.0,137.9L776.5,150.5M776.5,150.5L824.3,165.4M610.0,95.3L631.2,101.7M631.2,101.7L655.1,108.9M655.1,108.9L682.1,117.1M682.1,117.1L712.9,126.4M712.9,126.4L748.4,137.1M748.4,137.1L789.7,149.6M789.7,149.6L838.4,164.3M619.4,94.9L641.1,101.3M641.1,101.3L665.5,108.4M665.5,108.4L693.1,116.5M693.1,116.5L724.5,125.7M724.5,125.7L760.7,136.4M760.7,136.4L802.8,148.7M802.8,148.7L852.3,163.3M852.3,163.3L911.6,180.7M628.8,94.5L650.9,100.8M650.9,100.8L675.8,107.9M675.8,107.9L703.9,115.9M703.9,115.9L736.0,125.1M736.0,125.1L772.8,135.6M772.8,135.6L815.7,147.8M815.7,147.8L866.1,162.2M866.1,162.2L926.3,179.4M638.1,94.1L660.7,100.4M660.7,100.4L686.0,107.4M686.0,107.4L714.7,115.4M714.7,115.4L747.3,124.4M747.3,124.4L784.9,134.8M784.9,134.8L828.5,146.9M828.5,146.9L879.7,161.2M879.7,161.2L940.8,178.1M670.3,99.9L696.2,106.9M696.2,106.9L725.4,114.8M725.4,114.8L758.6,123.8M758.6,123.8L796.8,134.1M796.8,134.1L841.1,146.1M841.1,146.1L893.1,160.1M893.1,160.1L955.1,176.9M679.9,99.5L706.3,106.4M706.3,106.4L736.0,114.2M736.0,114.2L769.8,123.1M769.8,123.1L808.6,133.3M808.6,133.3L853.6,145.2M853.6,145.2L906.4,159.1M906.4,159.1L969.3,175.6M698.9,98.6L726.1,105.4M726.1,105.4L756.9,113.1M756.9,113.1L791.8,121.9M791.8,121.9L831.8,131.9M831.8,131.9L878.2,143.5M878.2,143.5L932.5,157.1M932.5,157.1L997.0,173.2M708.3,98.2L736.0,104.9M736.0,104.9L767.2,112.6M767.2,112.6L802.6,121.2M802.6,121.2L843.3,131.2M843.3,131.2L890.3,142.6M890.3,142.6L945.3,156.1M945.3,156.1L1010.6,172.0M1010.6,172.0L1089.3,191.3M717.6,97.7L745.7,104.5M745.7,104.5L777.4,112.0M777.4,112.0L813.4,120.6M813.4,120.6L854.6,130.4M854.6,130.4L902.3,141.8M902.3,141.8L958.0,155.1M958.0,155.1L1024.0,170.9M1024.0,170.9L1103.6,189.8M726.8,97.3L755.4,104.0M755.4,104.0L787.5,111.5M787.5,111.5L824.1,120.0M824.1,120.0L865.8,129.7M865.8,129.7L914.1,141.0M914.1,141.0L970.5,154.1M970.5,154.1L1037.3,169.7M1037.3,169.7L1117.7,188.4M735.9,96.9L765.0,103.5M765.0,103.5L797.6,110.9M797.6,110.9L834.6,119.4M834.6,119.4L876.9,129.0M876.9,129.0L925.8,140.2M925.8,140.2L982.9,153.2M982.9,153.2L1050.4,168.6M1050.4,168.6L1131.6,187.1M745.0,96.5L774.5,103.0M774.5,103.0L807.6,110.4M807.6,110.4L845.1,118.8M845.1,118.8L888.0,128.3M888.0,128.3L937.4,139.4M937.4,139.4L995.2,152.2M995.2,152.2L1063.4,167.4M1063.4,167.4L1145.2,185.7M754.1,96.1L783.9,102.6M783.9,102.6L817.4,109.9M817.4,109.9L855.4,118.2M855.4,118.2L898.9,127.6M898.9,127.6L948.9,138.6M948.9,138.6L1007.3,151.3M1007.3,151.3L1076.2,166.3M1076.2,166.3L1158.8,184.3M763.0,95.6L793.3,102.1M793.3,102.1L827.2,109.4M827.2,109.4L865.7,117.6M865.7,117.6L909.7,127.0M909.7,127.0L960.3,137.8M960.3,137.8L1019.2,150.4M1019.2,150.4L1088.8,165.2M1088.8,165.2L1172.1,183.0M1172.1,183.0L1273.6,204.7M771.9,95.2L802.5,101.6M802.5,101.6L837.0,108.8M837.0,108.8L875.9,117.0M875.9,117.0L920.4,126.3M920.4,126.3L971.5,137.0M971.5,137.0L1031.1,149.4M1031.1,149.4L1101.3,164.1M1101.3,164.1L1185.2,181.7M1185.2,181.7L1287.5,203.1M820.9,100.7L856.2,107.8M856.2,107.8L896.0,115.8M896.0,115.8L941.4,125.0M941.4,125.0L993.7,135.4M993.7,135.4L1054.4,147.6M1054.4,147.6L1125.8,162.0M1125.8,162.0L1211.0,179.1M1211.0,179.1L1314.5,199.9M830.0,100.3L865.6,107.3M865.6,107.3L905.9,115.2M905.9,115.2L951.8,124.3M951.8,124.3L1004.6,134.7M1004.6,134.7L1065.8,146.8M1065.8,146.8L1137.8,160.9M1137.8,160.9L1223.7,177.9M1223.7,177.9L1324.0,197.6M839.0,99.8L875.0,106.8M875.0,106.8L915.8,114.7M915.8,114.7L962.1,123.6M962.1,123.6L1015.4,133.9M1015.4,133.9L1077.2,145.9M1077.2,145.9L1149.7,159.9M1149.7,159.9L1236.2,176.6M1236.2,176.6L1324.0,193.6M847.9,99.4L884.4,106.3M884.4,106.3L925.5,114.1M925.5,114.1L972.3,123.0M972.3,123.0L1026.1,133.2M1026.1,133.2L1088.4,145.0M1088.4,145.0L1161.5,158.9M1161.5,158.9L1248.5,175.4M1248.5,175.4L1324.0,189.7M856.8,99.0L893.6,105.8M893.6,105.8L935.2,113.6M935.2,113.6L982.4,122.4M982.4,122.4L1036.7,132.5M1036.7,132.5L1099.5,144.2M1099.5,144.2L1173.1,157.9M1173.1,157.9L1260.6,174.2M1260.6,174.2L1324.0,186.0M865.6,98.5L902.8,105.3M902.8,105.3L944.8,113.0M944.8,113.0L992.5,121.7M992.5,121.7L1047.1,131.7M1047.1,131.7L1110.4,143.3M1110.4,143.3L1184.6,156.9M1184.6,156.9L1272.6,173.0M1272.6,173.0L1324.0,182.4M874.3,98.1L911.9,104.8M911.9,104.8L954.3,112.5M954.3,112.5L1002.4,121.1M1002.4,121.1L1057.5,131.0M1057.5,131.0L1121.3,142.5M1121.3,142.5L1195.9,155.9M1195.9,155.9L1284.5,171.8M1284.5,171.8L1324.0,178.9M883.0,97.7L920.9,104.4M920.9,104.4L963.7,111.9M963.7,111.9L1012.2,120.5M1012.2,120.5L1067.8,130.3M1067.8,130.3L1132.0,141.6M1132.0,141.6L1207.2,154.9M1207.2,154.9L1296.2,170.6M1296.2,170.6L1324.0,175.5M929.9,103.9L973.0,111.4M973.0,111.4L1022.0,119.9M1022.0,119.9L1078.0,129.6M1078.0,129.6L1142.7,140.8M1142.7,140.8L1218.3,153.9M1218.3,153.9L1307.8,169.5M1307.8,169.5L1324.0,172.3M947.6,102.9L991.5,110.3M991.5,110.3L1041.2,118.6M1041.2,118.6L1098.0,128.2M1098.0,128.2L1163.6,139.2M1163.6,139.2L1240.1,152.0M1240.1,152.0L1324.0,166.1M956.3,102.5L1000.6,109.8M1000.6,109.8L1050.7,118.1M1050.7,118.1L1107.9,127.5M1107.9,127.5L1173.9,138.4M1173.9,138.4L1250.8,151.1M1250.8,151.1L1324.0,163.2M965.0,102.0L1009.6,109.3M1009.6,109.3L1060.1,117.5M1060.1,117.5L1117.7,126.8M1117.7,126.8L1184.1,137.6M1184.1,137.6L1261.4,150.2M1261.4,150.2L1324.0,160.3M973.6,101.5L1018.5,108.7M1018.5,108.7L1069.4,116.9M1069.4,116.9L1127.4,126.1M1127.4,126.1L1194.2,136.8M1194.2,136.8L1271.9,149.3M1271.9,149.3L1324.0,157.6M982.1,101.1L1027.4,108.2M1027.4,108.2L1078.6,116.3M1078.6,116.3L1137.0,125.5M1137.0,125.5L1204.2,136.1M1204.2,136.1L1282.3,148.4M1282.3,148.4L1324.0,154.9M990.6,100.6L1036.2,107.7M1036.2,107.7L1087.8,115.7M1087.8,115.7L1146.5,124.8M1146.5,124.8L1214.1,135.3M1214.1,135.3L1292.5,147.5M1292.5,147.5L1324.0,152.3M1045.0,107.2L1096.8,115.1M1096.8,115.1L1155.9,124.2M1155.9,124.2L1223.8,134.5M1223.8,134.5L1302.7,146.6M1302.7,146.6L1324.0,149.8M1053.6,106.7L1105.8,114.6M1105.8,114.6L1165.3,123.5M1165.3,123.5L1233.5,133.8M1233.5,133.8L1312.7,145.7M1312.7,145.7L1324.0,147.4M1062.2,106.2L1114.8,114.0M1114.8,114.0L1174.5,122.9M1174.5,122.9L1243.1,133.0M1243.1,133.0L1322.7,144.8M1322.7,144.8L1324.0,145.0M1079.2,105.2L1132.4,112.9M1132.4,112.9L1192.8,121.6M1192.8,121.6L1262.0,131.6M1262.0,131.6L1324.0,140.5M1087.5,104.7L1141.0,112.3M1141.0,112.3L1201.8,121.0M1201.8,121.0L1271.3,130.9M1271.3,130.9L1324.0,138.3M1149.6,111.8L1210.7,120.4M1210.7,120.4L1280.6,130.2M1280.6,130.2L1324.0,136.2M1158.2,111.3L1219.5,119.7M1219.5,119.7L1289.7,129.4M1289.7,129.4L1324.0,134.2M1166.7,110.7L1228.3,119.1M1228.3,119.1L1298.7,128.7M1298.7,128.7L1324.0,132.2M1175.0,110.2L1237.0,118.5M1237.0,118.5L1307.7,128.1M1307.7,128.1L1324.0,130.2M1183.4,109.7L1245.6,117.9M1245.6,117.9L1316.6,127.4M1316.6,127.4L1324.0,128.4M1254.1,117.3L1324.0,126.5M1262.5,116.8L1324.0,124.7M1279.2,115.6L1324.0,121.3" stroke="#fff" stroke-opacity="0.026" stroke-width="1.25" fill="none"/>
<path d="M211.5,186.1L327.1,178.2M83.2,198.3L210.9,189.4M210.9,189.4L328.4,181.3M328.4,181.3L436.9,173.8M-2.0,207.9L80.3,202.1M80.3,202.1L210.3,193.0M210.3,193.0L329.8,184.5M329.8,184.5L440.0,176.8M440.0,176.8L541.8,169.6M-2.0,211.8L77.3,206.1M77.3,206.1L209.7,196.6M209.7,196.6L331.2,187.9M331.2,187.9L443.1,179.8M443.1,179.8L546.4,172.4M546.4,172.4L642.2,165.5M-2.0,215.8L74.2,210.2M74.2,210.2L209.1,200.3M209.1,200.3L332.7,191.3M332.7,191.3L446.3,183.0M446.3,183.0L551.2,175.4M551.2,175.4L648.2,168.3M-2.0,219.9L71.0,214.5M71.0,214.5L208.5,204.2M208.5,204.2L334.2,194.9M334.2,194.9L449.7,186.3M449.7,186.3L556.1,178.4M556.1,178.4L654.4,171.1M654.4,171.1L745.6,164.3M-2.0,224.2L67.6,218.9M67.6,218.9L207.8,208.3M207.8,208.3L335.8,198.6M335.8,198.6L453.1,189.7M453.1,189.7L561.1,181.5M561.1,181.5L660.8,174.0M660.8,174.0L753.1,167.0M-2.0,228.6L64.1,223.5M64.1,223.5L207.1,212.5M207.1,212.5L337.4,202.4M337.4,202.4L456.7,193.2M456.7,193.2L566.3,184.8M566.3,184.8L667.4,177.0M667.4,177.0L760.8,169.8M-2.0,238.0L56.7,233.3M56.7,233.3L205.6,221.3M340.8,210.5L464.2,200.6M464.2,200.6L577.3,191.6M577.3,191.6L681.2,183.3M681.2,183.3L777.1,175.6M777.1,175.6L865.8,168.5M-2.0,242.9L52.8,238.5M468.2,204.5L583.0,195.2M583.0,195.2L688.5,186.6M688.5,186.6L785.6,178.6M785.6,178.6L875.3,171.3M589.0,198.9L696.0,190.0M696.0,190.0L794.4,181.8M794.4,181.8L885.2,174.2M595.2,202.7L703.7,193.5M703.7,193.5L803.4,185.0M803.4,185.0L895.3,177.2M711.7,197.1L812.8,188.4M812.8,188.4L905.8,180.3M905.8,180.3L991.8,172.9M720.1,200.9L822.5,191.9M822.5,191.9L916.6,183.5M916.6,183.5L1003.5,175.8M735.5,204.2L838.6,194.9M838.6,194.9L933.3,186.3M933.3,186.3L1020.5,178.4M810.1,202.2L910.1,192.9M910.1,192.9L1001.9,184.5M847.6,203.6L946.0,194.3M946.0,194.3L1036.3,185.7M959.3,202.9L1052.9,193.6M1052.9,193.6L1138.9,185.1M997.7,204.3L1089.6,195.0M1089.6,195.0L1174.1,186.4M973.4,212.4L1070.6,202.2M1070.6,202.2L1159.4,193.0M1014.0,213.9L1109.3,203.7M1109.3,203.7L1196.5,194.4M1089.3,211.6L1181.3,201.5M1181.3,201.5L1265.5,192.3M1130.3,213.1L1220.5,203.0M1074.9,225.9L1171.8,214.7M1171.8,214.7L1260.1,204.5M1152.8,223.5L1246.1,212.4M1246.1,212.4L1324.0,203.1M1196.8,225.1L1288.1,214.0M1288.1,214.0L1324.0,209.6M1223.8,236.7L1318.2,224.4M1318.2,224.4L1324.0,223.6M1271.2,238.4L1324.0,231.3M1303.5,251.3L1324.0,248.3M3.5,203.4L-2.0,208.4M48.4,201.2L24.7,227.3M70.9,199.6L50.0,225.3M93.0,198.1L75.0,223.4M114.9,196.6L99.5,221.5M136.4,195.1L123.7,219.6M157.6,193.6L147.5,217.8M178.5,192.1L170.9,216.0M199.2,190.7L194.0,214.2M219.5,189.3L216.7,212.4M259.4,186.5L261.0,209.0M279.0,185.1L282.7,207.3M298.2,183.8L304.1,205.7M317.2,182.5L325.1,204.0M336.0,181.2L345.9,202.4M354.5,179.9L366.3,200.9M372.8,178.6L386.5,199.3M390.9,177.4L406.3,197.8M408.7,176.1L425.9,196.3M443.6,173.7L464.2,193.3M460.7,172.5L483.0,191.8M477.7,171.3L501.5,190.4M494.4,170.2L519.7,189.0M519.7,189.0L550.8,212.1M510.9,169.0L537.7,187.6M537.7,187.6L570.6,210.4M527.2,167.9L555.5,186.2M555.5,186.2L590.1,208.7M543.3,166.8L573.0,184.9M573.0,184.9L609.3,207.0M559.2,165.7L590.3,183.5M590.3,183.5L628.2,205.3M574.9,164.6L607.3,182.2M607.3,182.2L646.9,203.7M605.8,162.4L640.8,179.6M640.8,179.6L683.3,200.5M620.9,161.4L657.2,178.4M657.2,178.4L701.1,199.0M635.9,160.3L673.4,177.1M673.4,177.1L718.7,197.5M689.3,175.9L736.0,196.0M705.1,174.7L753.1,194.5M720.7,173.5L770.0,193.0M736.0,172.3L786.6,191.5M751.2,171.1L803.0,190.1M803.0,190.1L866.5,213.5M766.2,169.9L819.1,188.7M819.1,188.7L884.0,211.7M795.6,167.7L850.8,186.0M850.8,186.0L918.2,208.3M810.1,166.5L866.3,184.6M866.3,184.6L934.9,206.7M824.3,165.4L881.6,183.3M881.6,183.3L951.4,205.0M838.4,164.3L896.7,182.0M896.7,182.0L967.6,203.4M911.6,180.7L983.6,201.8M926.3,179.4L999.4,200.2M999.4,200.2L1090.0,226.1M940.8,178.1L1014.9,198.7M1014.9,198.7L1106.7,224.2M955.1,176.9L1030.2,197.2M1030.2,197.2L1123.1,222.3M969.3,175.6L1045.3,195.7M1045.3,195.7L1139.2,220.4M997.0,173.2L1074.9,192.7M1074.9,192.7L1170.7,216.7M1170.7,216.7L1291.6,247.0M1089.3,191.3L1186.1,214.9M1186.1,214.9L1307.9,244.7M1103.6,189.8L1201.2,213.1M1201.2,213.1L1324.0,242.4M1117.7,188.4L1216.2,211.4M1216.2,211.4L1324.0,236.5M1131.6,187.1L1230.9,209.7M1230.9,209.7L1324.0,230.9M1145.2,185.7L1245.3,208.0M1245.3,208.0L1324.0,225.5M1158.8,184.3L1259.6,206.3M1259.6,206.3L1324.0,220.4M1273.6,204.7L1324.0,215.5M1287.5,203.1L1324.0,210.7M1314.5,199.9L1324.0,201.8" stroke="#fff" stroke-opacity="0.035" stroke-width="1.25" fill="none"/>
<path d="M205.6,221.3L340.8,210.5M52.8,238.5L204.8,226.0M204.8,226.0L342.7,214.8M342.7,214.8L468.2,204.5M-2.0,248.1L48.7,243.9M48.7,243.9L204.0,230.9M204.0,230.9L344.6,219.2M344.6,219.2L472.3,208.6M472.3,208.6L589.0,198.9M-2.0,253.5L44.4,249.5M44.4,249.5L203.2,236.0M203.2,236.0L346.5,223.8M346.5,223.8L476.6,212.8M476.6,212.8L595.2,202.7M-2.0,259.1L39.9,255.4M39.9,255.4L202.3,241.3M202.3,241.3L348.6,228.7M348.6,228.7L481.0,217.2M481.0,217.2L601.6,206.7M601.6,206.7L711.7,197.1M-2.0,264.9L35.2,261.6M35.2,261.6L201.4,246.9M201.4,246.9L350.7,233.6M350.7,233.6L485.6,221.7M485.6,221.7L608.2,210.8M608.2,210.8L720.1,200.9M-2.0,271.0L42.9,266.9M42.9,266.9L211.4,251.7M211.4,251.7L362.6,238.0M362.6,238.0L499.0,225.6M499.0,225.6L622.7,214.4M622.7,214.4L735.5,204.2M-2.0,277.3L138.8,264.3M138.8,264.3L302.1,249.2M302.1,249.2L448.7,235.6M448.7,235.6L580.9,223.4M580.9,223.4L700.8,212.3M700.8,212.3L810.1,202.2M-2.0,284.0L6.9,283.1M6.9,283.1L187.1,266.1M187.1,266.1L347.8,250.9M347.8,250.9L492.0,237.2M492.0,237.2L622.1,224.9M622.1,224.9L740.1,213.8M740.1,213.8L847.6,203.6M620.9,236.5L744.7,224.2M744.7,224.2L857.0,213.1M857.0,213.1L959.3,202.9M665.2,238.1L786.8,225.8M786.8,225.8L897.2,214.6M897.2,214.6L997.7,204.3M749.2,235.7L866.8,223.5M866.8,223.5L973.4,212.4M794.0,237.4L909.4,225.0M909.4,225.0L1014.0,213.9M753.6,248.4L877.0,234.9M877.0,234.9L988.4,222.7M988.4,222.7L1089.3,211.6M801.3,250.2L922.2,236.6M922.2,236.6L1031.4,224.3M1031.4,224.3L1130.3,213.1M849.6,252.0L968.1,238.3M968.1,238.3L1074.9,225.9M935.9,249.3L1049.9,235.8M1049.9,235.8L1152.8,223.5M984.7,251.1L1096.2,237.5M1096.2,237.5L1196.8,225.1M1002.6,265.5L1119.2,250.3M1119.2,250.3L1223.8,236.7M1055.5,267.4L1169.2,252.1M1169.2,252.1L1271.2,238.4M1144.0,264.5L1253.0,249.4M1253.0,249.4L1324.0,239.5M1197.5,266.5L1303.5,251.3M1171.2,280.5L1284.8,263.6M1284.8,263.6L1324.0,257.7M1228.5,282.6L1324.0,267.9M1286.6,284.7L1324.0,278.7M1262.6,300.7L1324.0,290.5M24.7,227.3L-2.0,256.6M50.0,225.3L23.5,258.0M23.5,258.0L-2.0,289.4M75.0,223.4L52.0,255.5M52.0,255.5L22.0,297.7M99.5,221.5L80.1,253.1M80.1,253.1L54.6,294.5M123.7,219.6L107.6,250.7M107.6,250.7L86.7,291.3M147.5,217.8L134.7,248.3M134.7,248.3L118.0,288.1M170.9,216.0L161.3,246.0M161.3,246.0L148.7,285.1M194.0,214.2L187.4,243.8M187.4,243.8L178.8,282.1M216.7,212.4L213.0,241.5M213.0,241.5L208.3,279.1M261.0,209.0L263.0,237.2M263.0,237.2L265.6,273.4M282.7,207.3L287.4,235.0M287.4,235.0L293.5,270.6M304.1,205.7L311.4,233.0M311.4,233.0L320.8,267.9M325.1,204.0L335.0,230.9M335.0,230.9L347.5,265.3M345.9,202.4L358.1,228.9M358.1,228.9L373.8,262.6M366.3,200.9L381.0,226.9M381.0,226.9L399.6,260.1M386.5,199.3L403.4,224.9M403.4,224.9L424.9,257.5M406.3,197.8L425.5,223.0M425.5,223.0L449.8,255.1M425.9,196.3L447.2,221.1M447.2,221.1L474.2,252.6M464.2,193.3L489.6,217.4M489.6,217.4L521.7,247.9M483.0,191.8L510.4,215.6M510.4,215.6L544.8,245.6M501.5,190.4L530.8,213.8M530.8,213.8L567.6,243.3M550.8,212.1L589.9,241.1M570.6,210.4L611.8,238.9M590.1,208.7L633.4,236.7M609.3,207.0L654.6,234.6M628.2,205.3L675.5,232.5M646.9,203.7L696.0,230.5M683.3,200.5L736.1,226.5M701.1,199.0L755.6,224.5M755.6,224.5L824.9,257.0M718.7,197.5L774.8,222.6M774.8,222.6L846.0,254.6M736.0,196.0L793.8,220.7M793.8,220.7L866.8,252.1M753.1,194.5L812.4,218.9M812.4,218.9L887.3,249.8M770.0,193.0L830.7,217.1M830.7,217.1L907.3,247.4M786.6,191.5L848.8,215.3M848.8,215.3L927.0,245.1M866.5,213.5L946.4,242.9M884.0,211.7L965.4,240.6M918.2,208.3L1002.6,236.3M1002.6,236.3L1111.1,272.3M934.9,206.7L1020.6,234.2M1020.6,234.2L1130.7,269.5M951.4,205.0L1038.4,232.1M1038.4,232.1L1149.9,266.8M967.6,203.4L1055.9,230.1M1055.9,230.1L1168.8,264.2M983.6,201.8L1073.1,228.1M1073.1,228.1L1187.3,261.6M1187.3,261.6L1324.0,301.7M1090.0,226.1L1205.5,259.0M1205.5,259.0L1324.0,292.9M1106.7,224.2L1223.3,256.5M1223.3,256.5L1324.0,284.5M1123.1,222.3L1240.9,254.1M1240.9,254.1L1324.0,276.5M1139.2,220.4L1258.1,251.7M1258.1,251.7L1324.0,269.0M1291.6,247.0L1324.0,255.1M1307.9,244.7L1324.0,248.6M1324.0,242.4L1324.0,242.4" stroke="#fff" stroke-opacity="0.044" stroke-width="1.25" fill="none"/>
<path d="M-2.0,298.2L159.2,282.3M159.2,282.3L330.7,265.3M330.7,265.3L483.6,250.1M483.6,250.1L620.9,236.5M-2.0,305.9L21.5,303.5M21.5,303.5L211.7,284.2M211.7,284.2L380.2,267.1M380.2,267.1L530.4,251.8M530.4,251.8L665.2,238.1M-2.0,313.9L127.0,300.5M127.0,300.5L310.9,281.3M310.9,281.3L473.7,264.4M473.7,264.4L618.9,249.3M618.9,249.3L749.2,235.7M-2.0,322.4L183.5,302.5M183.5,302.5L363.9,283.3M363.9,283.3L523.7,266.2M523.7,266.2L666.1,251.0M666.1,251.0L794.0,237.4M-2.0,331.2L89.6,321.2M89.6,321.2L287.8,299.5M287.8,299.5L461.9,280.4M461.9,280.4L616.1,263.5M616.1,263.5L753.6,248.4M-2.0,340.6L150.6,323.4M150.6,323.4L344.8,301.6M344.8,301.6L515.4,282.4M515.4,282.4L666.6,265.3M666.6,265.3L801.3,250.2M-2.0,350.5L212.4,325.7M212.4,325.7L402.6,303.7M402.6,303.7L569.7,284.3M569.7,284.3L717.7,267.2M717.7,267.2L849.6,252.0M-2.0,360.9L112.0,347.4M505.4,300.6L666.3,281.4M666.3,281.4L808.8,264.5M808.8,264.5L935.9,249.3M563.8,302.7L721.1,283.4M721.1,283.4L860.4,266.4M860.4,266.4L984.7,251.1M724.3,301.7L871.9,282.5M871.9,282.5L1002.6,265.5M784.0,303.9L928.0,284.5M928.0,284.5L1055.5,267.4M884.0,300.6L1021.9,281.5M1021.9,281.5L1144.0,264.5M944.4,302.9L1078.6,283.6M1078.6,283.6L1197.5,266.5M896.8,321.3L1042.9,299.6M1042.9,299.6L1171.2,280.5M962.1,323.7L1103.9,301.8M1103.9,301.8L1228.5,282.6M1028.4,326.1L1165.8,304.1M1165.8,304.1L1286.6,284.7M1131.8,322.5L1262.6,300.7M1198.8,325.0L1324.0,303.2M1235.6,349.0L1324.0,332.2M1309.5,351.7L1324.0,348.8M1277.2,376.7L1324.0,367.0M22.0,297.7L-2.0,331.3M54.6,294.5L19.9,350.9M86.7,291.3L58.1,346.5M118.0,288.1L95.4,342.1M148.7,285.1L131.8,337.9M178.8,282.1L167.3,333.7M208.3,279.1L202.0,329.7M265.6,273.4L269.1,321.9M293.5,270.6L301.5,318.1M320.8,267.9L333.2,314.4M347.5,265.3L364.2,310.8M373.8,262.6L394.5,307.2M399.6,260.1L424.2,303.8M424.9,257.5L453.2,300.4M449.8,255.1L481.6,297.1M474.2,252.6L509.5,293.8M521.7,247.9L563.4,287.5M544.8,245.6L589.6,284.5M567.6,243.3L615.2,281.5M589.9,241.1L640.4,278.6M611.8,238.9L665.0,275.7M633.4,236.7L689.2,272.9M689.2,272.9L763.6,321.1M654.6,234.6L712.9,270.1M712.9,270.1L790.4,317.3M675.5,232.5L736.1,267.4M736.1,267.4L816.6,313.6M696.0,230.5L758.9,264.7M758.9,264.7L842.2,310.1M736.1,226.5L803.3,259.5M803.3,259.5L891.8,303.1M824.9,257.0L915.8,299.7M846.0,254.6L939.3,296.4M866.8,252.1L962.4,293.2M887.3,249.8L984.9,290.0M984.9,290.0L1117.6,344.7M907.3,247.4L1007.0,286.9M1007.0,286.9L1142.0,340.4M927.0,245.1L1028.7,283.9M1028.7,283.9L1165.9,336.2M946.4,242.9L1049.9,280.9M1049.9,280.9L1189.1,332.1M965.4,240.6L1070.7,278.0M1070.7,278.0L1211.9,328.1M1111.1,272.3L1255.8,320.3M1255.8,320.3L1324.0,342.9M1130.7,269.5L1277.1,316.6M1277.1,316.6L1324.0,331.7M1149.9,266.8L1297.8,312.9M1297.8,312.9L1324.0,321.1M1168.8,264.2L1318.1,309.3M1318.1,309.3L1324.0,311.1" stroke="#fff" stroke-opacity="0.053" stroke-width="1.25" fill="none"/>
<path d="M112.0,347.4L322.3,322.3M322.3,322.3L505.4,300.6M-2.0,372.0L179.1,349.8M179.1,349.8L384.7,324.6M384.7,324.6L563.8,302.7M-2.0,396.2L139.5,377.8M139.5,377.8L363.4,348.7M363.4,348.7L556.3,323.5M556.3,323.5L724.3,301.7M-2.0,409.5L213.8,380.5M213.8,380.5L432.1,351.2M432.1,351.2L620.2,325.9M620.2,325.9L784.0,303.9M-2.0,423.7L92.0,410.6M92.0,410.6L337.5,376.5M337.5,376.5L546.7,347.5M546.7,347.5L727.0,322.4M727.0,322.4L884.0,300.6M-2.0,438.8L173.6,413.6M173.6,413.6L412.6,379.2M412.6,379.2L616.2,350.0M616.2,350.0L791.6,324.8M791.6,324.8L944.4,302.9M-2.0,455.0L34.0,449.7M34.0,449.7L306.1,409.2M306.1,409.2L534.6,375.2M534.6,375.2L729.1,346.2M729.1,346.2L896.8,321.3M-2.0,472.4L124.6,452.9M610.4,377.9L799.3,348.8M799.3,348.8L962.1,323.7M687.4,380.7L870.5,351.4M870.5,351.4L1028.4,326.1M807.3,376.6L981.6,347.6M981.6,347.6L1131.8,322.5M885.1,379.5L1053.5,350.2M1053.5,350.2L1198.8,325.0M900.9,412.3L1081.7,378.1M1081.7,378.1L1235.6,349.0M987.7,415.5L1161.5,381.0M1161.5,381.0L1309.5,351.7M1113.5,410.9L1277.2,376.7M1201.3,414.0L1324.0,387.1M1149.9,449.8L1324.0,409.5M1247.2,453.3L1324.0,434.5M1301.3,500.9L1324.0,494.6M19.9,350.9L-2.0,386.6M58.1,346.5L17.0,425.9M95.4,342.1L63.0,419.5M131.8,337.9L107.6,413.2M167.3,333.7L151.0,407.1M202.0,329.7L193.1,401.2M269.1,321.9L274.0,389.8M301.5,318.1L312.8,384.4M333.2,314.4L350.5,379.1M364.2,310.8L387.3,373.9M394.5,307.2L423.1,368.9M424.2,303.8L458.0,364.0M453.2,300.4L492.0,359.2M481.6,297.1L525.2,354.6M509.5,293.8L557.6,350.0M563.4,287.5L620.0,341.3M620.0,341.3L700.9,418.2M589.6,284.5L650.1,337.0M650.1,337.0L736.3,412.0M615.2,281.5L679.4,332.9M679.4,332.9L770.6,405.9M640.4,278.6L708.1,328.9M708.1,328.9L804.0,400.0M665.0,275.7L736.2,324.9M736.2,324.9L836.4,394.3M763.6,321.1L868.0,388.7M790.4,317.3L898.7,383.3M816.6,313.6L928.6,378.0M842.2,310.1L957.7,372.9M891.8,303.1L1013.7,363.0M1013.7,363.0L1192.2,450.8M915.8,299.7L1040.7,358.3M1040.7,358.3L1222.6,443.6M939.3,296.4L1066.9,353.6M1066.9,353.6L1252.0,436.6M962.4,293.2L1092.6,349.1M1092.6,349.1L1280.6,429.9M1280.6,429.9L1324.0,448.5M1117.6,344.7L1308.3,423.3M1308.3,423.3L1324.0,429.8M1142.0,340.4L1324.0,412.5M1165.9,336.2L1324.0,396.5M1189.1,332.1L1324.0,381.7M1211.9,328.1L1324.0,367.9" stroke="#fff" stroke-opacity="0.061" stroke-width="1.25" fill="none"/>
<path d="M124.6,452.9L388.7,412.2M388.7,412.2L610.4,377.9M-2.0,491.2L216.4,456.2M216.4,456.2L472.4,415.2M472.4,415.2L687.4,380.7M-2.0,511.5L63.7,500.5M63.7,500.5L358.9,451.3M358.9,451.3L602.6,410.7M602.6,410.7L807.3,376.6M-2.0,533.4L166.4,504.2M166.4,504.2L451.6,454.7M451.6,454.7L687.2,413.8M687.2,413.8L885.1,379.5M-2.0,583.4L103.0,563.5M103.0,563.5L425.1,502.5M425.1,502.5L685.7,453.1M685.7,453.1L900.9,412.3M-2.0,611.9L220.9,567.7M220.9,567.7L530.4,506.3M530.4,506.3L780.9,456.5M780.9,456.5L987.7,415.5M-2.0,643.3L20.8,638.5M20.8,638.5L390.6,561.5M390.6,561.5L682.4,500.7M682.4,500.7L918.5,451.5M918.5,451.5L1113.5,410.9M-2.0,678.0L156.0,643.3M156.0,643.3L509.7,565.7M509.7,565.7L788.8,504.5M788.8,504.5L1014.7,455.0M1014.7,455.0L1201.3,414.0M-2.0,716.5L344.8,636.2M344.8,636.2L676.5,559.4M676.5,559.4L938.2,498.8M938.2,498.8L1149.9,449.8M-2.0,759.6L68.9,742.3M68.9,742.3L481.6,641.1M481.6,641.1L797.0,563.7M797.0,563.7L1045.8,502.7M1045.8,502.7L1247.2,453.3M75.3,788.0L282.5,734.0M282.5,734.0L666.9,633.8M666.9,633.8L960.7,557.3M960.7,557.3L1192.4,496.9M1192.4,496.9L1324.0,462.7M268.3,788.0L442.4,739.6M442.4,739.6L805.2,638.7M805.2,638.7L1082.5,561.7M1082.5,561.7L1301.3,500.9M461.2,788.0L604.6,745.3M604.6,745.3L945.6,643.7M945.6,643.7L1206.2,566.1M1206.2,566.1L1324.0,531.0M847.1,788.0L977.7,742.6M977.7,742.6L1268.9,641.4M1268.9,641.4L1324.0,622.2M1040.1,788.0L1182.4,734.0M1182.4,734.0L1324.0,680.3M1233.0,788.0L1324.0,750.0M17.0,425.9L-2.0,462.7M63.0,419.5L12.7,539.6M12.7,539.6L-2.0,574.6M107.6,413.2L70.3,529.4M70.3,529.4L5.3,732.2M5.3,732.2L-2.0,754.9M151.0,407.1L125.9,519.6M125.9,519.6L82.7,713.8M82.7,713.8L66.2,788.0M193.1,401.2L179.6,510.1M179.6,510.1L156.3,696.4M156.3,696.4L144.9,788.0M274.0,389.8L281.3,492.2M281.3,492.2L293.6,663.8M293.6,663.8L302.5,788.0M312.8,384.4L329.6,483.7M329.6,483.7L357.6,648.7M357.6,648.7L381.2,788.0M350.5,379.1L376.3,475.4M376.3,475.4L418.8,634.1M418.8,634.1L460.0,788.0M387.3,373.9L421.5,467.5M421.5,467.5L477.4,620.3M477.4,620.3L538.8,788.0M423.1,368.9L465.3,459.8M465.3,459.8L533.6,606.9M533.6,606.9L617.5,788.0M458.0,364.0L507.6,452.3M507.6,452.3L587.4,594.2M587.4,594.2L696.3,788.0M492.0,359.2L548.7,445.0M548.7,445.0L639.1,581.9M639.1,581.9L775.1,788.0M525.2,354.6L588.5,438.0M588.5,438.0L688.7,570.2M688.7,570.2L853.9,788.0M557.6,350.0L627.1,431.2M627.1,431.2L736.4,558.9M736.4,558.9L932.6,788.0M700.9,418.2L826.5,537.5M826.5,537.5L1047.6,747.5M1047.6,747.5L1090.2,788.0M736.3,412.0L869.1,527.4M869.1,527.4L1100.4,728.4M1100.4,728.4L1168.9,788.0M770.6,405.9L910.2,517.7M910.2,517.7L1150.6,710.3M1150.6,710.3L1247.7,788.0M804.0,400.0L949.8,508.3M949.8,508.3L1198.5,693.0M1198.5,693.0L1324.0,786.2M836.4,394.3L988.0,499.2M988.0,499.2L1244.1,676.5M1244.1,676.5L1324.0,731.8M868.0,388.7L1024.9,490.5M1024.9,490.5L1287.7,660.7M1287.7,660.7L1324.0,684.3M898.7,383.3L1060.6,482.0M1060.6,482.0L1324.0,642.5M928.6,378.0L1095.2,473.8M1095.2,473.8L1324.0,605.4M957.7,372.9L1128.6,465.9M1128.6,465.9L1324.0,572.3M1192.2,450.8L1324.0,515.6M1222.6,443.6L1324.0,491.2M1252.0,436.6L1324.0,468.9" stroke="#fff" stroke-opacity="0.070" stroke-width="1.25" fill="none"/>
<path d="M228.5,84.1L286.3,82.2M-2.0,101.4L20.6,100.5M20.6,100.5L92.6,97.9M92.6,97.9L161.3,95.4M161.3,95.4L227.0,92.9M227.0,92.9L289.9,90.6M289.9,90.6L350.1,88.4M350.1,88.4L407.9,86.3M407.9,86.3L463.3,84.2M463.3,84.2L516.6,82.3M516.6,82.3L567.7,80.4M567.7,80.4L617.0,78.6M617.0,78.6L664.4,76.8M648.1,86.4L698.8,84.4M698.8,84.4L747.4,82.4M747.4,82.4L794.2,80.5M794.2,80.5L839.1,78.7M839.1,78.7L882.4,76.9M841.1,88.7L888.9,86.5M888.9,86.5L934.8,84.5M934.8,84.5L978.8,82.5M978.8,82.5L1021.1,80.6M1043.0,91.0L1087.6,88.8M1087.6,88.8L1130.3,86.7M1166.5,98.5L1211.4,96.0M1211.4,96.0L1254.3,93.5M1254.3,93.5L1295.4,91.2M1308.8,107.2L1324.0,106.2M27.9,94.2L15.3,100.5M15.3,100.5L1.1,107.7M139.8,89.4L134.0,95.1M134.0,95.1L127.6,101.5M242.3,85.9L242.2,91.2M242.2,91.2L242.0,97.1M427.8,79.4L436.8,84.1M436.8,84.1L446.8,89.3M512.0,76.5L524.7,80.9M524.7,80.9L538.8,85.7M607.1,77.9L624.7,82.4M624.7,82.4L644.1,87.4M684.5,75.1L705.2,79.3M705.2,79.3L727.9,84.0M780.7,76.4L806.2,80.8M806.2,80.8L834.4,85.6M879.7,77.8L910.5,82.3M910.5,82.3L944.4,87.3M944.4,87.3L982.0,92.7M981.8,79.2L1018.1,83.9M1018.1,83.9L1058.2,89.0M1058.2,89.0L1102.6,94.7M1129.2,85.5L1175.8,90.8M1175.8,90.8L1227.6,96.6M1227.6,96.6L1285.5,103.2M1297.6,92.6L1324.0,95.3" stroke="#fff" stroke-opacity="0.011" stroke-width="1.25" fill="none"/>
<path d="M-2.0,112.7L76.9,109.5M76.9,109.5L152.9,106.4M152.9,106.4L225.3,103.5M225.3,103.5L294.2,100.7M294.2,100.7L359.9,98.1M359.9,98.1L422.7,95.5M422.7,95.5L482.8,93.1M482.8,93.1L540.3,90.8M540.3,90.8L595.3,88.5M595.3,88.5L648.1,86.4M628.0,98.2L684.9,95.7M684.9,95.7L739.3,93.2M739.3,93.2L791.3,90.9M791.3,90.9L841.1,88.7M843.6,101.0L896.9,98.4M896.9,98.4L947.8,95.8M947.8,95.8L996.4,93.4M996.4,93.4L1043.0,91.0M1018.5,107.0L1070.2,104.0M1070.2,104.0L1119.5,101.2M1119.5,101.2L1166.5,98.5M1212.3,113.5L1261.8,110.3M1261.8,110.3L1308.8,107.2M1.1,107.7L-2.0,109.2M127.6,101.5L120.3,108.7M120.3,108.7L112.1,116.9M242.0,97.1L241.8,103.8M241.8,103.8L241.6,111.3M446.8,89.3L457.9,95.0M457.9,95.0L470.2,101.4M538.8,85.7L554.3,91.1M554.3,91.1L571.6,97.0M644.1,87.4L665.5,92.9M665.5,92.9L689.4,99.0M727.9,84.0L752.9,89.1M752.9,89.1L780.7,94.8M780.7,94.8L811.8,101.2M834.4,85.6L865.5,90.9M865.5,90.9L900.1,96.8M900.1,96.8L938.8,103.4M982.0,92.7L1023.8,98.9M1023.8,98.9L1070.7,105.7M1102.6,94.7L1152.2,101.0M1152.2,101.0L1207.9,108.1M1207.9,108.1L1270.9,116.2M1285.5,103.2L1324.0,107.6" stroke="#fff" stroke-opacity="0.023" stroke-width="1.25" fill="none"/>
<path d="M-2.0,126.4L57.7,123.7M57.7,123.7L142.7,119.9M142.7,119.9L223.1,116.3M223.1,116.3L299.4,112.9M299.4,112.9L371.8,109.7M371.8,109.7L440.6,106.6M440.6,106.6L506.1,103.7M506.1,103.7L568.5,100.9M568.5,100.9L628.0,98.2M602.7,113.1L667.5,109.9M667.5,109.9L729.1,106.8M729.1,106.8L787.7,103.8M787.7,103.8L843.6,101.0M846.8,116.8L907.0,113.3M907.0,113.3L964.2,110.1M964.2,110.1L1018.5,107.0M1046.9,124.5L1105.1,120.6M1105.1,120.6L1160.1,117.0M1160.1,117.0L1212.3,113.5M1271.9,133.1L1324.0,129.0M112.1,116.9L102.8,126.1M102.8,126.1L92.0,136.8M241.6,111.3L241.4,119.7M470.2,101.4L484.1,108.5M484.1,108.5L499.8,116.6M571.6,97.0L590.9,103.6M590.9,103.6L612.6,111.0M689.4,99.0L716.2,105.9M716.2,105.9L746.5,113.7M811.8,101.2L846.6,108.3M846.6,108.3L886.0,116.4M938.8,103.4L982.3,110.8M982.3,110.8L1031.6,119.3M1070.7,105.7L1123.6,113.4M1123.6,113.4L1183.7,122.2M1183.7,122.2L1252.6,132.3M1270.9,116.2L1324.0,123.0" stroke="#fff" stroke-opacity="0.035" stroke-width="1.25" fill="none"/>
<path d="M-2.0,143.5L33.5,141.7M33.5,141.7L129.8,136.8M129.8,136.8L220.4,132.3M220.4,132.3L305.8,128.0M305.8,128.0L386.3,124.0M386.3,124.0L462.4,120.2M462.4,120.2L534.4,116.5M534.4,116.5L602.7,113.1M-2.0,165.2L2.1,164.9M569.7,132.6L645.0,128.3M645.0,128.3L716.0,124.2M716.0,124.2L783.2,120.4M783.2,120.4L846.8,116.8M850.9,137.4L920.2,132.8M920.2,132.8L985.4,128.5M985.4,128.5L1046.9,124.5M1084.9,147.8L1151.2,142.6M1151.2,142.6L1213.4,137.7M1213.4,137.7L1271.9,133.1M1298.8,165.0L1324.0,162.5M92.0,136.8L79.5,149.3M79.5,149.3L64.7,163.9M241.4,119.7L241.2,129.4M241.2,129.4L240.9,140.7M499.8,116.6L517.7,125.9M517.7,125.9L538.3,136.5M612.6,111.0L637.2,119.5M637.2,119.5L665.4,129.2M746.5,113.7L780.8,122.5M780.8,122.5L820.3,132.6M886.0,116.4L930.9,125.6M930.9,125.6L982.7,136.2M982.7,136.2L1042.8,148.5M1031.6,119.3L1088.0,128.9M1088.0,128.9L1153.2,140.0M1153.2,140.0L1229.2,153.0M1252.6,132.3L1324.0,142.7" stroke="#fff" stroke-opacity="0.046" stroke-width="1.25" fill="none"/>
<path d="M2.1,164.9L113.4,158.6M113.4,158.6L217.1,152.7M217.1,152.7L313.9,147.2M313.9,147.2L404.6,142.0M404.6,142.0L489.7,137.1M489.7,137.1L569.7,132.6M-2.0,193.8L91.3,187.6M91.3,187.6L212.6,179.6M324.6,172.2L428.4,165.3M428.4,165.3L524.8,159.0M524.8,159.0L614.7,153.0M614.7,153.0L698.6,147.5M698.6,147.5L777.2,142.3M777.2,142.3L850.9,137.4M856.5,165.7L938.0,159.3M938.0,159.3L1014.0,153.4M1014.0,153.4L1084.9,147.8M1153.0,179.1L1228.7,171.8M1228.7,171.8L1298.8,165.0M64.7,163.9L47.1,181.4M47.1,181.4L25.6,202.8M240.9,140.7L240.5,153.7M240.5,153.7L240.1,169.2M538.3,136.5L562.2,148.9M562.2,148.9L590.4,163.5M665.4,129.2L698.0,140.3M698.0,140.3L736.0,153.4M736.0,153.4L781.0,168.8M820.3,132.6L865.9,144.3M865.9,144.3L919.5,158.1M919.5,158.1L983.2,174.4M1042.8,148.5L1113.6,163.1M1113.6,163.1L1198.2,180.4M1198.2,180.4L1301.1,201.5M1229.2,153.0L1319.2,168.3M1319.2,168.3L1324.0,169.2" stroke="#fff" stroke-opacity="0.057" stroke-width="1.25" fill="none"/>
<path d="M212.6,179.6L324.6,172.2M-2.0,233.2L60.5,228.3M60.5,228.3L206.4,216.8M206.4,216.8L339.1,206.4M339.1,206.4L460.4,196.9M460.4,196.9L571.7,188.1M571.7,188.1L674.2,180.1M674.2,180.1L768.8,172.6M768.8,172.6L856.5,165.7M885.6,205.0L982.3,195.6M982.3,195.6L1071.1,187.0M1071.1,187.0L1153.0,179.1M1177.0,234.9L1273.7,222.7M1273.7,222.7L1324.0,216.4M25.6,202.8L-1.1,229.3M-1.1,229.3L-2.0,230.2M240.1,169.2L239.6,187.9M239.6,187.9L239.0,210.7M590.4,163.5L624.2,180.9M624.2,180.9L665.2,202.1M781.0,168.8L835.1,187.3M835.1,187.3L901.2,210.0M983.2,174.4L1060.2,194.2M1060.2,194.2L1155.1,218.5M1155.1,218.5L1275.0,249.3M1301.1,201.5L1324.0,206.2" stroke="#fff" stroke-opacity="0.069" stroke-width="1.25" fill="none"/>
<path d="M-2.0,290.9L58.9,285.1M58.9,285.1L236.1,267.9M236.1,267.9L394.1,252.6M394.1,252.6L535.9,238.9M535.9,238.9L663.8,226.5M663.8,226.5L779.9,215.2M779.9,215.2L885.6,205.0M816.5,280.4L950.4,263.5M950.4,263.5L1069.8,248.5M1069.8,248.5L1177.0,234.9M239.0,210.7L238.3,239.3M238.3,239.3L237.3,276.2M665.2,202.1L716.2,228.5M716.2,228.5L781.3,262.1M901.2,210.0L984.2,238.5M984.2,238.5L1091.1,275.1M1091.1,275.1L1234.1,324.2M1275.0,249.3L1324.0,261.9" stroke="#fff" stroke-opacity="0.081" stroke-width="1.25" fill="none"/>
<path d="M-2.0,383.7L66.2,375.1M66.2,375.1L295.5,346.2M295.5,346.2L493.2,321.2M493.2,321.2L665.3,299.5M665.3,299.5L816.5,280.4M654.2,788.0L813.6,736.9M813.6,736.9L1126.9,636.4M1126.9,636.4L1324.0,573.1M237.3,276.2L236.0,325.7M236.0,325.7L234.1,395.4M234.1,395.4L231.3,501.0M231.3,501.0L226.6,679.7M226.6,679.7L223.7,788.0M781.3,262.1L867.3,306.5M867.3,306.5L986.1,367.9M986.1,367.9L1160.9,458.2M1160.9,458.2L1324.0,542.5M1234.1,324.2L1324.0,355.0" stroke="#fff" stroke-opacity="0.092" stroke-width="1.25" fill="none"/>
<line x1="307.0" y1="50.0" x2="618.8" y2="376.7" stroke="#a63c4f" stroke-opacity="0.55" stroke-width="1.3"/>
<line x1="618.8" y1="376.7" x2="1011.4" y2="788.0" stroke="#a63c4f" stroke-opacity="1" stroke-width="1.3"/>
<line x1="-2.0" y1="557.3" x2="1324.0" y2="317.1" stroke="#6e9a28" stroke-width="1.3"/>
<polygon points="392.3,130.7 831,108 1205,183 1118,533 548.3,685.5 424.4,401.3" fill="#9c9e9f"/>
<polygon points="392.3,130.7 831,108 812,340 424.4,401.3" fill="#808283" stroke="#808283" stroke-width="0.6"/>
<polygon points="424.4,401.3 812,340 1118,533 548.3,685.5" fill="url(#floor)" stroke="#a4a5a7" stroke-width="0.7"/>
<polygon points="831,108 1205,183 1118,533 812,340" fill="url(#rwall)"/>
<polygon points="392.3,130.7 519,256 548.3,685.5 424.4,401.3" fill="url(#lwall)"/>
<polygon points="392.3,130.7 519,256 548.3,685.5 424.4,401.3" fill="url(#lwall2)"/>
<line x1="640.5" y1="186" x2="642.2" y2="391" stroke="#606060" stroke-width="0.6"/>
<line x1="808.6" y1="190" x2="793.8" y2="412" stroke="#606060" stroke-width="0.6"/>
<circle cx="640.3" cy="174.4" r="61.6" fill="none" stroke="#1c1c1c" stroke-width="1"/>
<circle cx="640.3" cy="174.4" r="10.4" fill="none" stroke="#222" stroke-width="1" stroke-dasharray="3.2 2.2"/>
<circle cx="640.3" cy="174.4" r="7" fill="none" stroke="#222" stroke-width="1" stroke-dasharray="3 2"/>
<rect x="638.5" y="172.6" width="3.6" height="3.6" fill="none" stroke="#222" stroke-width="0.9" transform="rotate(45 640.3 174.4)"/>
<circle cx="809" cy="178.6" r="65.3" fill="none" stroke="#1c1c1c" stroke-width="1"/>
<circle cx="809" cy="178.6" r="10.4" fill="none" stroke="#222" stroke-width="1" stroke-dasharray="3.2 2.2"/>
<circle cx="809" cy="178.6" r="7" fill="none" stroke="#222" stroke-width="1" stroke-dasharray="3 2"/>
<rect x="807.2" y="176.79999999999998" width="3.6" height="3.6" fill="none" stroke="#222" stroke-width="0.9" transform="rotate(45 809 178.6)"/>
<line x1="603.55" y1="329" x2="605.8" y2="408.8" stroke="#0a0a0a" stroke-width="5.4" stroke-linecap="butt"/>
<line x1="716.65" y1="313.5" x2="714.5" y2="390.8" stroke="#0a0a0a" stroke-width="5.4" stroke-linecap="butt"/>
<line x1="589.4" y1="330" x2="730" y2="311.3" stroke="#0a0a0a" stroke-width="6" stroke-linecap="round"/>
<g stroke="#111" stroke-width="1.1"><line x1="614" y1="348.5" x2="628.5" y2="346.3"/><line x1="638.6" y1="344.6" x2="653.5" y2="342.4"/><line x1="632.1" y1="327.3" x2="632.6" y2="340.5"/><line x1="634.3" y1="351.4" x2="636" y2="366.5"/></g>
<circle cx="633.6" cy="344.9" r="10.3" fill="none" stroke="#f2f2f2" stroke-width="1.5"/>
<circle cx="633.6" cy="344.9" r="10.3" fill="none" stroke="#e0354b" stroke-width="1.5" stroke-dasharray="4.05 4.04"/>
<line x1="889.9" y1="340" x2="880.9" y2="422.4" stroke="#0a0a0a" stroke-width="6.2" stroke-linecap="butt"/>
<line x1="976" y1="388" x2="961.5" y2="478" stroke="#0a0a0a" stroke-width="6.4" stroke-linecap="butt"/>
<line x1="882.4" y1="334.6" x2="988" y2="393" stroke="#0a0a0a" stroke-width="6.8" stroke-linecap="round"/>
<polygon points="895.6,445.8 914,421 932.4,438.4" fill="#000"/>
<polygon points="886.2,451.8 941.1,440.7 939.6,475.6 886.7,487.3" fill="none" stroke="#151515" stroke-width="0.8"/>
<line x1="886.2" y1="451.8" x2="975.1" y2="490.7" stroke="#151515" stroke-width="0.8"/>
<line x1="941.1" y1="440.7" x2="975.1" y2="490.7" stroke="#151515" stroke-width="0.8"/>
<line x1="939.6" y1="475.6" x2="975.1" y2="490.7" stroke="#151515" stroke-width="0.8"/>
<line x1="886.7" y1="487.3" x2="975.1" y2="490.7" stroke="#151515" stroke-width="0.8"/>
<path d="M1,52 H1321 V104.4 H1243 Q1238,104.4 1238,99.4 V79.3 H323 V99.4 Q323,104.4 318,104.4 H1 Z" fill="#303030" fill-opacity="0.9"/>
<rect x="10.2" y="56" width="31.3" height="18.6" rx="3.5" fill="#232323" />
<g stroke="#e0e0e0" stroke-width="1.2" fill="none"><path d="M16.5,64.2 H26 M15.5,69 H28.5 M20,61.5 L18.2,71.5 M26,66.5 L26.6,71.5"/></g><circle cx="25.3" cy="61.6" r="3.3" fill="#e0e0e0"/>
<path d="M32.6,64.6 L35.2,67.4 L37.800000000000004,64.6" fill="none" stroke="#dcdcdc" stroke-width="1.4" stroke-linecap="round" stroke-linejoin="round"/>
<rect x="48.4" y="56" width="113.2" height="18.6" rx="3.5" fill="#232323" />
<rect x="56.1" y="61.4" width="8.2" height="8.2" fill="#e0e0e0"/><path d="M52.9,61.6 V58.4 H56.1 M64.3,58.4 H67.5 V61.6 M67.5,69.4 V72.6 H64.3 M56.1,72.6 H52.9 V69.4" fill="none" stroke="#e0e0e0" stroke-width="1.1"/>
<text x="75.3" y="69.1" fill="#dcdcdc" font-size="12" text-anchor="start" >Object Mode</text>
<path d="M152.4,64.89999999999999 L155,67.7 L157.6,64.89999999999999" fill="none" stroke="#dcdcdc" stroke-width="1.4" stroke-linecap="round" stroke-linejoin="round"/>
<text x="175" y="69.1" fill="#dcdcdc" font-size="12" text-anchor="start" >View</text>
<text x="216.3" y="69.1" fill="#dcdcdc" font-size="12" text-anchor="start" >Select</text>
<text x="267.3" y="69.1" fill="#dcdcdc" font-size="12" text-anchor="start" >Add</text>
<text x="304" y="69.1" fill="#dcdcdc" font-size="12" text-anchor="start" >Object</text>
<text x="9.3" y="95.8" fill="#dcdcdc" font-size="12" text-anchor="start" >Orientation:</text>
<rect x="78.6" y="83" width="102" height="18.2" rx="3.5" fill="#232323" />
<g transform="translate(-0.7,-1.3)"><g stroke="#d8d8d8" stroke-width="1" fill="none" stroke-linecap="round"><path d="M88.5,86.5 V92.5 M86.7,88.3 L88.5,86.3 L90.3,88.3"/><path d="M91.5,95.8 H97 M95.2,94 L97.2,95.8 L95.2,97.6"/><path d="M86.6,97.8 L83.6,100.6 M83.4,98.6 V100.8 H85.6"/></g><circle cx="88.5" cy="95.8" r="1.9" fill="#e0e0e0"/></g>
<text x="105" y="95.8" fill="#dcdcdc" font-size="12" text-anchor="start" >Default</text>
<path d="M171.8,91.89999999999999 L174.4,94.7 L177.0,91.89999999999999" fill="none" stroke="#dcdcdc" stroke-width="1.4" stroke-linecap="round" stroke-linejoin="round"/>
<text x="195.6" y="95.8" fill="#dcdcdc" font-size="12" text-anchor="start" >Drag:</text>
<rect x="234.8" y="83" width="80.4" height="18.2" rx="3.5" fill="#232323" />
<text x="242.4" y="95.8" fill="#dcdcdc" font-size="12" text-anchor="start" >Select Box</text>
<path d="M306.2,91.89999999999999 L308.8,94.7 L311.40000000000003,91.89999999999999" fill="none" stroke="#dcdcdc" stroke-width="1.4" stroke-linecap="round" stroke-linejoin="round"/>
<rect x="532" y="56" width="78.6" height="18.6" rx="3.5" fill="#232323" />
<g stroke="#dcdcdc" stroke-width="1.1" fill="none" stroke-linecap="round" stroke-linejoin="round"><path d="M539.2,59 V69.4 L549.5,70.6 M537.3,61 L539.2,58.8 L541.1,61 M547.6,68.6 L549.8,70.6 L547.4,72.3 M539.6,69 L546.5,62.2 M544,62 H546.7 V64.7"/><circle cx="539" cy="70" r="1.6"/></g>
<text x="558.6" y="69.1" fill="#dcdcdc" font-size="12" text-anchor="start" >Global</text>
<path d="M602.1,64.89999999999999 L604.7,67.7 L607.3000000000001,64.89999999999999" fill="none" stroke="#dcdcdc" stroke-width="1.4" stroke-linecap="round" stroke-linejoin="round"/>
<rect x="618.3" y="56" width="30.8" height="18.6" rx="3.5" fill="#232323" />
<g stroke="#dcdcdc" stroke-width="1.2" fill="none"><circle cx="631.5" cy="62.8" r="4.3"/><circle cx="627.2" cy="68.5" r="4.3"/></g><circle cx="629.6" cy="65.4" r="1.7" fill="#fff"/>
<path d="M640.4,64.89999999999999 L643,67.7 L645.6,64.89999999999999" fill="none" stroke="#dcdcdc" stroke-width="1.4" stroke-linecap="round" stroke-linejoin="round"/>
<path d="M659.5,56 H675.6 V74.6 H659.5 Q656,74.6 656,71.1 V59.5 Q656,56 659.5,56Z" fill="#545454"/>
<path d="M675.6,56 H704.3 Q707.8,56 707.8,59.5 V71.1 Q707.8,74.6 704.3,74.6 H675.6Z" fill="#232323"/>
<path d="M660.3,64.4 L663.8,60.6 Q668.2,57.8 670.8,61.6 Q672.6,65.2 669.6,68.3 L666,71.8 L664,70 L667.6,66.4 Q669,64.4 667.8,62.9 Q666.4,61.7 664.8,62.9 L662,66Z" fill="none" stroke="#cfcfcf" stroke-width="1"/>
<g stroke="#dcdcdc" stroke-width="1.1" fill="none"><path d="M678.5,68.5 H692 M678.5,65.5 V71.5 M692,65 V71.5 M683,66.7 V70.3 M687.5,66.7 V70.3"/></g><rect x="689.6" y="58.6" width="3.8" height="3.8" fill="#e6e6e6"/>
<path d="M699.4,64.89999999999999 L702,67.7 L704.6,64.89999999999999" fill="none" stroke="#dcdcdc" stroke-width="1.4" stroke-linecap="round" stroke-linejoin="round"/>
<path d="M718.3,56 H734.4 V74.6 H718.3 Q714.8,74.6 714.8,71.1 V59.5 Q714.8,56 718.3,56Z" fill="#545454"/>
<path d="M734.4,56 H763.5 Q767,56 767,59.5 V71.1 Q767,74.6 763.5,74.6 H734.4Z" fill="#232323"/>
<circle cx="724.6" cy="65.4" r="6.2" fill="none" stroke="#8e8e8e" stroke-width="1"/><circle cx="724.6" cy="65.4" r="2.2" fill="#e8e8e8"/>
<path d="M739.4,71 C744,70.6 744.2,59.6 746.9,59.6 C749.6,59.6 749.8,70.6 754.4,71" fill="none" stroke="#b5b5b5" stroke-width="1.1"/>
<path d="M758.4,64.89999999999999 L761,67.7 L763.6,64.89999999999999" fill="none" stroke="#6a6a6a" stroke-width="1.4" stroke-linecap="round" stroke-linejoin="round"/>
<rect x="1055" y="56" width="31.6" height="18.6" rx="3.5" fill="#232323" />
<path d="M1060.4,61.8 Q1066.6,56 1072.6,61.8 Q1066.6,67.4 1060.4,61.8Z" fill="#e6e6e6"/><circle cx="1066.5" cy="61.6" r="2.2" fill="#272727"/><circle cx="1066.5" cy="61.6" r="0.9" fill="#e6e6e6"/><path d="M1058.6,64.2 L1065.8,67 L1062.3,68.4 L1060.6,72Z" fill="#e6e6e6" stroke="#272727" stroke-width="0.6"/>
<path d="M1078.0,64.89999999999999 L1080.6,67.7 L1083.1999999999998,64.89999999999999" fill="none" stroke="#dcdcdc" stroke-width="1.4" stroke-linecap="round" stroke-linejoin="round"/>
<path d="M1096.5,56 H1113 V74.6 H1096.5 Q1093,74.6 1093,71.1 V59.5 Q1093,56 1096.5,56Z" fill="#4772b3"/>
<path d="M1113,56 H1129 Q1132.5,56 1132.5,59.5 V71.1 Q1132.5,74.6 1129,74.6 H1113Z" fill="#232323"/>
<g stroke="#fff" stroke-width="1.1" fill="none" stroke-linecap="round"><path d="M1097.5,60.2 C1104,60.4 1108.6,64.6 1108.8,72"/><path d="M1098.6,70.2 L1109.3,59.2 M1105.6,59 H1109.5 V62.9"/><circle cx="1097.8" cy="71" r="1.5"/></g>
<path d="M1120.4,64.89999999999999 L1123,67.7 L1125.6,64.89999999999999" fill="none" stroke="#dcdcdc" stroke-width="1.4" stroke-linecap="round" stroke-linejoin="round"/>
<path d="M1143.3,56 H1159.7 V74.6 H1143.3 Q1139.8,74.6 1139.8,71.1 V59.5 Q1139.8,56 1143.3,56Z" fill="#4772b3"/>
<path d="M1159.7,56 H1176.3 Q1179.8,56 1179.8,59.5 V71.1 Q1179.8,74.6 1176.3,74.6 H1159.7Z" fill="#232323"/>
<circle cx="1152.2" cy="63.2" r="4.8" fill="#fff"/><circle cx="1148.4" cy="67.2" r="4.6" fill="none" stroke="#fff" stroke-width="1.2"/><circle cx="1148.4" cy="67.2" r="3.2" fill="#4772b3" fill-opacity="0.55"/>
<path d="M1167.0,64.89999999999999 L1169.6,67.7 L1172.1999999999998,64.89999999999999" fill="none" stroke="#dcdcdc" stroke-width="1.4" stroke-linecap="round" stroke-linejoin="round"/>
<rect x="1186.8" y="56" width="19" height="18.6" rx="3.5" fill="#545454" />
<g stroke="#cfcfcf" stroke-width="1.1" fill="none"><rect x="1190" y="61.6" width="9.6" height="9.6"/><path d="M1193,61.4 V58.8 H1202.6 V68.4 H1199.8"/></g><path d="M1193.6,65 V68 H1196.6" stroke="#9a9a9a" stroke-width="0.8" fill="none" stroke-dasharray="1.2 1"/>
<path d="M1215.5,56 H1232 V74.6 H1215.5 Q1212,74.6 1212,71.1 V59.5 Q1212,56 1215.5,56Z" fill="#545454"/>
<rect x="1232" y="56" width="20" height="18.6" rx="0" fill="#4772b3" />
<rect x="1252" y="56" width="19.7" height="18.6" rx="0" fill="#545454" />
<rect x="1272" y="56" width="20" height="18.6" rx="0" fill="#545454" />
<path d="M1292,56 H1308.5 Q1312,56 1312,59.5 V71.1 Q1312,74.6 1308.5,74.6 H1292Z" fill="#232323"/>
<g stroke="#c8c8c8" stroke-width="1" fill="none"><circle cx="1222" cy="65.3" r="6.4"/><path d="M1215.6,65.3 H1228.4 M1222,58.9 V71.7"/></g>
<circle cx="1242" cy="65.3" r="6.6" fill="#fff"/>
<circle cx="1262" cy="65.3" r="6.3" fill="none" stroke="#cfcfcf" stroke-width="1"/><path d="M1262,59 A6.3,6.3 0 0 0 1262,71.6 A6.3,6.3 0 0 0 1268.3,65.3 L1262,65.3Z" fill="#c4c4c4"/>
<circle cx="1282" cy="65.3" r="6.3" fill="none" stroke="#cfcfcf" stroke-width="1"/><path d="M1277.4,64 A4.8,4.8 0 0 1 1281,60.4" stroke="#e8e8e8" stroke-width="1.2" fill="none"/><path d="M1276.6,68.5 A6.3,6.3 0 0 0 1287.4,68.5 A8,8 0 0 1 1276.6,68.5Z" fill="#9a9a9a"/>
<path d="M1299.4,64.89999999999999 L1302,67.7 L1304.6,64.89999999999999" fill="none" stroke="#dcdcdc" stroke-width="1.4" stroke-linecap="round" stroke-linejoin="round"/>
<rect x="1247" y="83.3" width="65.8" height="17.6" rx="3.5" fill="#232323" />
<text x="1254.6" y="95.8" fill="#dcdcdc" font-size="12" text-anchor="start" >Options</text>
<path d="M1304.4,91.89999999999999 L1307,94.7 L1309.6,91.89999999999999" fill="none" stroke="#dcdcdc" stroke-width="1.4" stroke-linecap="round" stroke-linejoin="round"/>
<rect x="9.2" y="114.2" width="40" height="69.2" rx="4" fill="#272727" fill-opacity="0.95"/><line x1="9.2" y1="148.5" x2="49.2" y2="148.5" stroke="#303030" stroke-width="1"/>
<rect x="9.2" y="190.8" width="40" height="141.2" rx="4" fill="#272727" fill-opacity="0.95"/><line x1="9.2" y1="225.6" x2="49.2" y2="225.6" stroke="#303030" stroke-width="1"/><line x1="9.2" y1="261" x2="49.2" y2="261" stroke="#303030" stroke-width="1"/><line x1="9.2" y1="296.6" x2="49.2" y2="296.6" stroke="#303030" stroke-width="1"/>
<path d="M9.2,296.6 H49.2 V328 Q49.2,332 45.2,332 H13.2 Q9.2,332 9.2,328Z" fill="#4772b3"/>
<rect x="9.2" y="339.6" width="40" height="69.19999999999999" rx="4" fill="#272727" fill-opacity="0.95"/><line x1="9.2" y1="374" x2="49.2" y2="374" stroke="#303030" stroke-width="1"/>
<rect x="9.2" y="416.3" width="40" height="33.69999999999999" rx="4" fill="#272727" fill-opacity="0.95"/>
<path d="M47.2,143.3 V146.7 H43.8Z" fill="#8a8a8a"/>
<path d="M47.2,291.40000000000003 V294.8 H43.8Z" fill="#8a8a8a"/>
<path d="M47.2,368.8 V372.2 H43.8Z" fill="#8a8a8a"/>
<path d="M47.2,444.8 V448.2 H43.8Z" fill="#8a8a8a"/>
<rect x="18" y="120" width="22.6" height="21.8" fill="none" stroke="#c9a45c" stroke-width="1.5" stroke-dasharray="4.6 2.6" rx="1"/>
<path d="M26.2,124.6 L34.8,132.5 L30.3,133 L28.5,137.3 Z" fill="#ececec"/>
<circle cx="29.2" cy="166.7" r="11.4" fill="none" stroke="#f0f0f0" stroke-width="1.5"/><circle cx="29.2" cy="166.7" r="11.4" fill="none" stroke="#c23346" stroke-width="1.5" stroke-dasharray="4.48 4.47"/>
<g stroke="#b9b9b9" stroke-width="1.3"><path d="M29.2,158.6 V163.6 M29.2,169.8 V174.8 M21.1,166.7 H26.1 M32.3,166.7 H37.3"/></g>
<g fill="#e6e6e6"><path d="M29.2,195.4 l3.2,4.4 h-6.4Z M29.2,219.79999999999998 l3.2,-4.4 h-6.4Z M17.0,207.6 l4.4,-3.2 v6.4Z M41.4,207.6 l-4.4,-3.2 v6.4Z"/></g><g stroke="#e6e6e6" stroke-width="1.6"><path d="M29.2,200.1 V203.79999999999998 M29.2,211.4 V215.1 M21.7,207.6 H25.4 M33.0,207.6 H36.7"/></g>
<g fill="none" stroke="#e0e0e0" stroke-width="1.4"><path d="M20.2,240.4 A9.5,9.5 0 0 1 37.8,239.4"/><path d="M38.2,246.4 A9.5,9.5 0 0 1 20.6,247.4"/></g><path d="M29.2,239.8 L32.8,243.4 L29.2,247.0 L25.599999999999998,243.4Z" fill="#c9c9c9"/><path d="M38.6,240.20000000000002 l3,4.6 h-6Z M19.799999999999997,246.6 l3,-4.6 h-6Z" fill="#e6e6e6"/>
<rect x="19.6" y="278.8" width="9.6" height="9.6" fill="#e6e6e6"/><path d="M25,271.2 H37.2 V288.2 H32.4 M19.8,276 V271.2" fill="none" stroke="#bdbdbd" stroke-width="1.2"/><path d="M30.2,278 L35,273.2 M32,273 H35.2 V276.2" stroke="#e6e6e6" stroke-width="1.4" fill="none"/>
<circle cx="29.2" cy="314.4" r="10.6" fill="none" stroke="#fff" stroke-width="1.3" stroke-dasharray="9.6 7.05" stroke-dashoffset="-3.6"/><rect x="24.9" y="310.09999999999997" width="8.6" height="8.6" fill="#f2f2f2"/><path d="M29.2,302.59999999999997 l3,3.6 h-6Z M29.2,326.2 l3,-3.6 h-6Z M17.4,314.4 l3.6,-3 v6Z M41.0,314.4 l-3.6,-3 v6Z" fill="#fff"/>
<path d="M17.6,361.4 L30.6,347.6 Q32.4,346 34,347.4 Q35.6,349 34,350.8 L21,364.2 L16.8,365.4Z" fill="#ececec"/><path d="M17,366.6 C23,370.6 27.5,361 32.5,358.6 C37,356.6 39.5,360 41.5,363" fill="none" stroke="#8fd3aa" stroke-width="1.3"/>
<path d="M26.6,400.2 V390.4 A10.2,10.2 0 0 1 38.4,400.2Z" fill="#8fdcb0"/><path d="M26.6,390.4 A10.2,10.2 0 0 1 38.6,400.2" fill="none" stroke="#dff5e8" stroke-width="1"/><rect x="21.4" y="380.4" width="3.6" height="22.6" fill="#e6e6e6"/><rect x="21.4" y="400.4" width="19.4" height="3" fill="#e6e6e6"/>
<g fill="none" stroke="#a9dcc0" stroke-width="1.2" stroke-linejoin="round"><rect x="22.8" y="430.8" width="12.6" height="12.6"/><path d="M22.8,430.8 L27.6,426.2 H40.2 L35.4,430.8 M40.2,426.2 V438.6 L35.4,443.4"/></g><path d="M16.4,423.4 H23.6 M20,419.8 V427" stroke="#5fd39a" stroke-width="1.8"/>
<text x="67.6" y="126.2" fill="#f0f0f0" font-size="12.4" text-anchor="start" style="text-shadow:0 0 2px #000">User Perspective</text>
<text x="67.6" y="144" fill="#f0f0f0" font-size="12.4" text-anchor="start" style="text-shadow:0 0 2px #000">(0) Collection | Cube</text>
<line x1="1269" y1="156.7" x2="1269" y2="134" stroke="#3a8be0" stroke-width="2"/>
<line x1="1269" y1="156.7" x2="1292.5" y2="152.6" stroke="#6fa81e" stroke-width="2"/>
<line x1="1269" y1="156.7" x2="1276" y2="163.6" stroke="#e8384f" stroke-width="2"/>
<circle cx="1256.2" cy="143.4" r="7.3" fill="#8c3a46" fill-opacity="0.15" stroke="#a84555" stroke-width="1.4"/>
<circle cx="1238.3" cy="161.8" r="8" fill="#6a8c2a" fill-opacity="0.85" stroke="#9ccb3c" stroke-width="1.5"/>
<circle cx="1269" cy="186.8" r="7.5" fill="#2f5f9a" fill-opacity="0.4" stroke="#4078c6" stroke-width="1.5"/>
<circle cx="1269" cy="126.3" r="8.4" fill="#2f8bf2"/><text x="1269" y="130.3" fill="#0c2a5c" font-size="11" text-anchor="middle" font-weight="bold">Z</text>
<circle cx="1300.1" cy="151.1" r="8.4" fill="#72ac1c"/><text x="1300.1" y="155.1" fill="#1d3a05" font-size="11" text-anchor="middle" font-weight="bold">Y</text>
<circle cx="1281.8" cy="169.5" r="8.8" fill="#f5384f"/><text x="1281.8" y="173.5" fill="#5a0714" font-size="11" text-anchor="middle" font-weight="bold">X</text>
<path d="M1316,119 H1321 V136 H1316 Q1312.5,136 1312.5,132.5 V122.5 Q1312.5,119 1316,119Z" fill="#2a2a2a" fill-opacity="0.8"/><path d="M1319,123.5 L1315.6,127.4 L1319,131.3" fill="none" stroke="#aaa" stroke-width="1.2"/>
<circle cx="1297.6" cy="213.7" r="13.6" fill="#2b2b2b" fill-opacity="0.9"/>
<circle cx="1297.6" cy="245" r="13.6" fill="#2b2b2b" fill-opacity="0.9"/>
<circle cx="1297.6" cy="276.2" r="13.6" fill="#2b2b2b" fill-opacity="0.9"/>
<circle cx="1297.6" cy="307" r="13.6" fill="#2b2b2b" fill-opacity="0.9"/>
<circle cx="1299.4" cy="211.6" r="6" fill="#e8e8e8"/><path d="M1296.4,211.6 H1302.4 M1299.4,208.6 V214.6" stroke="#2b2b2b" stroke-width="1.1"/><path d="M1295,216.4 L1290.2,221.2" stroke="#e8e8e8" stroke-width="2.2" stroke-linecap="round"/>
<path d="M1291.2,246.2 L1294.2,250.8 Q1296,253.2 1299,253.2 Q1303.6,253.2 1304.4,248.6 L1305.2,242 Q1305.2,240.6 1304,240.8 L1303.2,244 L1302.8,238.6 Q1302,237.4 1301,238.6 L1300.6,243.4 L1300,237.6 Q1299,236.4 1298,237.6 L1297.8,243.4 L1296.6,238.8 Q1295.6,237.8 1294.8,239 L1295.6,247.4 L1293,244.8 Q1291.4,244.4 1291.2,246.2Z" fill="#ececec"/>
<g fill="none" stroke="#e8e8e8" stroke-width="1.3"><circle cx="1294.6" cy="271.6" r="2.7"/><circle cx="1300.8" cy="270.8" r="3.4"/><rect x="1292.6" y="277" width="8.4" height="5.6"/></g><path d="M1302.4,279.8 L1305.8,277.4 V282.2Z" fill="#e8e8e8"/><path d="M1290.2,277.4 V280" stroke="#e8e8e8" stroke-width="1.2"/>
<g fill="none" stroke="#e8e8e8" stroke-width="1.3"><path d="M1293.4,300.6 H1301.8 L1305.2,313 H1290Z"/><path d="M1297.6,300.6 V313 M1292.4,304.4 H1302.8 M1291.2,308.4 H1304"/></g>
</svg></div>
<div class="reg" id="topbar" style="left:0;top:0;width:1600px;height:52px"><svg width="1600" height="52" viewBox="0 0 1600 52"><rect x="0" y="0" width="1600" height="24.5" rx="0" fill="#201c19" />
<g transform="translate(12.4,12.5) scale(0.65)"><g stroke="#f08a1e" fill="none" stroke-linecap="round"><path d="M-5,-10.2 L2.4,-5" stroke-width="2.7"/><path d="M-10.8,-5.4 H0" stroke-width="2.9"/><path d="M-14,3.6 L-4.6,-3.8" stroke-width="3.1"/></g><path d="M-9,-4.2 L-1,-6.6 L-6,3Z" fill="#f08a1e"/><circle cx="0" cy="0.2" r="8" fill="#f08a1e"/><ellipse cx="-0.2" cy="0" rx="5.2" ry="4.7" fill="#fff"/><circle cx="-0.2" cy="0" r="2.9" fill="#1f5fa8"/></g>
<text x="23" y="16.4" fill="#f2f2f2" font-size="12.43" text-anchor="start" >* clothingrack [C:\Users\Alex\Desktop\Blender stuff\clothingrack.blend] - Blender 4.2.2 LTS</text>
<g stroke="#f0f0f0" stroke-width="1" fill="none"><path d="M1471,11.5 H1481"/><rect x="1519.5" y="8.5" width="7.5" height="7.5" rx="1.6"/><path d="M1521.5,8.4 V8 Q1521.5,6.5 1523,6.5 H1527.5 Q1529.5,6.5 1529.5,8.5 V13 Q1529.5,14.4 1528,14.5 H1527.2"/><path d="M1568.5,6.5 L1578.5,16.5 M1578.5,6.5 L1568.5,16.5" stroke-width="1.1"/></g>
<rect x="0" y="24.5" width="1600" height="27" rx="0" fill="#181818" />
<g transform="translate(19.9,39.2) scale(0.76)"><g stroke="#e6e6e6" fill="none" stroke-linecap="round" stroke-linejoin="round"><circle cx="0" cy="0.2" r="6.6" stroke-width="2.7"/><path d="M-5,-10 L2,-5.2" stroke-width="2.5"/><path d="M-10.6,-5.6 H-1" stroke-width="2.5"/><path d="M-11.2,2.6 L-5.6,-2.6" stroke-width="2.7"/></g><circle cx="0" cy="0.2" r="2.3" fill="#e6e6e6"/></g>
<text x="36.6" y="41.7" fill="#e2e2e2" font-size="12" text-anchor="start" >File</text>
<text x="71.6" y="41.7" fill="#e2e2e2" font-size="12" text-anchor="start" >Edit</text>
<text x="107" y="41.7" fill="#e2e2e2" font-size="12" text-anchor="start" >Render</text>
<text x="161.4" y="41.7" fill="#e2e2e2" font-size="12" text-anchor="start" >Window</text>
<text x="220.2" y="41.7" fill="#e2e2e2" font-size="12" text-anchor="start" >Help</text>
<path d="M270.8,51.5 V34 Q270.8,30 274.8,30 H323.6 Q327.6,30 327.6,34 V51.5Z" fill="#303030"/>
<text x="280" y="44" fill="#e6e6e6" font-size="12" text-anchor="start" >Layout</text>
<text x="338.5" y="44" fill="#999999" font-size="12" text-anchor="start" >Modeling</text>
<text x="408.4" y="44" fill="#999999" font-size="12" text-anchor="start" >Sculpting</text>
<text x="480" y="44" fill="#999999" font-size="12" text-anchor="start" >UV Editing</text>
<text x="556" y="44" fill="#999999" font-size="12" text-anchor="start" >Texture Paint</text>
<text x="650" y="44" fill="#999999" font-size="12" text-anchor="start" >Shading</text>
<text x="714.4" y="44" fill="#999999" font-size="12" text-anchor="start" >Animation</text>
<text x="788.2" y="44" fill="#999999" font-size="12" text-anchor="start" >Rendering</text>
<text x="863.4" y="44" fill="#999999" font-size="12" text-anchor="start" >Compositing</text>
<text x="951" y="44" fill="#999999" font-size="12" text-anchor="start" >Geometry Nodes</text>
<text x="1062.4" y="44" fill="#999999" font-size="12" text-anchor="start" >Scripting</text>
<path d="M1126.6,40 H1135.6 M1131.1,35.5 V44.5" stroke="#a0a0a0" stroke-width="1.2"/>
<rect x="1250" y="27.5" width="178.5999999999999" height="19.8" rx="3.5" fill="#282828" /><rect x="1283" y="27.5" width="104.40000000000009" height="19.8" rx="0" fill="#1d1d1d" /><rect x="1387.4" y="27.5" width="20.199999999999818" height="19.8" rx="0" fill="#4f4f4f" /><rect x="1250" y="27.5" width="178.5999999999999" height="19.8" rx="3.5" fill="none" stroke="#3a3a3a" stroke-width="1"/><text x="1291.3" y="41.7" fill="#e0e0e0" font-size="12" text-anchor="start" >Scene</text><g stroke="#dcdcdc" stroke-width="1.1" fill="none"><path d="M1393.9,33.4 V31.2 H1400.5 L1403.9,34.6 V41.6 H1400.1"/><path d="M1391.5,33.6 H1399.9 V43.6 H1391.5Z" fill="#4f4f4f"/></g><path d="M1414.6999999999998,34 L1421.5,40.8 M1421.5,34 L1414.6999999999998,40.8" stroke="#5e5e5e" stroke-width="1.2"/>
<path d="M1255.6,41.8 L1259.6,31.6 Q1260.6,30.4 1261.6,31.6 L1264.4,38.6 Q1262,40 1262,42.6 L1256.4,42.6Z" fill="#d8d8d8"/><circle cx="1267.2" cy="32.8" r="2.1" fill="#d8d8d8"/><circle cx="1267" cy="41.2" r="3.4" fill="none" stroke="#d8d8d8" stroke-width="1.2"/>
<path d="M1274.0,37.2 L1276.6,40.0 L1279.1999999999998,37.2" fill="none" stroke="#dcdcdc" stroke-width="1.4" stroke-linecap="round" stroke-linejoin="round"/>
<g transform="translate(1376,37.6) rotate(40)" stroke="#8a8a8a" stroke-width="1.1" fill="none"><path d="M-2.4,-7 H2.4 M-1.7,-7 V-2.4 L-3.6,0.4 H3.6 L1.7,-2.4 V-7 M0,0.4 V7"/></g>
<rect x="1434.6" y="27.5" width="156.9000000000001" height="19.8" rx="3.5" fill="#282828" /><rect x="1467" y="27.5" width="83.5" height="19.8" rx="0" fill="#1d1d1d" /><rect x="1550.5" y="27.5" width="20.299999999999955" height="19.8" rx="0" fill="#4f4f4f" /><rect x="1434.6" y="27.5" width="156.9000000000001" height="19.8" rx="3.5" fill="none" stroke="#3a3a3a" stroke-width="1"/><text x="1475.3" y="41.7" fill="#e0e0e0" font-size="12" text-anchor="start" >ViewLayer</text><g stroke="#dcdcdc" stroke-width="1.1" fill="none"><path d="M1557.0500000000002,33.4 V31.2 H1563.65 L1567.0500000000002,34.6 V41.6 H1563.25"/><path d="M1554.65,33.6 H1563.0500000000002 V43.6 H1554.65Z" fill="#4f4f4f"/></g><path d="M1577.75,34 L1584.5500000000002,40.8 M1584.5500000000002,34 L1577.75,40.8" stroke="#5e5e5e" stroke-width="1.2"/>
<g stroke="#d8d8d8" stroke-width="1.1" fill="none"><path d="M1440.4,35 V44 H1450.4"/><path d="M1442.6,33 V41.8 H1452.6"/></g><rect x="1444.8" y="31" width="10.4" height="9" fill="#d8d8d8"/><path d="M1446,38.8 L1449,35 L1451,37.2 L1452.4,36 L1454.2,38.8Z" fill="#282828"/><circle cx="1452.6" cy="33.4" r="1" fill="#282828"/>
<path d="M1458.0,37.2 L1460.6,40.0 L1463.1999999999998,37.2" fill="none" stroke="#dcdcdc" stroke-width="1.4" stroke-linecap="round" stroke-linejoin="round"/></svg></div>
<div class="reg" id="outliner" style="left:1323px;top:52px;width:275px;height:256px;border-radius:5px;background:#282828"><svg width="275" height="256" viewBox="1323 52 275 256"><rect x="1323" y="52" width="275" height="256" rx="0" fill="#282828" />
<rect x="1323" y="106.89999999999999" width="275" height="20.85" rx="0" fill="#2b2b2b" />
<rect x="1323" y="148.6" width="275" height="20.85" rx="0" fill="#2b2b2b" />
<rect x="1323" y="190.2" width="275" height="20.85" rx="0" fill="#2b2b2b" />
<rect x="1323" y="231.9" width="275" height="20.85" rx="0" fill="#2b2b2b" />
<rect x="1323" y="273.6" width="275" height="20.85" rx="0" fill="#2b2b2b" />
<line x1="1353.4" y1="109" x2="1353.4" y2="308" stroke="#4a4a4a" stroke-width="1"/>
<rect x="1348" y="68.60000000000001" width="14" height="4.4" fill="#d8d8d8"/><rect x="1349" y="74.0" width="12" height="8" fill="#d8d8d8"/><rect x="1353" y="76.0" width="4" height="1.4" fill="#282828"/>
<text x="1369.6" y="79.8" fill="#cdcdcd" font-size="12" text-anchor="start" >Scene Collection</text>
<path d="M1350.3,95.10000000000001 L1353.8,98.7 L1357.3,95.10000000000001" fill="none" stroke="#bdbdbd" stroke-width="1.3" stroke-linecap="round" stroke-linejoin="round"/>
<rect x="1365.3999999999999" y="86.4" width="20.4" height="20" rx="4" fill="#4d4d4d" />
<rect x="1368.6" y="89.80000000000001" width="14" height="4.4" fill="#e6e6e6"/><rect x="1369.6" y="95.2" width="12" height="8" fill="#e6e6e6"/><rect x="1373.6" y="97.2" width="4" height="1.4" fill="#4d4d4d"/>
<text x="1390.4" y="100.7" fill="#cdcdcd" font-size="12.3" text-anchor="start" >Collection</text>
<rect x="1532.2" y="90.2" width="11" height="11" rx="1.8" fill="#e6e6e6"/><path d="M1534.6,95.60000000000001 L1537,98.4 L1541.2,93.2" fill="none" stroke="#1a1a1a" stroke-width="1.6"/>
<path d="M1371.3,116.0 L1374.8,119.6 L1378.3,116.0" fill="none" stroke="#bdbdbd" stroke-width="1.3" stroke-linecap="round" stroke-linejoin="round"/>
<circle cx="1392.6" cy="113.7" r="2.9" fill="#e0904a"/><circle cx="1398.6" cy="113.1" r="3.6" fill="#e0904a"/><circle cx="1392.6" cy="113.7" r="1" fill="#282828"/><circle cx="1398.6" cy="113.1" r="1.3" fill="#282828"/><rect x="1390.6" y="116.7" width="9.4" height="6.6" rx="1" fill="#e0904a"/><path d="M1400.6,119.89999999999999 L1404,117.3 V123.3Z" fill="#e0904a"/><rect x="1388.4" y="117.89999999999999" width="1.6" height="3" fill="#e0904a"/>
<text x="1411" y="121.6" fill="#cdcdcd" font-size="12.3" text-anchor="start" >Camera</text>
<rect x="1406.8" y="128.1" width="20.4" height="20" rx="4" fill="#474747" />
<g fill="none" stroke="#2fc08e" stroke-width="1.2"><circle cx="1413.6" cy="134.7" r="2.6"/><circle cx="1419.8" cy="134.1" r="3.3"/><rect x="1412.2" y="138.5" width="8" height="5.4" rx="0.8"/><path d="M1410,138.7 V141.5"/></g><path d="M1421.8,141.1 L1424.8,138.9 V143.5Z" fill="#2fc08e"/>
<text x="1431.8" y="142.4" fill="#cdcdcd" font-size="12.3" text-anchor="start" >Camera</text>
<path d="M1373.85,155.5 L1377.35,159 L1373.85,162.5" fill="none" stroke="#c8c8c8" stroke-width="1.3" stroke-linecap="round" stroke-linejoin="round"/>
<rect x="1385.8" y="149" width="20.4" height="20" rx="4" fill="#565656" />
<path d="M1390,153.4 H1402 L1396,165.4Z" fill="none" stroke="#e0904a" stroke-width="2.7" stroke-linejoin="round"/>
<text x="1411" y="163.3" fill="#dedede" font-size="12.3" text-anchor="start" >Cube</text>
<g fill="none" stroke="#2fc08e" stroke-width="1.2"><path d="M1466.3999999999999,154.4 H1474.8 M1465.3999999999999,156 L1469.6,163.2 M1475.8,156 L1471.6,163.2"/><rect x="1463.6" y="152.4" width="3.2" height="3.2" rx="0.8"/><rect x="1474.3999999999999" y="152.4" width="3.2" height="3.2" rx="0.8"/><rect x="1469.0" y="162.6" width="3.2" height="3.2" rx="0.8"/></g>
<path d="M1373.85,176.3 L1377.35,179.8 L1373.85,183.3" fill="none" stroke="#c8c8c8" stroke-width="1.3" stroke-linecap="round" stroke-linejoin="round"/>
<path d="M1390,174.20000000000002 H1402 L1396,186.20000000000002Z" fill="none" stroke="#e0904a" stroke-width="2.7" stroke-linejoin="round"/>
<text x="1411" y="184.10000000000002" fill="#cdcdcd" font-size="12.3" text-anchor="start" >Cylinder.001</text>
<path d="M1513.8,173.20000000000002 Q1517.1999999999998,172.4 1519.3999999999999,175.20000000000002 L1516.0,177.20000000000002 L1516.8,179.60000000000002 L1520.0,178.20000000000002 Q1519.8,182.20000000000002 1516.0,182.8 Q1514.3999999999999,182.8 1513.1999999999998,182.20000000000002 L1509.0,186.4 Q1507.0,187.4 1505.8,185.8 Q1504.8,184.0 1506.3999999999999,182.60000000000002 L1510.8,179.20000000000002 Q1509.6,175.20000000000002 1513.8,173.20000000000002Z" fill="none" stroke="#6d8fe0" stroke-width="1.3" stroke-linejoin="round"/>
<path d="M1371.3,199.29999999999998 L1374.8,202.9 L1378.3,199.29999999999998" fill="none" stroke="#bdbdbd" stroke-width="1.3" stroke-linecap="round" stroke-linejoin="round"/>
<path d="M1390,195.0 H1402 L1396,207.0Z" fill="none" stroke="#e0904a" stroke-width="2.7" stroke-linejoin="round"/>
<text x="1411" y="204.9" fill="#cdcdcd" font-size="12.3" text-anchor="start" >Cylinder.002</text>
<path d="M1395.05,218.0 L1398.55,221.5 L1395.05,225.0" fill="none" stroke="#c8c8c8" stroke-width="1.3" stroke-linecap="round" stroke-linejoin="round"/>
<g fill="none" stroke="#2fc08e" stroke-width="1.2"><path d="M1412.6,216.9 H1421.0 M1411.6,218.5 L1415.8,225.7 M1422.0,218.5 L1417.8,225.7"/><rect x="1409.8" y="214.9" width="3.2" height="3.2" rx="0.8"/><rect x="1420.6" y="214.9" width="3.2" height="3.2" rx="0.8"/><rect x="1415.2" y="225.1" width="3.2" height="3.2" rx="0.8"/></g>
<text x="1431.8" y="225.8" fill="#cdcdcd" font-size="12.3" text-anchor="start" >Cylinder.002</text>
<path d="M1395.05,238.8 L1398.55,242.3 L1395.05,245.8" fill="none" stroke="#c8c8c8" stroke-width="1.3" stroke-linecap="round" stroke-linejoin="round"/>
<path d="M1418.0,235.70000000000002 Q1421.3999999999999,234.9 1423.6,237.70000000000002 L1420.2,239.70000000000002 L1421.0,242.10000000000002 L1424.2,240.70000000000002 Q1424.0,244.70000000000002 1420.2,245.3 Q1418.6,245.3 1417.3999999999999,244.70000000000002 L1413.2,248.9 Q1411.2,249.9 1410.0,248.3 Q1409.0,246.5 1410.6,245.10000000000002 L1415.0,241.70000000000002 Q1413.8,237.70000000000002 1418.0,235.70000000000002Z" fill="none" stroke="#6d8fe0" stroke-width="1.3" stroke-linejoin="round"/>
<text x="1431.8" y="246.60000000000002" fill="#cdcdcd" font-size="12.3" text-anchor="start" >Modifiers</text>
<rect x="1502.2" y="232.3" width="20.4" height="20" rx="4" fill="#555" />
<circle cx="1516" cy="245.3" r="3.5" fill="#6d8fe0"/><circle cx="1508.4" cy="242.5" r="2.6" fill="#6d8fe0"/><circle cx="1511.6" cy="237.10000000000002" r="1.6" fill="#5b78bd"/><circle cx="1506.6" cy="236.70000000000002" r="1.3" fill="#5b78bd"/>
<path d="M1373.85,259.6 L1377.35,263.1 L1373.85,266.6" fill="none" stroke="#c8c8c8" stroke-width="1.3" stroke-linecap="round" stroke-linejoin="round"/>
<path d="M1389.6,261.1 A6.4,6.4 0 1 1 1402.4,261.1 Q1402.2,264.70000000000005 1399.6,266.70000000000005 H1392.4 Q1389.8,264.70000000000005 1389.6,261.1Z" fill="#e0904a"/><path d="M1392.8,259.5 L1394,261.5 H1398 L1399.2,259.5 M1394,261.5 V264.1 M1398,261.5 V264.1" stroke="#282828" stroke-width="1" fill="none"/><path d="M1393,268.5 H1399 M1394,270.5 H1398" stroke="#e0904a" stroke-width="1.3"/>
<text x="1411" y="267.40000000000003" fill="#cdcdcd" font-size="12.3" text-anchor="start" >Light</text>
<path d="M1465.2,267.5 A6.6,6.6 0 1 1 1471.6000000000001,267.5" fill="none" stroke="#2fc08e" stroke-width="1.2"/><circle cx="1468.4" cy="261.3" r="1.7" fill="#2fc08e"/><path d="M1468.4,263.90000000000003 V267.1 M1468.4,268.5 V270.1" stroke="#2fc08e" stroke-width="1.3"/>
<path d="M1373.85,280.5 L1377.35,284 L1373.85,287.5" fill="none" stroke="#c8c8c8" stroke-width="1.3" stroke-linecap="round" stroke-linejoin="round"/>
<path d="M1389.6,282 A6.4,6.4 0 1 1 1402.4,282 Q1402.2,285.6 1399.6,287.6 H1392.4 Q1389.8,285.6 1389.6,282Z" fill="#e0904a"/><path d="M1392.8,280.4 L1394,282.4 H1398 L1399.2,280.4 M1394,282.4 V285 M1398,282.4 V285" stroke="#282828" stroke-width="1" fill="none"/><path d="M1393,289.4 H1399 M1394,291.4 H1398" stroke="#e0904a" stroke-width="1.3"/>
<text x="1411" y="288.3" fill="#cdcdcd" font-size="12.3" text-anchor="start" >Light.001</text>
<path d="M1490.8,288.4 A6.6,6.6 0 1 1 1497.2,288.4" fill="none" stroke="#2fc08e" stroke-width="1.2"/><circle cx="1494" cy="282.2" r="1.7" fill="#2fc08e"/><path d="M1494,284.8 V288 M1494,289.4 V291" stroke="#2fc08e" stroke-width="1.3"/>
<path d="M1373.85,301.3 L1377.35,304.8 L1373.85,308.3" fill="none" stroke="#c8c8c8" stroke-width="1.3" stroke-linecap="round" stroke-linejoin="round"/>
<path d="M1390,299.2 H1402 L1396,311.2Z" fill="none" stroke="#e0904a" stroke-width="2.7" stroke-linejoin="round"/>
<text x="1411" y="309.1" fill="#cdcdcd" font-size="12.3" text-anchor="start" >Plane.001</text>
<g fill="none" stroke="#2fc08e" stroke-width="1.2"><path d="M1494.8,300.2 H1503.2 M1493.8,301.8 L1498,309.0 M1504.2,301.8 L1500,309.0"/><rect x="1492" y="298.2" width="3.2" height="3.2" rx="0.8"/><rect x="1502.8" y="298.2" width="3.2" height="3.2" rx="0.8"/><rect x="1497.4" y="308.40000000000003" width="3.2" height="3.2" rx="0.8"/></g>
<path d="M1551.0,96.4 Q1558.4,88.4 1565.8000000000002,96.4 Q1558.4,104.4 1551.0,96.4Z" fill="#e4e4e4"/><circle cx="1558.4" cy="96.4" r="3.3" fill="#282828"/><circle cx="1558.4" cy="96.4" r="1.7" fill="#e4e4e4"/>
<path d="M1572,92.20000000000002 H1575.6 L1576.8,90.00000000000001 H1581.2 L1582.4,92.20000000000002 H1586 V101.4 H1572Z" fill="#e4e4e4"/><circle cx="1579" cy="96.60000000000001" r="3.4" fill="#282828"/><circle cx="1579" cy="96.60000000000001" r="2.2" fill="none" stroke="#e4e4e4" stroke-width="1"/>
<path d="M1551.0,117.3 Q1558.4,109.3 1565.8000000000002,117.3 Q1558.4,125.3 1551.0,117.3Z" fill="#e4e4e4"/><circle cx="1558.4" cy="117.3" r="3.3" fill="#282828"/><circle cx="1558.4" cy="117.3" r="1.7" fill="#e4e4e4"/>
<path d="M1572,113.10000000000001 H1575.6 L1576.8,110.9 H1581.2 L1582.4,113.10000000000001 H1586 V122.3 H1572Z" fill="#e4e4e4"/><circle cx="1579" cy="117.5" r="3.4" fill="#282828"/><circle cx="1579" cy="117.5" r="2.2" fill="none" stroke="#e4e4e4" stroke-width="1"/>
<path d="M1551.0,159 Q1558.4,151 1565.8000000000002,159 Q1558.4,167 1551.0,159Z" fill="#e4e4e4"/><circle cx="1558.4" cy="159" r="3.3" fill="#282828"/><circle cx="1558.4" cy="159" r="1.7" fill="#e4e4e4"/>
<path d="M1572,154.8 H1575.6 L1576.8,152.6 H1581.2 L1582.4,154.8 H1586 V164.0 H1572Z" fill="#e4e4e4"/><circle cx="1579" cy="159.20000000000002" r="3.4" fill="#282828"/><circle cx="1579" cy="159.20000000000002" r="2.2" fill="none" stroke="#e4e4e4" stroke-width="1"/>
<path d="M1551.0,179.8 Q1558.4,171.8 1565.8000000000002,179.8 Q1558.4,187.8 1551.0,179.8Z" fill="#e4e4e4"/><circle cx="1558.4" cy="179.8" r="3.3" fill="#282828"/><circle cx="1558.4" cy="179.8" r="1.7" fill="#e4e4e4"/>
<path d="M1572,175.60000000000002 H1575.6 L1576.8,173.4 H1581.2 L1582.4,175.60000000000002 H1586 V184.8 H1572Z" fill="#e4e4e4"/><circle cx="1579" cy="180.00000000000003" r="3.4" fill="#282828"/><circle cx="1579" cy="180.00000000000003" r="2.2" fill="none" stroke="#e4e4e4" stroke-width="1"/>
<path d="M1551.0,200.6 Q1558.4,192.6 1565.8000000000002,200.6 Q1558.4,208.6 1551.0,200.6Z" fill="#e4e4e4"/><circle cx="1558.4" cy="200.6" r="3.3" fill="#282828"/><circle cx="1558.4" cy="200.6" r="1.7" fill="#e4e4e4"/>
<path d="M1572,196.4 H1575.6 L1576.8,194.2 H1581.2 L1582.4,196.4 H1586 V205.6 H1572Z" fill="#e4e4e4"/><circle cx="1579" cy="200.8" r="3.4" fill="#282828"/><circle cx="1579" cy="200.8" r="2.2" fill="none" stroke="#e4e4e4" stroke-width="1"/>
<path d="M1551.0,263.1 Q1558.4,255.10000000000002 1565.8000000000002,263.1 Q1558.4,271.1 1551.0,263.1Z" fill="#e4e4e4"/><circle cx="1558.4" cy="263.1" r="3.3" fill="#282828"/><circle cx="1558.4" cy="263.1" r="1.7" fill="#e4e4e4"/>
<path d="M1572,258.9 H1575.6 L1576.8,256.7 H1581.2 L1582.4,258.9 H1586 V268.1 H1572Z" fill="#e4e4e4"/><circle cx="1579" cy="263.3" r="3.4" fill="#282828"/><circle cx="1579" cy="263.3" r="2.2" fill="none" stroke="#e4e4e4" stroke-width="1"/>
<path d="M1551.0,284 Q1558.4,276 1565.8000000000002,284 Q1558.4,292 1551.0,284Z" fill="#e4e4e4"/><circle cx="1558.4" cy="284" r="3.3" fill="#282828"/><circle cx="1558.4" cy="284" r="1.7" fill="#e4e4e4"/>
<path d="M1572,279.79999999999995 H1575.6 L1576.8,277.59999999999997 H1581.2 L1582.4,279.79999999999995 H1586 V289.0 H1572Z" fill="#e4e4e4"/><circle cx="1579" cy="284.2" r="3.4" fill="#282828"/><circle cx="1579" cy="284.2" r="2.2" fill="none" stroke="#e4e4e4" stroke-width="1"/>
<path d="M1551.0,304.8 Q1558.4,296.8 1565.8000000000002,304.8 Q1558.4,312.8 1551.0,304.8Z" fill="#e4e4e4"/><circle cx="1558.4" cy="304.8" r="3.3" fill="#282828"/><circle cx="1558.4" cy="304.8" r="1.7" fill="#e4e4e4"/>
<path d="M1572,300.59999999999997 H1575.6 L1576.8,298.4 H1581.2 L1582.4,300.59999999999997 H1586 V309.8 H1572Z" fill="#e4e4e4"/><circle cx="1579" cy="305.0" r="3.4" fill="#282828"/><circle cx="1579" cy="305.0" r="2.2" fill="none" stroke="#e4e4e4" stroke-width="1"/>
<rect x="1594" y="100" width="3.2" height="178" rx="1.6" fill="#3b3b3b" />
<rect x="1331.6" y="302.8" width="262" height="3.2" rx="1.6" fill="#3b3b3b" fill-opacity="0.85"/>
<rect x="1323" y="52" width="275" height="24.8" rx="0" fill="#2c2c2c" />
<rect x="1332.4" y="55.6" width="32.19999999999982" height="19.6" rx="3.5" fill="#2a2a2a" stroke="#3e3e3e" stroke-width="1"/>
<rect x="1337.6" y="59.4" width="5" height="3" fill="#e0e0e0"/><path d="M1340,62.4 V71.4 H1344 M1340,66.6 H1344" fill="none" stroke="#cfcfcf" stroke-width="1"/><rect x="1344.2" y="64.8" width="7.2" height="3" fill="#e0e0e0"/><rect x="1344.2" y="69.8" width="7.2" height="3" fill="#e0e0e0"/>
<path d="M1355.4,64.6 L1358,67.4 L1360.6,64.6" fill="none" stroke="#dcdcdc" stroke-width="1.4" stroke-linecap="round" stroke-linejoin="round"/>
<rect x="1370.4" y="55.6" width="32.19999999999982" height="19.6" rx="3.5" fill="#2a2a2a" stroke="#3e3e3e" stroke-width="1"/>
<g stroke="#d8d8d8" stroke-width="1.1" fill="none"><path d="M1375.8,63 V72.4 H1385.8"/><path d="M1378,61 V70.2 H1388"/></g><rect x="1380.2" y="58.6" width="10.4" height="9.4" fill="#d8d8d8"/><path d="M1381.4,66.8 L1384.4,62.8 L1386.4,65 L1387.8,63.8 L1389.6,66.8Z" fill="#2a2a2a"/><circle cx="1388" cy="61" r="1" fill="#2a2a2a"/>
<path d="M1393.6000000000001,64.6 L1396.2,67.4 L1398.8,64.6" fill="none" stroke="#dcdcdc" stroke-width="1.4" stroke-linecap="round" stroke-linejoin="round"/>
<rect x="1419.4" y="55.6" width="122.59999999999991" height="19.6" rx="3.5" fill="#1d1d1d" stroke="#3e3e3e" stroke-width="1"/>
<circle cx="1434.4" cy="63.6" r="4.6" fill="none" stroke="#dcdcdc" stroke-width="1.3"/><path d="M1431.2,67.2 L1426.4,72.2" stroke="#dcdcdc" stroke-width="1.5" stroke-linecap="round"/>
<text x="1446.6" y="69.4" fill="#7a7a7a" font-size="12" text-anchor="start" >Search</text>
<rect x="1559" y="55.6" width="32.40000000000009" height="19.6" rx="3.5" fill="#2a2a2a" stroke="#3e3e3e" stroke-width="1"/>
<path d="M1563.6,59.4 H1576.8 L1571.6,65.6 V71.6 L1568.8,69.8 V65.6Z" fill="none" stroke="#dcdcdc" stroke-width="1.2" stroke-linejoin="round"/>
<path d="M1582.0,65.0 L1584.6,67.80000000000001 L1587.1999999999998,65.0" fill="none" stroke="#dcdcdc" stroke-width="1.4" stroke-linecap="round" stroke-linejoin="round"/></svg></div>
<div class="reg" id="properties" style="left:1323px;top:310px;width:275px;height:539.2px;border-radius:5px;background:#303030"><svg width="275" height="539.2" viewBox="1323 310 275 539.2"><rect x="1323" y="310" width="275" height="539.2" rx="0" fill="#303030" />
<rect x="1323" y="336.2" width="29.6" height="539.2" rx="0" fill="#1e1e1e" />
<path d="M1352.6,600.6 H1329 Q1325,600.6 1325,604.6 V624.4 Q1325,628.4 1329,628.4 H1352.6Z" fill="#303030"/>
<rect x="1331.8" y="314" width="32.6" height="18.6" rx="3.5" fill="#252525" stroke="#3a3a3a" stroke-width="1"/>
<g><rect x="1336.8" y="316.4" width="15.4" height="6.2" rx="3.1" fill="#e6e6e6"/><rect x="1343.8" y="317.6" width="6.8" height="3.8" rx="1.6" fill="#252525"/><rect x="1336.8" y="324.2" width="15.4" height="6.2" rx="3.1" fill="#e6e6e6"/><rect x="1347" y="325.4" width="3.6" height="3.8" rx="1.4" fill="#252525"/></g>
<path d="M1355.4,322.6 L1358,325.4 L1360.6,322.6" fill="none" stroke="#dcdcdc" stroke-width="1.4" stroke-linecap="round" stroke-linejoin="round"/>
<rect x="1396" y="314" width="121.4" height="18.6" rx="3.5" fill="#1d1d1d" stroke="#383838" stroke-width="1"/>
<circle cx="1410" cy="321.4" r="4.4" fill="none" stroke="#dcdcdc" stroke-width="1.3"/><path d="M1407,325 L1402.6,329.6" stroke="#dcdcdc" stroke-width="1.5" stroke-linecap="round"/>
<text x="1422.4" y="327.4" fill="#7a7a7a" font-size="12" text-anchor="start" >Search</text>
<rect x="1570.8" y="314" width="19.4" height="18.6" rx="3.5" fill="#282828" stroke="#3a3a3a" stroke-width="1"/>
<path d="M1577.8000000000002,322.6 L1580.4,325.4 L1583.0,322.6" fill="none" stroke="#dcdcdc" stroke-width="1.4" stroke-linecap="round" stroke-linejoin="round"/>
<g fill="#d2d2d2"><rect x="1333.6" y="351.6" width="1.6" height="6"/><rect x="1332.4" y="357.4" width="4" height="6.6" rx="1"/><path d="M1341,351.4 V355 L1342.6,356.4 V364 H1345 V356.4 L1346.4,355 V351.4 L1344.8,351.4 V354 H1342.6 V351.4Z"/></g>
<path d="M1332.4,390.6 H1334.6 L1335.6,388.8 H1339.4 L1340.4,390.6 H1345.2 V400.4 H1332.4Z" fill="#d2d2d2"/><rect x="1334" y="392.6" width="7.4" height="6" fill="#1e1e1e"/><rect x="1334.8" y="393.4" width="5.8" height="4.4" fill="#8a8a8a"/><circle cx="1343.4" cy="393.2" r="0.8" fill="#1e1e1e"/>
<path d="M1332.2,418 H1345.4 V425 H1343.4 V422 H1334.2 V425 H1332.2Z" fill="#d2d2d2"/><rect x="1334.8" y="423" width="8" height="8" fill="none" stroke="#d2d2d2" stroke-width="1.2"/><path d="M1335.6,430 L1338.4,426.4 L1340,428.2 L1342,430Z" fill="#d2d2d2"/>
<g stroke="#d2d2d2" stroke-width="1" fill="none"><path d="M1332.4,450.6 V460.2 H1342"/><path d="M1334.4,448.6 V458.2 H1344"/></g><rect x="1336.2" y="446.6" width="9.6" height="9.6" fill="#d2d2d2"/><path d="M1337.2,455 L1340.2,450.8 L1342,453 L1343.2,452 L1345,455Z" fill="#1e1e1e"/>
<path d="M1332,487.6 L1335,478.4 Q1335.8,477.4 1336.6,478.4 L1338.8,484.6 Q1337,486 1337.2,488.4 L1332.6,488.4Z" fill="#d2d2d2"/><circle cx="1343.4" cy="478.4" r="1.8" fill="#d2d2d2"/><circle cx="1341.6" cy="486.4" r="3.2" fill="none" stroke="#d2d2d2" stroke-width="1.2"/><circle cx="1341.6" cy="486.4" r="1" fill="#d2d2d2"/>
<circle cx="1338.6" cy="512" r="6.4" fill="none" stroke="#d85a6a" stroke-width="1.4"/><path d="M1334,508.4 Q1337,507 1339.4,508.6 Q1340.6,510.6 1338.4,511.8 Q1336.4,513.4 1337.6,516.4 Q1335,516.6 1333.2,513.6Z M1341.4,511 Q1343.6,511.4 1344.2,513.6 Q1343.2,516 1341.4,516.4 Q1340.4,513.8 1341.4,511Z" fill="#d85a6a"/>
<rect x="1332" y="543" width="13.2" height="3.8" fill="none" stroke="#d2d2d2" stroke-width="1.2"/><rect x="1333" y="548.2" width="11.2" height="7.6" fill="none" stroke="#d2d2d2" stroke-width="1.2"/><path d="M1336.8,550.6 H1340.4" stroke="#d2d2d2" stroke-width="1.2"/>
<rect x="1334.4" y="581" width="8.6" height="8.6" fill="#e8924a"/><path d="M1332,582.4 V578.8 H1335.6 M1341.8,578.8 H1345.4 V582.4 M1345.4,588.2 V591.8 H1341.8 M1335.6,591.8 H1332 V588.2" fill="none" stroke="#a8683a" stroke-width="1"/>
<path d="M1339.8,607.8 Q1343.1999999999998,607.0 1345.3999999999999,609.8 L1342.0,611.8 L1342.8,614.1999999999999 L1346.0,612.8 Q1345.8,616.8 1342.0,617.4 Q1340.3999999999999,617.4 1339.1999999999998,616.8 L1335.0,621.0 Q1333.0,622.0 1331.8,620.4 Q1330.8,618.6 1332.3999999999999,617.1999999999999 L1336.8,613.8 Q1335.6,609.8 1339.8,607.8Z" fill="#73a1f5" stroke="#73a1f5" stroke-width="0.6" stroke-linejoin="round"/>
<g stroke="#6f9ae8" stroke-width="1.2" fill="none"><path d="M1334,637.6 H1344 M1334,637.6 V649 M1334,637.6 L1344,648"/></g><circle cx="1334" cy="637.6" r="2.2" fill="#6f9ae8"/><circle cx="1344.4" cy="637.8" r="1.5" fill="#6f9ae8"/><circle cx="1334" cy="649" r="1.5" fill="#6f9ae8"/><circle cx="1344.2" cy="648.4" r="1.7" fill="#6f9ae8"/>
<path d="M1341.6,667.4 A6.2,6.2 0 1 0 1344.6,675.4" fill="none" stroke="#6f9ae8" stroke-width="1.3"/><circle cx="1338.6" cy="672.8" r="2.6" fill="#6f9ae8"/><circle cx="1344" cy="667.6" r="1.5" fill="#6f9ae8"/>
<path d="M1332.4,704 Q1332.2,699.6 1336,698.6 L1342.4,695.6 Q1345.6,695 1345.6,698.4 Q1345.2,700.6 1343.2,702 L1342.4,705.4 Q1340.4,709.2 1336.6,708.6 Q1332.8,708 1332.4,704Z" fill="none" stroke="#6f9ae8" stroke-width="1.3"/><circle cx="1337.4" cy="703.8" r="2.3" fill="none" stroke="#6f9ae8" stroke-width="1.3"/><circle cx="1343" cy="698.2" r="0.9" fill="#6f9ae8"/>
<g fill="none" stroke="#2fc08e" stroke-width="1.2"><path d="M1334.3999999999999,726.4 H1342.8 M1333.3999999999999,728 L1337.6,735.2 M1343.8,728 L1339.6,735.2"/><rect x="1331.6" y="724.4" width="3.2" height="3.2" rx="0.8"/><rect x="1342.3999999999999" y="724.4" width="3.2" height="3.2" rx="0.8"/><rect x="1337.0" y="734.6" width="3.2" height="3.2" rx="0.8"/></g>
<circle cx="1338.6" cy="760.2" r="6.6" fill="#d8606e"/><path d="M1338.6,753.6 A6.6,6.6 0 0 1 1345.2,760.2 H1338.6Z" fill="#1e1e1e"/><path d="M1338.6,766.8 A6.6,6.6 0 0 1 1332,760.2 H1338.6Z" fill="#1e1e1e" fill-opacity="0.55"/><circle cx="1338.6" cy="760.2" r="6.6" fill="none" stroke="#d8606e" stroke-width="1"/>
<rect x="1331.6" y="789.8" width="14.2" height="14.2" fill="#d0647a"/><rect x="1332.90" y="794.05" width="2.95" height="2.95" fill="#241a1c"/><rect x="1332.90" y="799.95" width="2.95" height="2.95" fill="#241a1c"/><rect x="1335.85" y="791.10" width="2.95" height="2.95" fill="#241a1c"/><rect x="1335.85" y="797.00" width="2.95" height="2.95" fill="#241a1c"/><rect x="1338.80" y="794.05" width="2.95" height="2.95" fill="#241a1c"/><rect x="1338.80" y="799.95" width="2.95" height="2.95" fill="#241a1c"/><rect x="1341.75" y="791.10" width="2.95" height="2.95" fill="#241a1c"/><rect x="1341.75" y="797.00" width="2.95" height="2.95" fill="#241a1c"/>
<rect x="1367" y="350.4" width="7.4" height="7.4" fill="#e6e6e6"/><path d="M1364.4,351.6 V348 H1368 M1373.6,348 H1377.2 V351.6 M1377.2,356.8 V360.4 H1373.6 M1368,360.4 H1364.4 V356.8" fill="none" stroke="#bdbdbd" stroke-width="1"/>
<text x="1387.6" y="358.2" fill="#e6e6e6" font-size="12" text-anchor="start" >Cube</text>
<g transform="translate(1582,354) rotate(40)" stroke="#a0a0a0" stroke-width="1.1" fill="none"><path d="M-2.4,-7 H2.4 M-1.7,-7 V-2.4 L-3.6,0.4 H3.6 L1.7,-2.4 V-7 M0,0.4 V7"/></g>
<rect x="1361.6" y="380.6" width="229.6" height="19.6" rx="3.5" fill="#545454" />
<path d="M1369,390.4 H1377.6 M1373.3,386.1 V394.7" stroke="#e0e0e0" stroke-width="1.1"/>
<text x="1485" y="394.4" fill="#e6e6e6" font-size="12" text-anchor="middle" >Add Modifier</text></svg></div>
<div class="reg" id="timeline" style="left:1px;top:789px;width:1320px;height:60.3px;border-radius:5px;background:#1b1b1b"><svg width="1320" height="60.3" viewBox="1 789 1320 60.3"><rect x="1" y="789" width="1320" height="26" rx="0" fill="#303030" />
<rect x="1" y="815" width="1320" height="36" rx="0" fill="#1c1c1c" />
<rect x="8.8" y="793.4" width="32.4" height="18.6" rx="3.5" fill="#282828" stroke="#3c3c3c" stroke-width="1"/>
<circle cx="20.6" cy="802.4" r="7" fill="#ececec"/><path d="M22.8,798.4 L19.6,802.4 L22.8,806.4" fill="none" stroke="#282828" stroke-width="1.7" stroke-linejoin="miter"/>
<path d="M32.4,802.2 L35,805.0 L37.6,802.2" fill="none" stroke="#dcdcdc" stroke-width="1.4" stroke-linecap="round" stroke-linejoin="round"/>
<rect x="47.6" y="793.4" width="138.8" height="18.6" rx="3.5" fill="#2a2a2a" stroke="#3c3c3c" stroke-width="1"/><line x1="123.4" y1="793.4" x2="123.4" y2="812" stroke="#3c3c3c"/>
<text x="55.4" y="806.4" fill="#dcdcdc" font-size="12" text-anchor="start" >Playback</text>
<path d="M114.4,802.4 L117,805.1999999999999 L119.6,802.4" fill="none" stroke="#dcdcdc" stroke-width="1.4" stroke-linecap="round" stroke-linejoin="round"/>
<text x="132" y="806.4" fill="#dcdcdc" font-size="12" text-anchor="start" >Keying</text>
<path d="M177.8,802.4 L180.4,805.1999999999999 L183.0,802.4" fill="none" stroke="#dcdcdc" stroke-width="1.4" stroke-linecap="round" stroke-linejoin="round"/>
<text x="196.8" y="806.4" fill="#dcdcdc" font-size="12" text-anchor="start" >View</text>
<text x="238.2" y="806.4" fill="#dcdcdc" font-size="12" text-anchor="start" >Marker</text>
<path d="M568.5,793.2 H584 V812.2 H568.5 Q565,812.2 565,808.7 V796.7 Q565,793.2 568.5,793.2Z" fill="#545454"/>
<path d="M584,793.2 H601.5 Q605,793.2 605,796.7 V808.7 Q605,812.2 601.5,812.2 H584Z" fill="#2a2a2a"/>
<circle cx="574.6" cy="802.7" r="5" fill="none" stroke="#cfcfcf" stroke-width="1.1"/>
<path d="M592.0,802.2 L594.6,805.0 L597.2,802.2" fill="none" stroke="#5a5a5a" stroke-width="1.4" stroke-linecap="round" stroke-linejoin="round"/>
<rect x="611.5" y="793.2" width="123.5" height="19" rx="3.5" fill="#545454" />
<line x1="631.5" y1="793.2" x2="631.5" y2="812.2" stroke="#444" stroke-width="1"/>
<line x1="652.4" y1="793.2" x2="652.4" y2="812.2" stroke="#444" stroke-width="1"/>
<line x1="673" y1="793.2" x2="673" y2="812.2" stroke="#444" stroke-width="1"/>
<line x1="693.8" y1="793.2" x2="693.8" y2="812.2" stroke="#444" stroke-width="1"/>
<line x1="714.8" y1="793.2" x2="714.8" y2="812.2" stroke="#444" stroke-width="1"/>
<rect x="616" y="797.3000000000001" width="2.6" height="10.8" fill="#f0f0f0"/><path d="M619.4,802.7 L625.4,797.9000000000001 V807.5Z" fill="#f0f0f0"/>
<path d="M633.6,802.7 L638,798.1 L642.4,802.7 L638,807.3000000000001Z M644,802.7 L649,798.7 V806.7Z" fill="#f0f0f0"/>
<path d="M657.4,802.7 L667.6,796.7 V808.7Z" fill="#f0f0f0"/>
<path d="M688.6,802.7 L678.4,796.7 V808.7Z" fill="#f0f0f0"/>
<path d="M712.4,802.7 L708,798.1 L703.6,802.7 L708,807.3000000000001Z M702,802.7 L697,798.7 V806.7Z" fill="#f0f0f0"/>
<rect x="727.4" y="797.3000000000001" width="2.6" height="10.8" fill="#f0f0f0"/><path d="M726.6,802.7 L720.6,797.9000000000001 V807.5Z" fill="#f0f0f0"/>
<rect x="1029" y="793.4" width="76" height="18.8" rx="3.5" fill="#545454" />
<text x="1066.4" y="806.4" fill="#dcdcdc" font-size="12" text-anchor="middle" >0</text>
<rect x="1111" y="793.4" width="201.6" height="18.8" rx="3.5" fill="#545454" />
<line x1="1131" y1="793.4" x2="1131" y2="812.2" stroke="#444"/><line x1="1224.6" y1="793.4" x2="1224.6" y2="812.2" stroke="#444"/>
<circle cx="1121" cy="803.4" r="5.2" fill="none" stroke="#e6e6e6" stroke-width="1.2"/><path d="M1121,800.4 V803.6 H1123.6 M1119,796.6 H1123 M1125.4,798 L1126.6,799" stroke="#e6e6e6" stroke-width="1.2" fill="none"/>
<text x="1147.4" y="806.4" fill="#dcdcdc" font-size="12" text-anchor="start" >Start</text>
<text x="1210" y="806.4" fill="#dcdcdc" font-size="12" text-anchor="end" >1</text>
<text x="1240.8" y="806.4" fill="#dcdcdc" font-size="12" text-anchor="start" >End</text>
<text x="1298.4" y="806.4" fill="#dcdcdc" font-size="12" text-anchor="end" >250</text>
<rect x="32" y="818" width="25" height="18" rx="3.5" fill="#4772b3" />
<line x1="44.5" y1="835" x2="44.5" y2="849.3" stroke="#4772b3" stroke-width="1.6"/>
<text x="44.5" y="831.8" fill="#fff" font-size="12.4" text-anchor="middle" >0</text>
<text x="93.6" y="832" fill="#a6a6a6" font-size="12.4" text-anchor="middle" >10</text>
<line x1="93.6" y1="846.8" x2="93.6" y2="849.3" stroke="#5c5c5c" stroke-width="1"/>
<text x="142.7" y="832" fill="#a6a6a6" font-size="12.4" text-anchor="middle" >20</text>
<line x1="142.7" y1="846.8" x2="142.7" y2="849.3" stroke="#5c5c5c" stroke-width="1"/>
<text x="191.7" y="832" fill="#a6a6a6" font-size="12.4" text-anchor="middle" >30</text>
<line x1="191.7" y1="846.8" x2="191.7" y2="849.3" stroke="#5c5c5c" stroke-width="1"/>
<text x="240.8" y="832" fill="#a6a6a6" font-size="12.4" text-anchor="middle" >40</text>
<line x1="240.8" y1="846.8" x2="240.8" y2="849.3" stroke="#5c5c5c" stroke-width="1"/>
<text x="289.9" y="832" fill="#a6a6a6" font-size="12.4" text-anchor="middle" >50</text>
<line x1="289.9" y1="846.8" x2="289.9" y2="849.3" stroke="#5c5c5c" stroke-width="1"/>
<text x="339.0" y="832" fill="#a6a6a6" font-size="12.4" text-anchor="middle" >60</text>
<line x1="339.0" y1="846.8" x2="339.0" y2="849.3" stroke="#5c5c5c" stroke-width="1"/>
<text x="388.1" y="832" fill="#a6a6a6" font-size="12.4" text-anchor="middle" >70</text>
<line x1="388.1" y1="846.8" x2="388.1" y2="849.3" stroke="#5c5c5c" stroke-width="1"/>
<text x="437.1" y="832" fill="#a6a6a6" font-size="12.4" text-anchor="middle" >80</text>
<line x1="437.1" y1="846.8" x2="437.1" y2="849.3" stroke="#5c5c5c" stroke-width="1"/>
<text x="486.2" y="832" fill="#a6a6a6" font-size="12.4" text-anchor="middle" >90</text>
<line x1="486.2" y1="846.8" x2="486.2" y2="849.3" stroke="#5c5c5c" stroke-width="1"/>
<text x="535.3" y="832" fill="#a6a6a6" font-size="12.4" text-anchor="middle" >100</text>
<line x1="535.3" y1="846.8" x2="535.3" y2="849.3" stroke="#5c5c5c" stroke-width="1"/>
<text x="584.4" y="832" fill="#a6a6a6" font-size="12.4" text-anchor="middle" >110</text>
<line x1="584.4" y1="846.8" x2="584.4" y2="849.3" stroke="#5c5c5c" stroke-width="1"/>
<text x="633.5" y="832" fill="#a6a6a6" font-size="12.4" text-anchor="middle" >120</text>
<line x1="633.5" y1="846.8" x2="633.5" y2="849.3" stroke="#5c5c5c" stroke-width="1"/>
<text x="682.5" y="832" fill="#a6a6a6" font-size="12.4" text-anchor="middle" >130</text>
<line x1="682.5" y1="846.8" x2="682.5" y2="849.3" stroke="#5c5c5c" stroke-width="1"/>
<text x="731.6" y="832" fill="#a6a6a6" font-size="12.4" text-anchor="middle" >140</text>
<line x1="731.6" y1="846.8" x2="731.6" y2="849.3" stroke="#5c5c5c" stroke-width="1"/>
<text x="780.7" y="832" fill="#a6a6a6" font-size="12.4" text-anchor="middle" >150</text>
<line x1="780.7" y1="846.8" x2="780.7" y2="849.3" stroke="#5c5c5c" stroke-width="1"/>
<text x="829.8" y="832" fill="#a6a6a6" font-size="12.4" text-anchor="middle" >160</text>
<line x1="829.8" y1="846.8" x2="829.8" y2="849.3" stroke="#5c5c5c" stroke-width="1"/>
<text x="878.9" y="832" fill="#a6a6a6" font-size="12.4" text-anchor="middle" >170</text>
<line x1="878.9" y1="846.8" x2="878.9" y2="849.3" stroke="#5c5c5c" stroke-width="1"/>
<text x="927.9" y="832" fill="#a6a6a6" font-size="12.4" text-anchor="middle" >180</text>
<line x1="927.9" y1="846.8" x2="927.9" y2="849.3" stroke="#5c5c5c" stroke-width="1"/>
<text x="977.0" y="832" fill="#a6a6a6" font-size="12.4" text-anchor="middle" >190</text>
<line x1="977.0" y1="846.8" x2="977.0" y2="849.3" stroke="#5c5c5c" stroke-width="1"/>
<text x="1026.1" y="832" fill="#a6a6a6" font-size="12.4" text-anchor="middle" >200</text>
<line x1="1026.1" y1="846.8" x2="1026.1" y2="849.3" stroke="#5c5c5c" stroke-width="1"/>
<text x="1075.2" y="832" fill="#a6a6a6" font-size="12.4" text-anchor="middle" >210</text>
<line x1="1075.2" y1="846.8" x2="1075.2" y2="849.3" stroke="#5c5c5c" stroke-width="1"/>
<text x="1124.3" y="832" fill="#a6a6a6" font-size="12.4" text-anchor="middle" >220</text>
<line x1="1124.3" y1="846.8" x2="1124.3" y2="849.3" stroke="#5c5c5c" stroke-width="1"/>
<text x="1173.3" y="832" fill="#a6a6a6" font-size="12.4" text-anchor="middle" >230</text>
<line x1="1173.3" y1="846.8" x2="1173.3" y2="849.3" stroke="#5c5c5c" stroke-width="1"/>
<text x="1222.4" y="832" fill="#a6a6a6" font-size="12.4" text-anchor="middle" >240</text>
<line x1="1222.4" y1="846.8" x2="1222.4" y2="849.3" stroke="#5c5c5c" stroke-width="1"/>
<text x="1271.5" y="832" fill="#a6a6a6" font-size="12.4" text-anchor="middle" >250</text>
<line x1="1271.5" y1="846.8" x2="1271.5" y2="849.3" stroke="#5c5c5c" stroke-width="1"/>
<rect x="9" y="838.4" width="1303.2" height="10.2" rx="5" fill="#4e4e4e" />
<rect x="1315" y="824.6" width="4.2" height="23.6" rx="1.5" fill="#454545" />
<circle cx="13.6" cy="843.4" r="3" fill="#262626"/><circle cx="1306.8" cy="843.4" r="3" fill="#262626"/>
<path d="M1.6,834.2 L5.2,838 L1.6,841.8" stroke="#999" stroke-width="1.1" fill="none"/>
<path d="M1319,833.6 L1315.6,837.6 L1319,841.6" stroke="#b0b0b0" stroke-width="1.1" fill="none"/></svg></div>
<div class="reg" id="taskbar" style="left:0;top:850px;width:1600px;height:50px"><svg width="1600" height="50" viewBox="0 850 1600 50"><defs><linearGradient id="tbg" x1="0" y1="0" x2="1" y2="0"><stop offset="0" stop-color="#2b2625"/><stop offset="0.025" stop-color="#2d2522"/><stop offset="0.05" stop-color="#38241a"/><stop offset="0.12" stop-color="#39241a"/><stop offset="0.2" stop-color="#33221b"/><stop offset="0.26" stop-color="#2c211d"/><stop offset="0.3" stop-color="#33201e"/><stop offset="0.335" stop-color="#3a1f20"/><stop offset="0.37" stop-color="#3a2821"/><stop offset="0.45" stop-color="#3a2a22"/><stop offset="0.52" stop-color="#36271f"/><stop offset="0.6" stop-color="#2f221d"/><stop offset="0.67" stop-color="#2c1f1c"/><stop offset="0.72" stop-color="#3c1c22"/><stop offset="0.745" stop-color="#381c21"/><stop offset="0.78" stop-color="#2b2023"/><stop offset="0.82" stop-color="#2f201b"/><stop offset="0.93" stop-color="#31201a"/><stop offset="0.975" stop-color="#351a1e"/><stop offset="1" stop-color="#36181e"/></linearGradient><linearGradient id="win" x1="0" y1="0" x2="1" y2="1"><stop offset="0" stop-color="#6fd4ff"/><stop offset="1" stop-color="#1f8fe6"/></linearGradient><linearGradient id="cop" x1="0" y1="0" x2="1" y2="1"><stop offset="0" stop-color="#2f7bf0"/><stop offset="0.35" stop-color="#38c6c0"/><stop offset="0.6" stop-color="#f2c53d"/><stop offset="0.8" stop-color="#f0537a"/><stop offset="1" stop-color="#b45cf0"/></linearGradient></defs>
<rect x="0" y="850" width="1600" height="50" rx="0" fill="url(#tbg)" />
<line x1="0" y1="850.5" x2="1600" y2="850.5" stroke="#4a3f3b" stroke-width="1" stroke-opacity="0.7"/>
<rect x="533.2" y="863" width="11.8" height="11.8" rx="1" fill="url(#win)" />
<rect x="546.2" y="863" width="11.8" height="11.8" rx="1" fill="url(#win)" />
<rect x="533.2" y="876" width="11.8" height="11.8" rx="1" fill="url(#win)" />
<rect x="546.2" y="876" width="11.8" height="11.8" rx="1" fill="url(#win)" />
<rect x="571.6" y="858" width="229.6" height="34" rx="17" fill="#4b3e39" stroke="#5a4c46" stroke-width="0.8"/>
<circle cx="590.8" cy="873.6" r="5.6" fill="none" stroke="#f0f0f0" stroke-width="1.5"/><path d="M594.8,878 L598.6,882" stroke="#f0f0f0" stroke-width="1.6" stroke-linecap="round"/>
<text x="610.4" y="880.4" fill="#e8e4e2" font-size="13.6" text-anchor="start" >Search</text>
<ellipse cx="771" cy="884" rx="23" ry="3.4" fill="#e8c9a0"/><path d="M752.4,874.6 L764,869.4 L768.4,878.4 L756.6,883.6Z" fill="#f3f1ea" stroke="#3f9a6a" stroke-width="1.6" stroke-linejoin="round"/><path d="M763.6,874 L769.2,866.4 L771.2,867.8 L765.6,875.4Z" fill="#f4a63a"/><rect x="776" y="866" width="14.6" height="19.4" rx="6" fill="#2f7be8"/><rect x="778" y="876" width="10.6" height="7.4" rx="2" fill="#1f5fc8"/><path d="M779.6,866.8 Q783.3,861 787,866.8" stroke="#1f5fc8" stroke-width="1.6" fill="none"/>
<defs><linearGradient id="cpl" x1="0" y1="0" x2="0" y2="1"><stop offset="0" stop-color="#1f8df5"/><stop offset="0.3" stop-color="#22b6e0"/><stop offset="0.6" stop-color="#6fd15a"/><stop offset="0.85" stop-color="#f5d33a"/><stop offset="1" stop-color="#f7a53a"/></linearGradient><linearGradient id="cpr" x1="0" y1="0" x2="0" y2="1"><stop offset="0" stop-color="#b05cf5"/><stop offset="0.4" stop-color="#e85ab0"/><stop offset="0.75" stop-color="#fa6f6a"/><stop offset="1" stop-color="#fcb24a"/></linearGradient></defs>
<path d="M819.6,880 L823.2,886 H826 L824,879.6Z" fill="#f4592f"/>
<path d="M829.4,868.8 H835.4 Q838.8,869 838,872 L834.4,883.6 Q833.6,886 831,886 H823 Q821.4,885.8 822,883.8 L825.6,871.4 Q826.4,868.8 829.4,868.8Z" fill="url(#cpr)"/>
<path d="M817,863 H826.4 Q829.2,863 828.4,866 L824.8,877.6 Q824,879.8 821.4,879.8 H815.4 Q813,879.6 813.4,877 L814.4,866 Q814.8,863 817,863Z" fill="url(#cpl)"/>
<path d="M826.6,863.2 Q830.6,863.6 831.4,868.8 H828.2 L827,872Z" fill="#1a49c8"/>
<path d="M826.2,870.6 H828.4 L825.2,880.6 H823Z" fill="#1d1416"/>
<g transform="translate(871.7,875)"><circle r="12.4" fill="#fff"/><path d="M0,0 L-10.74,-6.2 A12.4,12.4 0 0 1 10.74,-6.2Z" fill="#e8453c"/><path d="M0,0 L10.74,-6.2 A12.4,12.4 0 0 1 0,12.4Z" fill="#fbbc05"/><path d="M0,0 L0,12.4 A12.4,12.4 0 0 1 -10.74,-6.2Z" fill="#34a853"/><circle r="5.7" fill="#fff"/><circle r="4.5" fill="#4285f4"/></g>
<g transform="translate(917,874.6)"><circle r="12.2" fill="#1ed760"/><g fill="none" stroke="#1b1b1b" stroke-linecap="round"><path d="M-7,-3.6 Q0.4,-6 7.4,-2.4" stroke-width="2.3"/><path d="M-6.2,0.6 Q0.2,-1.4 6.2,1.6" stroke-width="1.9"/><path d="M-5.2,4.6 Q0,3 5,5.4" stroke-width="1.6"/></g></g>
<g transform="translate(963.6,874.6)"><circle r="11.6" fill="none" stroke="#e8274b" stroke-width="2.6"/><ellipse rx="5.6" ry="9.6" fill="none" stroke="#e8274b" stroke-width="1.8"/></g>
<rect x="960" y="892.2" width="7.4" height="2.6" rx="1.3" fill="#9a9a9a" />
<path d="M997,866.6 Q997,864.6 999,864.6 H1005.4 L1008,867.4 H1020 Q1022,867.4 1022,869.4 V885 Q1022,887 1020,887 H999 Q997,887 997,885Z" fill="#f5b829"/><path d="M997,870.6 H1022 V885 Q1022,887 1020,887 H999 Q997,887 997,885Z" fill="#fdd550"/><rect x="1001.6" y="879.6" width="16" height="7.4" rx="1.4" fill="#1f7fd8"/><rect x="1005" y="881.8" width="9.2" height="1.6" fill="#7cc0f5"/>
<rect x="1034" y="854" width="41.8" height="42" rx="4.5" fill="#3b2f2c" stroke="#463a36" stroke-width="0.8"/>
<g transform="translate(1058.4,876.4) scale(1)"><g stroke="#f08a1e" fill="none" stroke-linecap="round"><path d="M-5,-10.2 L2.4,-5" stroke-width="2.7"/><path d="M-10.8,-5.4 H0" stroke-width="2.9"/><path d="M-14,3.6 L-4.6,-3.8" stroke-width="3.1"/></g><path d="M-9,-4.2 L-1,-6.6 L-6,3Z" fill="#f08a1e"/><circle cx="0" cy="0.2" r="8" fill="#f08a1e"/><ellipse cx="-0.2" cy="0" rx="5.2" ry="4.7" fill="#fff"/><circle cx="-0.2" cy="0" r="2.9" fill="#1f5fa8"/></g>
<rect x="1046.4" y="891.7" width="16.8" height="3.2" rx="1.6" fill="#f48a6c" />
<path d="M1297.2,878.6 L1302.4,873.4 L1307.6,878.6" fill="none" stroke="#f2f2f2" stroke-width="1.5" stroke-linecap="round" stroke-linejoin="round"/>
<rect x="1327.6" y="869.2" width="15.6" height="12.4" rx="2.2" fill="none" stroke="#f2f2f2" stroke-width="1.3"/><path d="M1327.6,877 H1343.2 M1335.4,877 V881.6" stroke="#f2f2f2" stroke-width="1.2"/>
<text x="1375.6" y="871.2" fill="#f4f4f4" font-size="11" text-anchor="middle" >ENG</text>
<text x="1375.8" y="887.9" fill="#f4f4f4" font-size="11" text-anchor="middle" >INTL</text>
<g fill="none" stroke="#f2f2f2" stroke-width="1.4" stroke-linecap="round"><path d="M1406.6,872.6 Q1414.4,865.6 1422.2,872.6"/><path d="M1409.2,875.6 Q1414.4,871 1419.6,875.6"/><path d="M1411.8,878.4 Q1414.4,876.2 1417,878.4"/></g><circle cx="1414.4" cy="880.6" r="1.3" fill="#f2f2f2"/>
<path d="M1432.4,872.8 H1435 L1438.6,869.4 V881.4 L1435,878 H1432.4Z" fill="none" stroke="#f2f2f2" stroke-width="1.2" stroke-linejoin="round"/><path d="M1441.6,872.8 L1446.4,877.8 M1446.4,872.8 L1441.6,877.8" stroke="#f2f2f2" stroke-width="1.2"/>
<rect x="1457" y="870.4" width="14" height="9.6" rx="2.4" fill="none" stroke="#f2f2f2" stroke-width="1.3"/><rect x="1459" y="872.4" width="6.6" height="5.6" rx="1" fill="#f2f2f2"/><path d="M1472.4,873.6 V876.8" stroke="#f2f2f2" stroke-width="1.6" stroke-linecap="round"/>
<text x="1555" y="870.8" fill="#f4f4f4" font-size="12.8" text-anchor="end" >12:13</text>
<text x="1555" y="887.8" fill="#f4f4f4" font-size="12.8" text-anchor="end" >30/10/2024</text>
<path d="M1564.4,880.6 Q1566,878.6 1566,874.6 Q1566,869.2 1571,869 Q1576,869.2 1576,874.6 Q1576,878.6 1577.6,880.6Z" fill="#f5a98c"/><path d="M1569,882 Q1571,884.4 1573,882Z" fill="#f5a98c"/></svg></div>
</body></html>
